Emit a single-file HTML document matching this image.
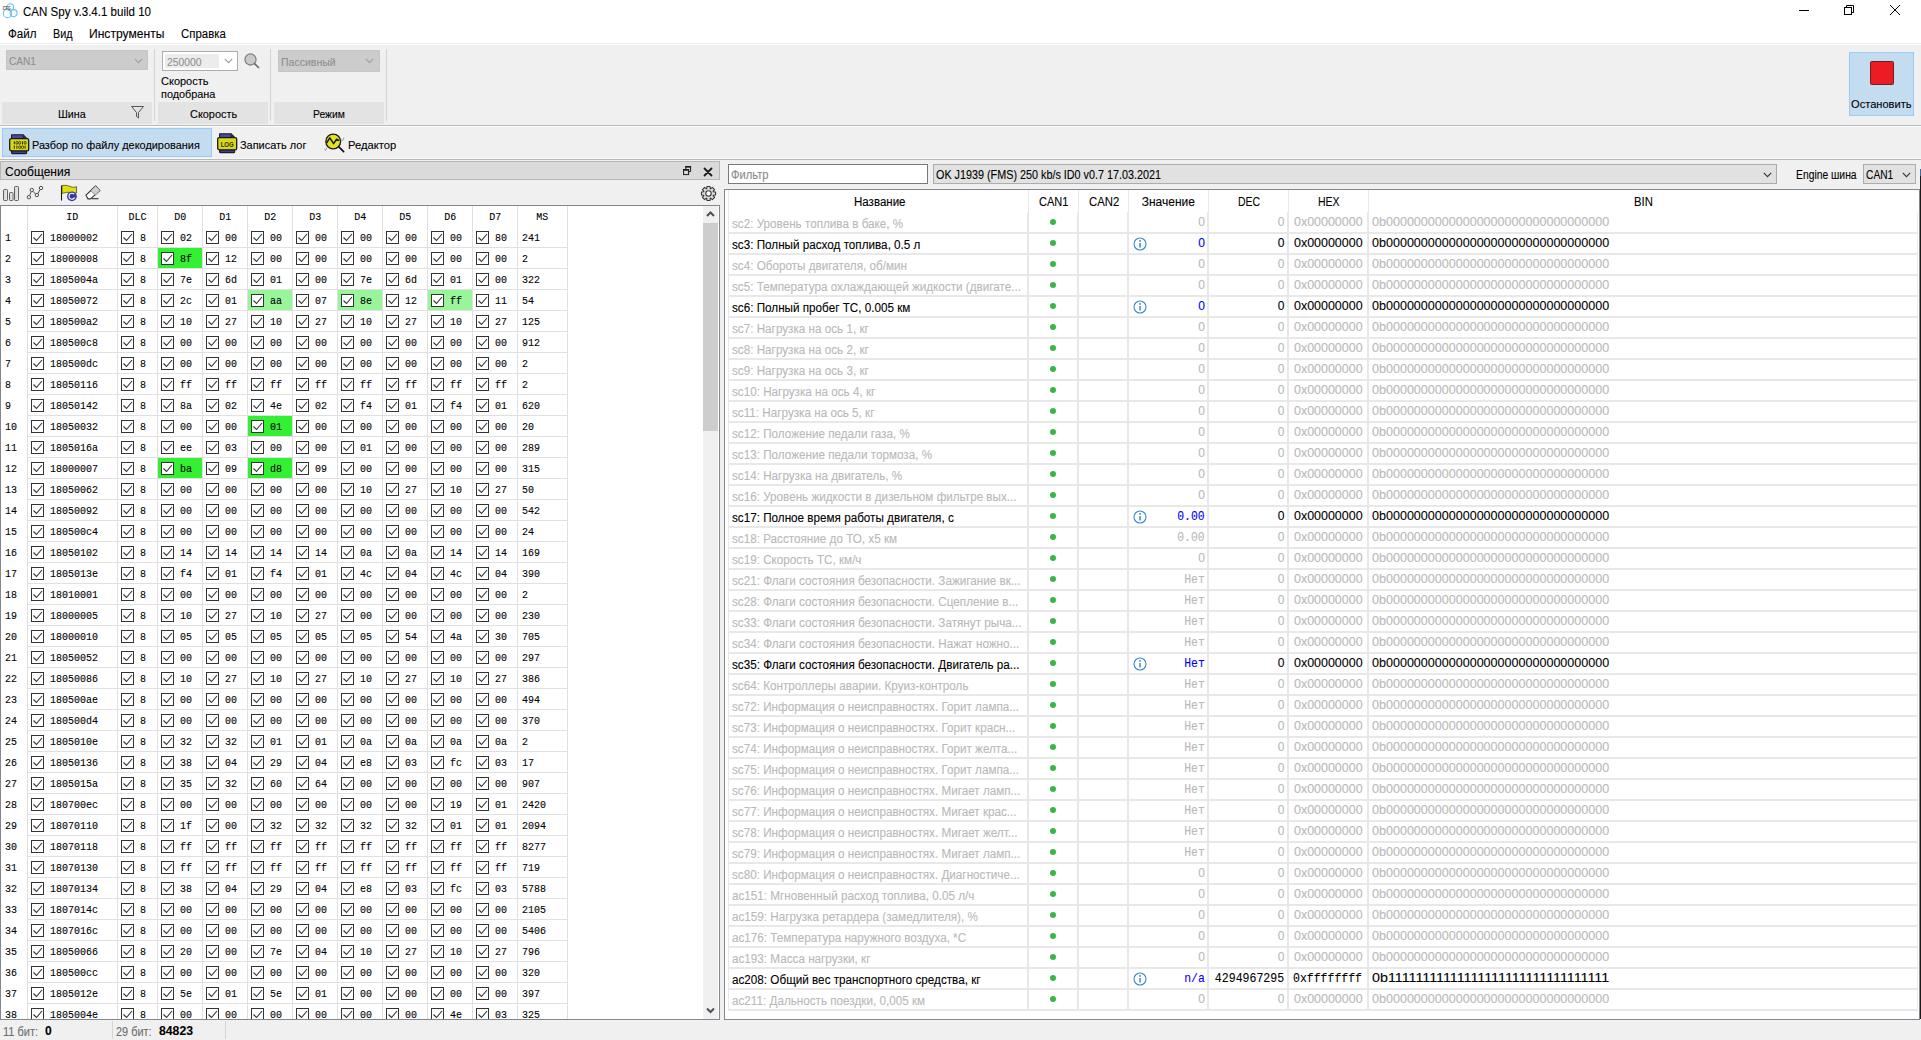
<!DOCTYPE html><html><head><meta charset="utf-8"><title>CAN Spy</title><style>
*{margin:0;padding:0;box-sizing:border-box}
html,body{width:1921px;height:1040px;overflow:hidden;background:#f0f0f0;position:relative;font-family:'Liberation Sans', sans-serif;font-size:12px;color:#000}
.t{position:absolute;white-space:nowrap;line-height:14px;-webkit-text-stroke:0.1px currentColor}
.cb{position:absolute;width:13px;height:13px;border:1px solid #333;background:#fff}
</style></head><body>
<div style="position:absolute;left:0px;top:0px;width:1921px;height:43px;background:#fff">
</div>
<svg style="position:absolute;left:0;top:0" width="20" height="20" viewBox="0 0 20 20"><circle cx="10.2" cy="7.2" r="3.4" fill="none" stroke="#70c0f0" stroke-width="1.1"/><circle cx="7.5" cy="13.4" r="4.2" fill="none" stroke="#70c0f0" stroke-width="1.1"/><circle cx="13.6" cy="13.1" r="3.5" fill="none" stroke="#70c0f0" stroke-width="1.1"/><text x="2.7" y="10" font-size="5" font-weight="bold" font-family="Liberation Sans" fill="#555" textLength="8.2" lengthAdjust="spacingAndGlyphs">CFG</text></svg>
<div class="t" style="left:23px;top:5px;font-family:'Liberation Sans', sans-serif;font-size:12px;transform:scaleX(0.9611);transform-origin:0 0;">CAN Spy v.3.4.1 build 10</div>
<svg style="position:absolute;left:1790px;top:0" width="131" height="22"><line x1="9" y1="10.5" x2="19" y2="10.5" stroke="#000" stroke-width="1"/><rect x="54.5" y="7.5" width="7" height="7" fill="none" stroke="#000"/><path d="M56.5 7.5 V5.5 H63.5 V12.5 H61.5" fill="none" stroke="#000"/><path d="M100 5 L110 15 M110 5 L100 15" stroke="#000" stroke-width="1"/></svg>
<div class="t" style="left:8px;top:27px;font-family:'Liberation Sans', sans-serif;font-size:12px;transform:scaleX(0.9656);transform-origin:0 0;">Файл</div>
<div class="t" style="left:53px;top:27px;font-family:'Liberation Sans', sans-serif;font-size:12px;transform:scaleX(0.8978);transform-origin:0 0;">Вид</div>
<div class="t" style="left:89px;top:27px;font-family:'Liberation Sans', sans-serif;font-size:12px;transform:scaleX(1.0076);transform-origin:0 0;">Инструменты</div>
<div class="t" style="left:181px;top:27px;font-family:'Liberation Sans', sans-serif;font-size:12px;transform:scaleX(0.9516);transform-origin:0 0;">Справка</div>
<div style="position:absolute;left:0px;top:43px;width:1921px;height:1px;background:#ececec">
</div>
<div style="position:absolute;left:0px;top:44px;width:1921px;height:1px;background:#ffffff">
</div>
<div style="position:absolute;left:0px;top:125px;width:1921px;height:1px;background:#bcbcbc">
</div>
<div style="position:absolute;left:0px;top:126px;width:1921px;height:1px;background:#ffffff">
</div>
<div style="position:absolute;left:6px;top:50px;width:142px;height:20px;background:#cccccc;border:1px solid #c6c6c6">
</div>
<div class="t" style="left:9px;top:54px;font-family:'Liberation Sans', sans-serif;font-size:11px;transform:scaleX(0.9201);transform-origin:0 0;color:#8f8f8f">CAN1</div>
<svg style="position:absolute;left:134px;top:58px" width="10" height="6"><path d="M0.8 0.8 L4.5 4.6 L8.2 0.8" fill="none" stroke="#a0a0a0" stroke-width="1.1"/></svg>
<div style="position:absolute;left:2px;top:102px;width:150px;height:22px;background:#e3e3e3">
</div>
<div class="t" style="left:58px;top:107px;font-family:'Liberation Sans', sans-serif;font-size:11px;transform:scaleX(0.9781);transform-origin:0 0;">Шина</div>
<svg style="position:absolute;left:131px;top:106px" width="13" height="13"><path d="M0.5 0.5 H12.5 L7.5 6.5 V12 L5.5 10.5 V6.5 Z" fill="none" stroke="#555"/></svg>
<div style="position:absolute;left:154px;top:49px;width:1px;height:72px;background:#d3d3d3">
</div>
<div style="position:absolute;left:162px;top:51px;width:76px;height:20px;background:#fff;border:1px solid #adadad">
</div>
<div style="position:absolute;left:165px;top:54px;width:54px;height:14px;background:#ececec">
</div>
<div class="t" style="left:167px;top:55px;font-family:'Liberation Sans', sans-serif;font-size:11px;transform:scaleX(0.9396);transform-origin:0 0;color:#8f8f8f">250000</div>
<svg style="position:absolute;left:224px;top:58px" width="10" height="6"><path d="M0.8 0.8 L4.5 4.6 L8.2 0.8" fill="none" stroke="#999" stroke-width="1.1"/></svg>
<svg style="position:absolute;left:244px;top:53px" width="16" height="16"><circle cx="6.5" cy="6.5" r="5.6" fill="#c9c9c9" stroke="#7a7a7a" stroke-width="1.1"/><path d="M10.3 10.3 L15 15" stroke="#6a6a6a" stroke-width="1.7"/></svg>
<div class="t" style="left:161px;top:74px;font-family:'Liberation Sans', sans-serif;font-size:11px;;">Скорость</div>
<div class="t" style="left:161px;top:87px;font-family:'Liberation Sans', sans-serif;font-size:11px;transform:scaleX(0.9871);transform-origin:0 0;">подобрана</div>
<div style="position:absolute;left:158px;top:102px;width:110px;height:22px;background:#e3e3e3">
</div>
<div class="t" style="left:190px;top:107px;font-family:'Liberation Sans', sans-serif;font-size:11px;transform:scaleX(0.9934);transform-origin:0 0;">Скорость</div>
<div style="position:absolute;left:270px;top:49px;width:1px;height:72px;background:#d3d3d3">
</div>
<div style="position:absolute;left:278px;top:50px;width:102px;height:22px;background:#cccccc;border:1px solid #c6c6c6">
</div>
<div class="t" style="left:281px;top:55px;font-family:'Liberation Sans', sans-serif;font-size:11px;transform:scaleX(0.9573);transform-origin:0 0;color:#8f8f8f">Пассивный</div>
<svg style="position:absolute;left:365px;top:58px" width="10" height="6"><path d="M0.8 0.8 L4.5 4.6 L8.2 0.8" fill="none" stroke="#a0a0a0" stroke-width="1.1"/></svg>
<div style="position:absolute;left:274px;top:102px;width:110px;height:22px;background:#e3e3e3">
</div>
<div class="t" style="left:313px;top:107px;font-family:'Liberation Sans', sans-serif;font-size:11px;transform:scaleX(0.9404);transform-origin:0 0;">Режим</div>
<div style="position:absolute;left:386px;top:49px;width:1px;height:72px;background:#d3d3d3">
</div>
<div style="position:absolute;left:1849px;top:52px;width:65px;height:64px;background:#c4dcf0;border:1px solid #99cbf3">
</div>
<div style="position:absolute;left:1870px;top:61px;width:24px;height:24px;background:#ec1c24;border:1px solid #6e2020;border-radius:1.5px">
</div>
<div class="t" style="left:1851px;top:97px;font-family:'Liberation Sans', sans-serif;font-size:11.5px;transform:scaleX(0.9653);transform-origin:0 0;">Остановить</div>
<div style="position:absolute;left:2px;top:128px;width:210px;height:29px;background:#c4dcf0;border:1px solid #99cbf3">
</div>
<svg style="position:absolute;left:8.5px;top:133.5px" width="22" height="22" viewBox="0 0 22 22"><path d="M2.6 9 V0.7 H14 L17.6 4.3 V9 Z" fill="#4848a4" stroke="#1a1a30" stroke-width="1.1" stroke-linejoin="round"/><path d="M14 0.7 V4.3 H17.6" fill="#2a2a60" stroke="#1a1a30" stroke-width="0.6"/><rect x="2.6" y="16" width="15" height="3.6" rx="0.6" fill="#3c3c90" stroke="#1a1a30" stroke-width="1.1"/><rect x="0.7" y="4.6" width="19" height="12.2" rx="1.6" fill="#d8d818" stroke="#1a1a1a" stroke-width="1.3"/><rect x="4.80" y="7.2" width="1" height="3.2" fill="#303010"/><ellipse cx="7.90" cy="8.8" rx="1.05" ry="1.45" fill="none" stroke="#303010" stroke-width="0.85"/><ellipse cx="10.70" cy="8.8" rx="1.05" ry="1.45" fill="none" stroke="#303010" stroke-width="0.85"/><rect x="13.00" y="7.2" width="1" height="3.2" fill="#303010"/><ellipse cx="16.10" cy="8.8" rx="1.05" ry="1.45" fill="none" stroke="#303010" stroke-width="0.85"/><rect x="4.80" y="11.6" width="1" height="3.2" fill="#303010"/><rect x="7.40" y="11.6" width="1" height="3.2" fill="#303010"/><ellipse cx="10.70" cy="13.2" rx="1.05" ry="1.45" fill="none" stroke="#303010" stroke-width="0.85"/><ellipse cx="13.50" cy="13.2" rx="1.05" ry="1.45" fill="none" stroke="#303010" stroke-width="0.85"/><rect x="15.60" y="11.6" width="1" height="3.2" fill="#303010"/></svg>
<div class="t" style="left:32px;top:138px;font-family:'Liberation Sans', sans-serif;font-size:11px;transform:scaleX(0.9925);transform-origin:0 0;">Разбор по файлу декодирования</div>
<svg style="position:absolute;left:216.5px;top:132.5px" width="22" height="22" viewBox="0 0 22 22"><path d="M2.6 9 V0.7 H14 L17.6 4.3 V9 Z" fill="#4848a4" stroke="#1a1a30" stroke-width="1.1" stroke-linejoin="round"/><path d="M14 0.7 V4.3 H17.6" fill="#2a2a60" stroke="#1a1a30" stroke-width="0.6"/><rect x="2.6" y="16" width="15" height="3.6" rx="0.6" fill="#3c3c90" stroke="#1a1a30" stroke-width="1.1"/><rect x="0.7" y="4.6" width="19" height="12.2" rx="1.6" fill="#d8d818" stroke="#1a1a1a" stroke-width="1.3"/><text x="10.2" y="14.2" text-anchor="middle" font-size="6.6" font-weight="bold" font-family="Liberation Sans" fill="#2a2a10" textLength="13" lengthAdjust="spacingAndGlyphs">LOG</text></svg>
<div class="t" style="left:240px;top:138px;font-family:'Liberation Sans', sans-serif;font-size:11px;transform:scaleX(0.9948);transform-origin:0 0;">Записать лог</div>
<svg style="position:absolute;left:322px;top:131px" width="24" height="24" viewBox="0 0 24 24"><circle cx="11.2" cy="10.5" r="7.4" fill="#e2e222" stroke="#1a1a1a" stroke-width="1.3"/><path d="M4.6 12 L7.8 6.8 L11.6 12.6 L14.6 8.2 L17.2 9.6" fill="none" stroke="#1a1a1a" stroke-width="1.5" stroke-linejoin="round"/><path d="M16.6 15.6 L21.6 20.6" stroke="#1a1a1a" stroke-width="1.8" stroke-linecap="round"/><path d="M2.6 17.5 L3.6 19.5 L5 16.5 M19.5 8.5 L20.5 10 L22 6.5" fill="none" stroke="#8a9a8a" stroke-width="0.8"/></svg>
<div class="t" style="left:348px;top:138px;font-family:'Liberation Sans', sans-serif;font-size:11px;transform:scaleX(1.0156);transform-origin:0 0;">Редактор</div>
<div style="position:absolute;left:0px;top:158px;width:1921px;height:1px;background:#f8f8f8">
</div>
<div style="position:absolute;left:0px;top:159px;width:1921px;height:1px;background:#b9b9b9">
</div>
<div style="position:absolute;left:0px;top:161px;width:720px;height:19px;background:#dadada;border:1px solid #b6b6b6">
</div>
<div class="t" style="left:5px;top:165px;font-family:'Liberation Sans', sans-serif;font-size:12px;;">Сообщения</div>
<svg style="position:absolute;left:682px;top:165px" width="12" height="12"><path d="M3.8 4 V1.6 H8.6 V6.6 H6.6" fill="none" stroke="#1a1a1a" stroke-width="1"/><rect x="3.3" y="1" width="5.8" height="1.6" fill="#1a1a1a"/><rect x="1.6" y="4.6" width="5" height="5" fill="none" stroke="#1a1a1a" stroke-width="1"/><rect x="1.1" y="4.1" width="6" height="1.6" fill="#1a1a1a"/></svg>
<svg style="position:absolute;left:703px;top:167px" width="10" height="10"><path d="M1.5 1.5 L8.5 8.5 M8.5 1.5 L1.5 8.5" stroke="#1a1a1a" stroke-width="1.8" stroke-linecap="round"/></svg>
<svg style="position:absolute;left:0;top:180px" width="110" height="26" viewBox="0 0 110 26"><defs><linearGradient id="bg1" x1="0" x2="1"><stop offset="0" stop-color="#d0d0d0"/><stop offset="1" stop-color="#f0f0f0"/></linearGradient></defs><rect x="3.5" y="9.5" width="4" height="11" rx="0.8" fill="url(#bg1)" stroke="#606060"/><rect x="9.5" y="12.5" width="3.5" height="8" rx="0.8" fill="url(#bg1)" stroke="#606060"/><rect x="14.5" y="6.5" width="4" height="14" rx="0.8" fill="url(#bg1)" stroke="#606060"/><path d="M29.6 15.6 L31.2 11.6 M33 11.4 L35.8 14.2 M37.8 13.6 L40.2 9.4" stroke="#505050" stroke-width="1"/><circle cx="28.9" cy="17.2" r="1.7" fill="#f0f0f0" stroke="#505050" stroke-width="1"/><circle cx="31.8" cy="10" r="1.7" fill="#f0f0f0" stroke="#505050" stroke-width="1"/><circle cx="36.9" cy="15" r="1.7" fill="#f0f0f0" stroke="#505050" stroke-width="1"/><circle cx="41" cy="8" r="1.7" fill="#f0f0f0" stroke="#505050" stroke-width="1"/><path d="M61.5 20.6 V5.5" stroke="#1a1a1a" stroke-width="1.1"/><path d="M62 5.6 C65 5 68 5.4 71 6.8 C73 7.6 75 7.4 76.5 6.6 V13 C74 13.6 72 13 69.5 12.4 C67 11.8 64.5 13 62 13.4 Z" fill="#e0e010" stroke="#3a3a10" stroke-width="0.7"/><circle cx="71.9" cy="16.3" r="4.9" fill="#3c3ca8"/><path d="M74.2 14.2 A3 3 0 1 0 74.6 17.6" fill="none" stroke="#ffffff" stroke-width="1.1"/><circle cx="71.9" cy="16.3" r="1.3" fill="#3030a0"/><path d="M86 15.2 L95.6 6 L99.9 10.6 L90.5 18.9 L88 18.9 Z" fill="#ffffff" stroke="#303030" stroke-width="1.1" stroke-linejoin="round"/><path d="M95.6 6 L99.9 10.6 L95.2 15 L91 10.7 Z" fill="#cfcfcf"/><path d="M91 10.7 L95.2 15" stroke="#505050" stroke-width="0.6"/><path d="M91.5 18.7 H98.5" stroke="#303030" stroke-width="1.1"/></svg>
<svg style="position:absolute;left:699.5px;top:184.5px" width="17" height="17" viewBox="0 0 17 17"><path d="M6.70 3.73 L6.93 1.47 L10.07 1.47 L10.30 3.73 L10.60 3.85 L12.36 2.42 L14.58 4.64 L13.15 6.40 L13.27 6.70 L15.53 6.93 L15.53 10.07 L13.27 10.30 L13.15 10.60 L14.58 12.36 L12.36 14.58 L10.60 13.15 L10.30 13.27 L10.07 15.53 L6.93 15.53 L6.70 13.27 L6.40 13.15 L4.64 14.58 L2.42 12.36 L3.85 10.60 L3.73 10.30 L1.47 10.07 L1.47 6.93 L3.73 6.70 L3.85 6.40 L2.42 4.64 L4.64 2.42 L6.40 3.85 Z" fill="#dadada" stroke="#383838" stroke-width="1.1" stroke-linejoin="round"/><circle cx="8.5" cy="8.5" r="2.7" fill="#fff" stroke="#383838" stroke-width="1.1"/></svg>
<div style="position:absolute;left:0px;top:205px;width:720px;height:815px;background:#fff;border:1px solid #828790">
</div>
<div style="position:absolute;left:27px;top:206px;width:1px;height:813px;background:#e0e0e0">
</div>
<div style="position:absolute;left:117px;top:206px;width:1px;height:813px;background:#e0e0e0">
</div>
<div style="position:absolute;left:157px;top:206px;width:1px;height:813px;background:#e0e0e0">
</div>
<div style="position:absolute;left:202px;top:206px;width:1px;height:813px;background:#e0e0e0">
</div>
<div style="position:absolute;left:247px;top:206px;width:1px;height:813px;background:#e0e0e0">
</div>
<div style="position:absolute;left:292px;top:206px;width:1px;height:813px;background:#e0e0e0">
</div>
<div style="position:absolute;left:337px;top:206px;width:1px;height:813px;background:#e0e0e0">
</div>
<div style="position:absolute;left:382px;top:206px;width:1px;height:813px;background:#e0e0e0">
</div>
<div style="position:absolute;left:427px;top:206px;width:1px;height:813px;background:#e0e0e0">
</div>
<div style="position:absolute;left:472px;top:206px;width:1px;height:813px;background:#e0e0e0">
</div>
<div style="position:absolute;left:517px;top:206px;width:1px;height:813px;background:#e0e0e0">
</div>
<div style="position:absolute;left:567px;top:206px;width:1px;height:813px;background:#e0e0e0">
</div>
<div class="t" style="left:66.14px;top:210px;font-family:'Liberation Mono', monospace;font-size:10.6px;transform:scaleX(0.9435);transform-origin:6.36px 0;">ID</div>
<div class="t" style="left:127.96px;top:210px;font-family:'Liberation Mono', monospace;font-size:10.6px;transform:scaleX(0.9435);transform-origin:9.54px 0;">DLC</div>
<div class="t" style="left:173.64px;top:210px;font-family:'Liberation Mono', monospace;font-size:10.6px;transform:scaleX(0.9435);transform-origin:6.36px 0;">D0</div>
<div class="t" style="left:218.64px;top:210px;font-family:'Liberation Mono', monospace;font-size:10.6px;transform:scaleX(0.9435);transform-origin:6.36px 0;">D1</div>
<div class="t" style="left:263.64px;top:210px;font-family:'Liberation Mono', monospace;font-size:10.6px;transform:scaleX(0.9435);transform-origin:6.36px 0;">D2</div>
<div class="t" style="left:308.64px;top:210px;font-family:'Liberation Mono', monospace;font-size:10.6px;transform:scaleX(0.9435);transform-origin:6.36px 0;">D3</div>
<div class="t" style="left:353.64px;top:210px;font-family:'Liberation Mono', monospace;font-size:10.6px;transform:scaleX(0.9435);transform-origin:6.36px 0;">D4</div>
<div class="t" style="left:398.64px;top:210px;font-family:'Liberation Mono', monospace;font-size:10.6px;transform:scaleX(0.9435);transform-origin:6.36px 0;">D5</div>
<div class="t" style="left:443.64px;top:210px;font-family:'Liberation Mono', monospace;font-size:10.6px;transform:scaleX(0.9435);transform-origin:6.36px 0;">D6</div>
<div class="t" style="left:488.64px;top:210px;font-family:'Liberation Mono', monospace;font-size:10.6px;transform:scaleX(0.9435);transform-origin:6.36px 0;">D7</div>
<div class="t" style="left:536.14px;top:210px;font-family:'Liberation Mono', monospace;font-size:10.6px;transform:scaleX(0.9435);transform-origin:6.36px 0;">MS</div>
<div style="position:absolute;left:27px;top:247px;width:540px;height:1px;background:#e0e0e0">
</div>
<div class="t" style="left:5px;top:231px;font-family:'Liberation Mono', monospace;font-size:10.6px;transform:scaleX(0.9435);transform-origin:0 0;">1</div>
<div class="cb" style="left:31px;top:231px"><svg width="11" height="11" style="position:absolute;left:0;top:0"><path d="M1.5 5.5 L4.5 8.5 L10 2" fill="none" stroke="#333" stroke-width="1.1"/></svg></div>
<div class="t" style="left:50px;top:231px;font-family:'Liberation Mono', monospace;font-size:10.6px;transform:scaleX(0.9438);transform-origin:0 0;">18000002</div>
<div class="cb" style="left:121px;top:231px"><svg width="11" height="11" style="position:absolute;left:0;top:0"><path d="M1.5 5.5 L4.5 8.5 L10 2" fill="none" stroke="#333" stroke-width="1.1"/></svg></div>
<div class="t" style="left:140px;top:231px;font-family:'Liberation Mono', monospace;font-size:10.6px;transform:scaleX(0.9435);transform-origin:0 0;">8</div>
<div class="cb" style="left:161px;top:231px"><svg width="11" height="11" style="position:absolute;left:0;top:0"><path d="M1.5 5.5 L4.5 8.5 L10 2" fill="none" stroke="#333" stroke-width="1.1"/></svg></div>
<div class="t" style="left:180px;top:231px;font-family:'Liberation Mono', monospace;font-size:10.6px;transform:scaleX(0.9435);transform-origin:0 0;">02</div>
<div class="cb" style="left:206px;top:231px"><svg width="11" height="11" style="position:absolute;left:0;top:0"><path d="M1.5 5.5 L4.5 8.5 L10 2" fill="none" stroke="#333" stroke-width="1.1"/></svg></div>
<div class="t" style="left:225px;top:231px;font-family:'Liberation Mono', monospace;font-size:10.6px;transform:scaleX(0.9435);transform-origin:0 0;">00</div>
<div class="cb" style="left:251px;top:231px"><svg width="11" height="11" style="position:absolute;left:0;top:0"><path d="M1.5 5.5 L4.5 8.5 L10 2" fill="none" stroke="#333" stroke-width="1.1"/></svg></div>
<div class="t" style="left:270px;top:231px;font-family:'Liberation Mono', monospace;font-size:10.6px;transform:scaleX(0.9435);transform-origin:0 0;">00</div>
<div class="cb" style="left:296px;top:231px"><svg width="11" height="11" style="position:absolute;left:0;top:0"><path d="M1.5 5.5 L4.5 8.5 L10 2" fill="none" stroke="#333" stroke-width="1.1"/></svg></div>
<div class="t" style="left:315px;top:231px;font-family:'Liberation Mono', monospace;font-size:10.6px;transform:scaleX(0.9435);transform-origin:0 0;">00</div>
<div class="cb" style="left:341px;top:231px"><svg width="11" height="11" style="position:absolute;left:0;top:0"><path d="M1.5 5.5 L4.5 8.5 L10 2" fill="none" stroke="#333" stroke-width="1.1"/></svg></div>
<div class="t" style="left:360px;top:231px;font-family:'Liberation Mono', monospace;font-size:10.6px;transform:scaleX(0.9435);transform-origin:0 0;">00</div>
<div class="cb" style="left:386px;top:231px"><svg width="11" height="11" style="position:absolute;left:0;top:0"><path d="M1.5 5.5 L4.5 8.5 L10 2" fill="none" stroke="#333" stroke-width="1.1"/></svg></div>
<div class="t" style="left:405px;top:231px;font-family:'Liberation Mono', monospace;font-size:10.6px;transform:scaleX(0.9435);transform-origin:0 0;">00</div>
<div class="cb" style="left:431px;top:231px"><svg width="11" height="11" style="position:absolute;left:0;top:0"><path d="M1.5 5.5 L4.5 8.5 L10 2" fill="none" stroke="#333" stroke-width="1.1"/></svg></div>
<div class="t" style="left:450px;top:231px;font-family:'Liberation Mono', monospace;font-size:10.6px;transform:scaleX(0.9435);transform-origin:0 0;">00</div>
<div class="cb" style="left:476px;top:231px"><svg width="11" height="11" style="position:absolute;left:0;top:0"><path d="M1.5 5.5 L4.5 8.5 L10 2" fill="none" stroke="#333" stroke-width="1.1"/></svg></div>
<div class="t" style="left:495px;top:231px;font-family:'Liberation Mono', monospace;font-size:10.6px;transform:scaleX(0.9435);transform-origin:0 0;">80</div>
<div class="t" style="left:522px;top:231px;font-family:'Liberation Mono', monospace;font-size:10.6px;transform:scaleX(0.9435);transform-origin:0 0;">241</div>
<div style="position:absolute;left:27px;top:268px;width:540px;height:1px;background:#e0e0e0">
</div>
<div class="t" style="left:5px;top:252px;font-family:'Liberation Mono', monospace;font-size:10.6px;transform:scaleX(0.9435);transform-origin:0 0;">2</div>
<div style="position:absolute;left:158px;top:248px;width:44px;height:20px;background:#33f033">
</div>
<div class="cb" style="left:31px;top:252px"><svg width="11" height="11" style="position:absolute;left:0;top:0"><path d="M1.5 5.5 L4.5 8.5 L10 2" fill="none" stroke="#333" stroke-width="1.1"/></svg></div>
<div class="t" style="left:50px;top:252px;font-family:'Liberation Mono', monospace;font-size:10.6px;transform:scaleX(0.9438);transform-origin:0 0;">18000008</div>
<div class="cb" style="left:121px;top:252px"><svg width="11" height="11" style="position:absolute;left:0;top:0"><path d="M1.5 5.5 L4.5 8.5 L10 2" fill="none" stroke="#333" stroke-width="1.1"/></svg></div>
<div class="t" style="left:140px;top:252px;font-family:'Liberation Mono', monospace;font-size:10.6px;transform:scaleX(0.9435);transform-origin:0 0;">8</div>
<div class="cb" style="left:161px;top:252px"><svg width="11" height="11" style="position:absolute;left:0;top:0"><path d="M1.5 5.5 L4.5 8.5 L10 2" fill="none" stroke="#333" stroke-width="1.1"/></svg></div>
<div class="t" style="left:180px;top:252px;font-family:'Liberation Mono', monospace;font-size:10.6px;transform:scaleX(0.9435);transform-origin:0 0;">8f</div>
<div class="cb" style="left:206px;top:252px"><svg width="11" height="11" style="position:absolute;left:0;top:0"><path d="M1.5 5.5 L4.5 8.5 L10 2" fill="none" stroke="#333" stroke-width="1.1"/></svg></div>
<div class="t" style="left:225px;top:252px;font-family:'Liberation Mono', monospace;font-size:10.6px;transform:scaleX(0.9435);transform-origin:0 0;">12</div>
<div class="cb" style="left:251px;top:252px"><svg width="11" height="11" style="position:absolute;left:0;top:0"><path d="M1.5 5.5 L4.5 8.5 L10 2" fill="none" stroke="#333" stroke-width="1.1"/></svg></div>
<div class="t" style="left:270px;top:252px;font-family:'Liberation Mono', monospace;font-size:10.6px;transform:scaleX(0.9435);transform-origin:0 0;">00</div>
<div class="cb" style="left:296px;top:252px"><svg width="11" height="11" style="position:absolute;left:0;top:0"><path d="M1.5 5.5 L4.5 8.5 L10 2" fill="none" stroke="#333" stroke-width="1.1"/></svg></div>
<div class="t" style="left:315px;top:252px;font-family:'Liberation Mono', monospace;font-size:10.6px;transform:scaleX(0.9435);transform-origin:0 0;">00</div>
<div class="cb" style="left:341px;top:252px"><svg width="11" height="11" style="position:absolute;left:0;top:0"><path d="M1.5 5.5 L4.5 8.5 L10 2" fill="none" stroke="#333" stroke-width="1.1"/></svg></div>
<div class="t" style="left:360px;top:252px;font-family:'Liberation Mono', monospace;font-size:10.6px;transform:scaleX(0.9435);transform-origin:0 0;">00</div>
<div class="cb" style="left:386px;top:252px"><svg width="11" height="11" style="position:absolute;left:0;top:0"><path d="M1.5 5.5 L4.5 8.5 L10 2" fill="none" stroke="#333" stroke-width="1.1"/></svg></div>
<div class="t" style="left:405px;top:252px;font-family:'Liberation Mono', monospace;font-size:10.6px;transform:scaleX(0.9435);transform-origin:0 0;">00</div>
<div class="cb" style="left:431px;top:252px"><svg width="11" height="11" style="position:absolute;left:0;top:0"><path d="M1.5 5.5 L4.5 8.5 L10 2" fill="none" stroke="#333" stroke-width="1.1"/></svg></div>
<div class="t" style="left:450px;top:252px;font-family:'Liberation Mono', monospace;font-size:10.6px;transform:scaleX(0.9435);transform-origin:0 0;">00</div>
<div class="cb" style="left:476px;top:252px"><svg width="11" height="11" style="position:absolute;left:0;top:0"><path d="M1.5 5.5 L4.5 8.5 L10 2" fill="none" stroke="#333" stroke-width="1.1"/></svg></div>
<div class="t" style="left:495px;top:252px;font-family:'Liberation Mono', monospace;font-size:10.6px;transform:scaleX(0.9435);transform-origin:0 0;">00</div>
<div class="t" style="left:522px;top:252px;font-family:'Liberation Mono', monospace;font-size:10.6px;transform:scaleX(0.9435);transform-origin:0 0;">2</div>
<div style="position:absolute;left:27px;top:289px;width:540px;height:1px;background:#e0e0e0">
</div>
<div class="t" style="left:5px;top:273px;font-family:'Liberation Mono', monospace;font-size:10.6px;transform:scaleX(0.9435);transform-origin:0 0;">3</div>
<div class="cb" style="left:31px;top:273px"><svg width="11" height="11" style="position:absolute;left:0;top:0"><path d="M1.5 5.5 L4.5 8.5 L10 2" fill="none" stroke="#333" stroke-width="1.1"/></svg></div>
<div class="t" style="left:50px;top:273px;font-family:'Liberation Mono', monospace;font-size:10.6px;transform:scaleX(0.9438);transform-origin:0 0;">1805004a</div>
<div class="cb" style="left:121px;top:273px"><svg width="11" height="11" style="position:absolute;left:0;top:0"><path d="M1.5 5.5 L4.5 8.5 L10 2" fill="none" stroke="#333" stroke-width="1.1"/></svg></div>
<div class="t" style="left:140px;top:273px;font-family:'Liberation Mono', monospace;font-size:10.6px;transform:scaleX(0.9435);transform-origin:0 0;">8</div>
<div class="cb" style="left:161px;top:273px"><svg width="11" height="11" style="position:absolute;left:0;top:0"><path d="M1.5 5.5 L4.5 8.5 L10 2" fill="none" stroke="#333" stroke-width="1.1"/></svg></div>
<div class="t" style="left:180px;top:273px;font-family:'Liberation Mono', monospace;font-size:10.6px;transform:scaleX(0.9435);transform-origin:0 0;">7e</div>
<div class="cb" style="left:206px;top:273px"><svg width="11" height="11" style="position:absolute;left:0;top:0"><path d="M1.5 5.5 L4.5 8.5 L10 2" fill="none" stroke="#333" stroke-width="1.1"/></svg></div>
<div class="t" style="left:225px;top:273px;font-family:'Liberation Mono', monospace;font-size:10.6px;transform:scaleX(0.9435);transform-origin:0 0;">6d</div>
<div class="cb" style="left:251px;top:273px"><svg width="11" height="11" style="position:absolute;left:0;top:0"><path d="M1.5 5.5 L4.5 8.5 L10 2" fill="none" stroke="#333" stroke-width="1.1"/></svg></div>
<div class="t" style="left:270px;top:273px;font-family:'Liberation Mono', monospace;font-size:10.6px;transform:scaleX(0.9435);transform-origin:0 0;">01</div>
<div class="cb" style="left:296px;top:273px"><svg width="11" height="11" style="position:absolute;left:0;top:0"><path d="M1.5 5.5 L4.5 8.5 L10 2" fill="none" stroke="#333" stroke-width="1.1"/></svg></div>
<div class="t" style="left:315px;top:273px;font-family:'Liberation Mono', monospace;font-size:10.6px;transform:scaleX(0.9435);transform-origin:0 0;">00</div>
<div class="cb" style="left:341px;top:273px"><svg width="11" height="11" style="position:absolute;left:0;top:0"><path d="M1.5 5.5 L4.5 8.5 L10 2" fill="none" stroke="#333" stroke-width="1.1"/></svg></div>
<div class="t" style="left:360px;top:273px;font-family:'Liberation Mono', monospace;font-size:10.6px;transform:scaleX(0.9435);transform-origin:0 0;">7e</div>
<div class="cb" style="left:386px;top:273px"><svg width="11" height="11" style="position:absolute;left:0;top:0"><path d="M1.5 5.5 L4.5 8.5 L10 2" fill="none" stroke="#333" stroke-width="1.1"/></svg></div>
<div class="t" style="left:405px;top:273px;font-family:'Liberation Mono', monospace;font-size:10.6px;transform:scaleX(0.9435);transform-origin:0 0;">6d</div>
<div class="cb" style="left:431px;top:273px"><svg width="11" height="11" style="position:absolute;left:0;top:0"><path d="M1.5 5.5 L4.5 8.5 L10 2" fill="none" stroke="#333" stroke-width="1.1"/></svg></div>
<div class="t" style="left:450px;top:273px;font-family:'Liberation Mono', monospace;font-size:10.6px;transform:scaleX(0.9435);transform-origin:0 0;">01</div>
<div class="cb" style="left:476px;top:273px"><svg width="11" height="11" style="position:absolute;left:0;top:0"><path d="M1.5 5.5 L4.5 8.5 L10 2" fill="none" stroke="#333" stroke-width="1.1"/></svg></div>
<div class="t" style="left:495px;top:273px;font-family:'Liberation Mono', monospace;font-size:10.6px;transform:scaleX(0.9435);transform-origin:0 0;">00</div>
<div class="t" style="left:522px;top:273px;font-family:'Liberation Mono', monospace;font-size:10.6px;transform:scaleX(0.9435);transform-origin:0 0;">322</div>
<div style="position:absolute;left:27px;top:310px;width:540px;height:1px;background:#e0e0e0">
</div>
<div class="t" style="left:5px;top:294px;font-family:'Liberation Mono', monospace;font-size:10.6px;transform:scaleX(0.9435);transform-origin:0 0;">4</div>
<div style="position:absolute;left:248px;top:290px;width:44px;height:20px;background:#99f599">
</div>
<div style="position:absolute;left:338px;top:290px;width:44px;height:20px;background:#99f599">
</div>
<div style="position:absolute;left:428px;top:290px;width:44px;height:20px;background:#99f599">
</div>
<div class="cb" style="left:31px;top:294px"><svg width="11" height="11" style="position:absolute;left:0;top:0"><path d="M1.5 5.5 L4.5 8.5 L10 2" fill="none" stroke="#333" stroke-width="1.1"/></svg></div>
<div class="t" style="left:50px;top:294px;font-family:'Liberation Mono', monospace;font-size:10.6px;transform:scaleX(0.9438);transform-origin:0 0;">18050072</div>
<div class="cb" style="left:121px;top:294px"><svg width="11" height="11" style="position:absolute;left:0;top:0"><path d="M1.5 5.5 L4.5 8.5 L10 2" fill="none" stroke="#333" stroke-width="1.1"/></svg></div>
<div class="t" style="left:140px;top:294px;font-family:'Liberation Mono', monospace;font-size:10.6px;transform:scaleX(0.9435);transform-origin:0 0;">8</div>
<div class="cb" style="left:161px;top:294px"><svg width="11" height="11" style="position:absolute;left:0;top:0"><path d="M1.5 5.5 L4.5 8.5 L10 2" fill="none" stroke="#333" stroke-width="1.1"/></svg></div>
<div class="t" style="left:180px;top:294px;font-family:'Liberation Mono', monospace;font-size:10.6px;transform:scaleX(0.9435);transform-origin:0 0;">2c</div>
<div class="cb" style="left:206px;top:294px"><svg width="11" height="11" style="position:absolute;left:0;top:0"><path d="M1.5 5.5 L4.5 8.5 L10 2" fill="none" stroke="#333" stroke-width="1.1"/></svg></div>
<div class="t" style="left:225px;top:294px;font-family:'Liberation Mono', monospace;font-size:10.6px;transform:scaleX(0.9435);transform-origin:0 0;">01</div>
<div class="cb" style="left:251px;top:294px"><svg width="11" height="11" style="position:absolute;left:0;top:0"><path d="M1.5 5.5 L4.5 8.5 L10 2" fill="none" stroke="#333" stroke-width="1.1"/></svg></div>
<div class="t" style="left:270px;top:294px;font-family:'Liberation Mono', monospace;font-size:10.6px;transform:scaleX(0.9435);transform-origin:0 0;">aa</div>
<div class="cb" style="left:296px;top:294px"><svg width="11" height="11" style="position:absolute;left:0;top:0"><path d="M1.5 5.5 L4.5 8.5 L10 2" fill="none" stroke="#333" stroke-width="1.1"/></svg></div>
<div class="t" style="left:315px;top:294px;font-family:'Liberation Mono', monospace;font-size:10.6px;transform:scaleX(0.9435);transform-origin:0 0;">07</div>
<div class="cb" style="left:341px;top:294px"><svg width="11" height="11" style="position:absolute;left:0;top:0"><path d="M1.5 5.5 L4.5 8.5 L10 2" fill="none" stroke="#333" stroke-width="1.1"/></svg></div>
<div class="t" style="left:360px;top:294px;font-family:'Liberation Mono', monospace;font-size:10.6px;transform:scaleX(0.9435);transform-origin:0 0;">8e</div>
<div class="cb" style="left:386px;top:294px"><svg width="11" height="11" style="position:absolute;left:0;top:0"><path d="M1.5 5.5 L4.5 8.5 L10 2" fill="none" stroke="#333" stroke-width="1.1"/></svg></div>
<div class="t" style="left:405px;top:294px;font-family:'Liberation Mono', monospace;font-size:10.6px;transform:scaleX(0.9435);transform-origin:0 0;">12</div>
<div class="cb" style="left:431px;top:294px"><svg width="11" height="11" style="position:absolute;left:0;top:0"><path d="M1.5 5.5 L4.5 8.5 L10 2" fill="none" stroke="#333" stroke-width="1.1"/></svg></div>
<div class="t" style="left:450px;top:294px;font-family:'Liberation Mono', monospace;font-size:10.6px;transform:scaleX(0.9435);transform-origin:0 0;">ff</div>
<div class="cb" style="left:476px;top:294px"><svg width="11" height="11" style="position:absolute;left:0;top:0"><path d="M1.5 5.5 L4.5 8.5 L10 2" fill="none" stroke="#333" stroke-width="1.1"/></svg></div>
<div class="t" style="left:495px;top:294px;font-family:'Liberation Mono', monospace;font-size:10.6px;transform:scaleX(0.9435);transform-origin:0 0;">11</div>
<div class="t" style="left:522px;top:294px;font-family:'Liberation Mono', monospace;font-size:10.6px;transform:scaleX(0.9435);transform-origin:0 0;">54</div>
<div style="position:absolute;left:27px;top:331px;width:540px;height:1px;background:#e0e0e0">
</div>
<div class="t" style="left:5px;top:315px;font-family:'Liberation Mono', monospace;font-size:10.6px;transform:scaleX(0.9435);transform-origin:0 0;">5</div>
<div class="cb" style="left:31px;top:315px"><svg width="11" height="11" style="position:absolute;left:0;top:0"><path d="M1.5 5.5 L4.5 8.5 L10 2" fill="none" stroke="#333" stroke-width="1.1"/></svg></div>
<div class="t" style="left:50px;top:315px;font-family:'Liberation Mono', monospace;font-size:10.6px;transform:scaleX(0.9438);transform-origin:0 0;">180500a2</div>
<div class="cb" style="left:121px;top:315px"><svg width="11" height="11" style="position:absolute;left:0;top:0"><path d="M1.5 5.5 L4.5 8.5 L10 2" fill="none" stroke="#333" stroke-width="1.1"/></svg></div>
<div class="t" style="left:140px;top:315px;font-family:'Liberation Mono', monospace;font-size:10.6px;transform:scaleX(0.9435);transform-origin:0 0;">8</div>
<div class="cb" style="left:161px;top:315px"><svg width="11" height="11" style="position:absolute;left:0;top:0"><path d="M1.5 5.5 L4.5 8.5 L10 2" fill="none" stroke="#333" stroke-width="1.1"/></svg></div>
<div class="t" style="left:180px;top:315px;font-family:'Liberation Mono', monospace;font-size:10.6px;transform:scaleX(0.9435);transform-origin:0 0;">10</div>
<div class="cb" style="left:206px;top:315px"><svg width="11" height="11" style="position:absolute;left:0;top:0"><path d="M1.5 5.5 L4.5 8.5 L10 2" fill="none" stroke="#333" stroke-width="1.1"/></svg></div>
<div class="t" style="left:225px;top:315px;font-family:'Liberation Mono', monospace;font-size:10.6px;transform:scaleX(0.9435);transform-origin:0 0;">27</div>
<div class="cb" style="left:251px;top:315px"><svg width="11" height="11" style="position:absolute;left:0;top:0"><path d="M1.5 5.5 L4.5 8.5 L10 2" fill="none" stroke="#333" stroke-width="1.1"/></svg></div>
<div class="t" style="left:270px;top:315px;font-family:'Liberation Mono', monospace;font-size:10.6px;transform:scaleX(0.9435);transform-origin:0 0;">10</div>
<div class="cb" style="left:296px;top:315px"><svg width="11" height="11" style="position:absolute;left:0;top:0"><path d="M1.5 5.5 L4.5 8.5 L10 2" fill="none" stroke="#333" stroke-width="1.1"/></svg></div>
<div class="t" style="left:315px;top:315px;font-family:'Liberation Mono', monospace;font-size:10.6px;transform:scaleX(0.9435);transform-origin:0 0;">27</div>
<div class="cb" style="left:341px;top:315px"><svg width="11" height="11" style="position:absolute;left:0;top:0"><path d="M1.5 5.5 L4.5 8.5 L10 2" fill="none" stroke="#333" stroke-width="1.1"/></svg></div>
<div class="t" style="left:360px;top:315px;font-family:'Liberation Mono', monospace;font-size:10.6px;transform:scaleX(0.9435);transform-origin:0 0;">10</div>
<div class="cb" style="left:386px;top:315px"><svg width="11" height="11" style="position:absolute;left:0;top:0"><path d="M1.5 5.5 L4.5 8.5 L10 2" fill="none" stroke="#333" stroke-width="1.1"/></svg></div>
<div class="t" style="left:405px;top:315px;font-family:'Liberation Mono', monospace;font-size:10.6px;transform:scaleX(0.9435);transform-origin:0 0;">27</div>
<div class="cb" style="left:431px;top:315px"><svg width="11" height="11" style="position:absolute;left:0;top:0"><path d="M1.5 5.5 L4.5 8.5 L10 2" fill="none" stroke="#333" stroke-width="1.1"/></svg></div>
<div class="t" style="left:450px;top:315px;font-family:'Liberation Mono', monospace;font-size:10.6px;transform:scaleX(0.9435);transform-origin:0 0;">10</div>
<div class="cb" style="left:476px;top:315px"><svg width="11" height="11" style="position:absolute;left:0;top:0"><path d="M1.5 5.5 L4.5 8.5 L10 2" fill="none" stroke="#333" stroke-width="1.1"/></svg></div>
<div class="t" style="left:495px;top:315px;font-family:'Liberation Mono', monospace;font-size:10.6px;transform:scaleX(0.9435);transform-origin:0 0;">27</div>
<div class="t" style="left:522px;top:315px;font-family:'Liberation Mono', monospace;font-size:10.6px;transform:scaleX(0.9435);transform-origin:0 0;">125</div>
<div style="position:absolute;left:27px;top:352px;width:540px;height:1px;background:#e0e0e0">
</div>
<div class="t" style="left:5px;top:336px;font-family:'Liberation Mono', monospace;font-size:10.6px;transform:scaleX(0.9435);transform-origin:0 0;">6</div>
<div class="cb" style="left:31px;top:336px"><svg width="11" height="11" style="position:absolute;left:0;top:0"><path d="M1.5 5.5 L4.5 8.5 L10 2" fill="none" stroke="#333" stroke-width="1.1"/></svg></div>
<div class="t" style="left:50px;top:336px;font-family:'Liberation Mono', monospace;font-size:10.6px;transform:scaleX(0.9438);transform-origin:0 0;">180500c8</div>
<div class="cb" style="left:121px;top:336px"><svg width="11" height="11" style="position:absolute;left:0;top:0"><path d="M1.5 5.5 L4.5 8.5 L10 2" fill="none" stroke="#333" stroke-width="1.1"/></svg></div>
<div class="t" style="left:140px;top:336px;font-family:'Liberation Mono', monospace;font-size:10.6px;transform:scaleX(0.9435);transform-origin:0 0;">8</div>
<div class="cb" style="left:161px;top:336px"><svg width="11" height="11" style="position:absolute;left:0;top:0"><path d="M1.5 5.5 L4.5 8.5 L10 2" fill="none" stroke="#333" stroke-width="1.1"/></svg></div>
<div class="t" style="left:180px;top:336px;font-family:'Liberation Mono', monospace;font-size:10.6px;transform:scaleX(0.9435);transform-origin:0 0;">00</div>
<div class="cb" style="left:206px;top:336px"><svg width="11" height="11" style="position:absolute;left:0;top:0"><path d="M1.5 5.5 L4.5 8.5 L10 2" fill="none" stroke="#333" stroke-width="1.1"/></svg></div>
<div class="t" style="left:225px;top:336px;font-family:'Liberation Mono', monospace;font-size:10.6px;transform:scaleX(0.9435);transform-origin:0 0;">00</div>
<div class="cb" style="left:251px;top:336px"><svg width="11" height="11" style="position:absolute;left:0;top:0"><path d="M1.5 5.5 L4.5 8.5 L10 2" fill="none" stroke="#333" stroke-width="1.1"/></svg></div>
<div class="t" style="left:270px;top:336px;font-family:'Liberation Mono', monospace;font-size:10.6px;transform:scaleX(0.9435);transform-origin:0 0;">00</div>
<div class="cb" style="left:296px;top:336px"><svg width="11" height="11" style="position:absolute;left:0;top:0"><path d="M1.5 5.5 L4.5 8.5 L10 2" fill="none" stroke="#333" stroke-width="1.1"/></svg></div>
<div class="t" style="left:315px;top:336px;font-family:'Liberation Mono', monospace;font-size:10.6px;transform:scaleX(0.9435);transform-origin:0 0;">00</div>
<div class="cb" style="left:341px;top:336px"><svg width="11" height="11" style="position:absolute;left:0;top:0"><path d="M1.5 5.5 L4.5 8.5 L10 2" fill="none" stroke="#333" stroke-width="1.1"/></svg></div>
<div class="t" style="left:360px;top:336px;font-family:'Liberation Mono', monospace;font-size:10.6px;transform:scaleX(0.9435);transform-origin:0 0;">00</div>
<div class="cb" style="left:386px;top:336px"><svg width="11" height="11" style="position:absolute;left:0;top:0"><path d="M1.5 5.5 L4.5 8.5 L10 2" fill="none" stroke="#333" stroke-width="1.1"/></svg></div>
<div class="t" style="left:405px;top:336px;font-family:'Liberation Mono', monospace;font-size:10.6px;transform:scaleX(0.9435);transform-origin:0 0;">00</div>
<div class="cb" style="left:431px;top:336px"><svg width="11" height="11" style="position:absolute;left:0;top:0"><path d="M1.5 5.5 L4.5 8.5 L10 2" fill="none" stroke="#333" stroke-width="1.1"/></svg></div>
<div class="t" style="left:450px;top:336px;font-family:'Liberation Mono', monospace;font-size:10.6px;transform:scaleX(0.9435);transform-origin:0 0;">00</div>
<div class="cb" style="left:476px;top:336px"><svg width="11" height="11" style="position:absolute;left:0;top:0"><path d="M1.5 5.5 L4.5 8.5 L10 2" fill="none" stroke="#333" stroke-width="1.1"/></svg></div>
<div class="t" style="left:495px;top:336px;font-family:'Liberation Mono', monospace;font-size:10.6px;transform:scaleX(0.9435);transform-origin:0 0;">00</div>
<div class="t" style="left:522px;top:336px;font-family:'Liberation Mono', monospace;font-size:10.6px;transform:scaleX(0.9435);transform-origin:0 0;">912</div>
<div style="position:absolute;left:27px;top:373px;width:540px;height:1px;background:#e0e0e0">
</div>
<div class="t" style="left:5px;top:357px;font-family:'Liberation Mono', monospace;font-size:10.6px;transform:scaleX(0.9435);transform-origin:0 0;">7</div>
<div class="cb" style="left:31px;top:357px"><svg width="11" height="11" style="position:absolute;left:0;top:0"><path d="M1.5 5.5 L4.5 8.5 L10 2" fill="none" stroke="#333" stroke-width="1.1"/></svg></div>
<div class="t" style="left:50px;top:357px;font-family:'Liberation Mono', monospace;font-size:10.6px;transform:scaleX(0.9438);transform-origin:0 0;">180500dc</div>
<div class="cb" style="left:121px;top:357px"><svg width="11" height="11" style="position:absolute;left:0;top:0"><path d="M1.5 5.5 L4.5 8.5 L10 2" fill="none" stroke="#333" stroke-width="1.1"/></svg></div>
<div class="t" style="left:140px;top:357px;font-family:'Liberation Mono', monospace;font-size:10.6px;transform:scaleX(0.9435);transform-origin:0 0;">8</div>
<div class="cb" style="left:161px;top:357px"><svg width="11" height="11" style="position:absolute;left:0;top:0"><path d="M1.5 5.5 L4.5 8.5 L10 2" fill="none" stroke="#333" stroke-width="1.1"/></svg></div>
<div class="t" style="left:180px;top:357px;font-family:'Liberation Mono', monospace;font-size:10.6px;transform:scaleX(0.9435);transform-origin:0 0;">00</div>
<div class="cb" style="left:206px;top:357px"><svg width="11" height="11" style="position:absolute;left:0;top:0"><path d="M1.5 5.5 L4.5 8.5 L10 2" fill="none" stroke="#333" stroke-width="1.1"/></svg></div>
<div class="t" style="left:225px;top:357px;font-family:'Liberation Mono', monospace;font-size:10.6px;transform:scaleX(0.9435);transform-origin:0 0;">00</div>
<div class="cb" style="left:251px;top:357px"><svg width="11" height="11" style="position:absolute;left:0;top:0"><path d="M1.5 5.5 L4.5 8.5 L10 2" fill="none" stroke="#333" stroke-width="1.1"/></svg></div>
<div class="t" style="left:270px;top:357px;font-family:'Liberation Mono', monospace;font-size:10.6px;transform:scaleX(0.9435);transform-origin:0 0;">00</div>
<div class="cb" style="left:296px;top:357px"><svg width="11" height="11" style="position:absolute;left:0;top:0"><path d="M1.5 5.5 L4.5 8.5 L10 2" fill="none" stroke="#333" stroke-width="1.1"/></svg></div>
<div class="t" style="left:315px;top:357px;font-family:'Liberation Mono', monospace;font-size:10.6px;transform:scaleX(0.9435);transform-origin:0 0;">00</div>
<div class="cb" style="left:341px;top:357px"><svg width="11" height="11" style="position:absolute;left:0;top:0"><path d="M1.5 5.5 L4.5 8.5 L10 2" fill="none" stroke="#333" stroke-width="1.1"/></svg></div>
<div class="t" style="left:360px;top:357px;font-family:'Liberation Mono', monospace;font-size:10.6px;transform:scaleX(0.9435);transform-origin:0 0;">00</div>
<div class="cb" style="left:386px;top:357px"><svg width="11" height="11" style="position:absolute;left:0;top:0"><path d="M1.5 5.5 L4.5 8.5 L10 2" fill="none" stroke="#333" stroke-width="1.1"/></svg></div>
<div class="t" style="left:405px;top:357px;font-family:'Liberation Mono', monospace;font-size:10.6px;transform:scaleX(0.9435);transform-origin:0 0;">00</div>
<div class="cb" style="left:431px;top:357px"><svg width="11" height="11" style="position:absolute;left:0;top:0"><path d="M1.5 5.5 L4.5 8.5 L10 2" fill="none" stroke="#333" stroke-width="1.1"/></svg></div>
<div class="t" style="left:450px;top:357px;font-family:'Liberation Mono', monospace;font-size:10.6px;transform:scaleX(0.9435);transform-origin:0 0;">00</div>
<div class="cb" style="left:476px;top:357px"><svg width="11" height="11" style="position:absolute;left:0;top:0"><path d="M1.5 5.5 L4.5 8.5 L10 2" fill="none" stroke="#333" stroke-width="1.1"/></svg></div>
<div class="t" style="left:495px;top:357px;font-family:'Liberation Mono', monospace;font-size:10.6px;transform:scaleX(0.9435);transform-origin:0 0;">00</div>
<div class="t" style="left:522px;top:357px;font-family:'Liberation Mono', monospace;font-size:10.6px;transform:scaleX(0.9435);transform-origin:0 0;">2</div>
<div style="position:absolute;left:27px;top:394px;width:540px;height:1px;background:#e0e0e0">
</div>
<div class="t" style="left:5px;top:378px;font-family:'Liberation Mono', monospace;font-size:10.6px;transform:scaleX(0.9435);transform-origin:0 0;">8</div>
<div class="cb" style="left:31px;top:378px"><svg width="11" height="11" style="position:absolute;left:0;top:0"><path d="M1.5 5.5 L4.5 8.5 L10 2" fill="none" stroke="#333" stroke-width="1.1"/></svg></div>
<div class="t" style="left:50px;top:378px;font-family:'Liberation Mono', monospace;font-size:10.6px;transform:scaleX(0.9438);transform-origin:0 0;">18050116</div>
<div class="cb" style="left:121px;top:378px"><svg width="11" height="11" style="position:absolute;left:0;top:0"><path d="M1.5 5.5 L4.5 8.5 L10 2" fill="none" stroke="#333" stroke-width="1.1"/></svg></div>
<div class="t" style="left:140px;top:378px;font-family:'Liberation Mono', monospace;font-size:10.6px;transform:scaleX(0.9435);transform-origin:0 0;">8</div>
<div class="cb" style="left:161px;top:378px"><svg width="11" height="11" style="position:absolute;left:0;top:0"><path d="M1.5 5.5 L4.5 8.5 L10 2" fill="none" stroke="#333" stroke-width="1.1"/></svg></div>
<div class="t" style="left:180px;top:378px;font-family:'Liberation Mono', monospace;font-size:10.6px;transform:scaleX(0.9435);transform-origin:0 0;">ff</div>
<div class="cb" style="left:206px;top:378px"><svg width="11" height="11" style="position:absolute;left:0;top:0"><path d="M1.5 5.5 L4.5 8.5 L10 2" fill="none" stroke="#333" stroke-width="1.1"/></svg></div>
<div class="t" style="left:225px;top:378px;font-family:'Liberation Mono', monospace;font-size:10.6px;transform:scaleX(0.9435);transform-origin:0 0;">ff</div>
<div class="cb" style="left:251px;top:378px"><svg width="11" height="11" style="position:absolute;left:0;top:0"><path d="M1.5 5.5 L4.5 8.5 L10 2" fill="none" stroke="#333" stroke-width="1.1"/></svg></div>
<div class="t" style="left:270px;top:378px;font-family:'Liberation Mono', monospace;font-size:10.6px;transform:scaleX(0.9435);transform-origin:0 0;">ff</div>
<div class="cb" style="left:296px;top:378px"><svg width="11" height="11" style="position:absolute;left:0;top:0"><path d="M1.5 5.5 L4.5 8.5 L10 2" fill="none" stroke="#333" stroke-width="1.1"/></svg></div>
<div class="t" style="left:315px;top:378px;font-family:'Liberation Mono', monospace;font-size:10.6px;transform:scaleX(0.9435);transform-origin:0 0;">ff</div>
<div class="cb" style="left:341px;top:378px"><svg width="11" height="11" style="position:absolute;left:0;top:0"><path d="M1.5 5.5 L4.5 8.5 L10 2" fill="none" stroke="#333" stroke-width="1.1"/></svg></div>
<div class="t" style="left:360px;top:378px;font-family:'Liberation Mono', monospace;font-size:10.6px;transform:scaleX(0.9435);transform-origin:0 0;">ff</div>
<div class="cb" style="left:386px;top:378px"><svg width="11" height="11" style="position:absolute;left:0;top:0"><path d="M1.5 5.5 L4.5 8.5 L10 2" fill="none" stroke="#333" stroke-width="1.1"/></svg></div>
<div class="t" style="left:405px;top:378px;font-family:'Liberation Mono', monospace;font-size:10.6px;transform:scaleX(0.9435);transform-origin:0 0;">ff</div>
<div class="cb" style="left:431px;top:378px"><svg width="11" height="11" style="position:absolute;left:0;top:0"><path d="M1.5 5.5 L4.5 8.5 L10 2" fill="none" stroke="#333" stroke-width="1.1"/></svg></div>
<div class="t" style="left:450px;top:378px;font-family:'Liberation Mono', monospace;font-size:10.6px;transform:scaleX(0.9435);transform-origin:0 0;">ff</div>
<div class="cb" style="left:476px;top:378px"><svg width="11" height="11" style="position:absolute;left:0;top:0"><path d="M1.5 5.5 L4.5 8.5 L10 2" fill="none" stroke="#333" stroke-width="1.1"/></svg></div>
<div class="t" style="left:495px;top:378px;font-family:'Liberation Mono', monospace;font-size:10.6px;transform:scaleX(0.9435);transform-origin:0 0;">ff</div>
<div class="t" style="left:522px;top:378px;font-family:'Liberation Mono', monospace;font-size:10.6px;transform:scaleX(0.9435);transform-origin:0 0;">2</div>
<div style="position:absolute;left:27px;top:415px;width:540px;height:1px;background:#e0e0e0">
</div>
<div class="t" style="left:5px;top:399px;font-family:'Liberation Mono', monospace;font-size:10.6px;transform:scaleX(0.9435);transform-origin:0 0;">9</div>
<div class="cb" style="left:31px;top:399px"><svg width="11" height="11" style="position:absolute;left:0;top:0"><path d="M1.5 5.5 L4.5 8.5 L10 2" fill="none" stroke="#333" stroke-width="1.1"/></svg></div>
<div class="t" style="left:50px;top:399px;font-family:'Liberation Mono', monospace;font-size:10.6px;transform:scaleX(0.9438);transform-origin:0 0;">18050142</div>
<div class="cb" style="left:121px;top:399px"><svg width="11" height="11" style="position:absolute;left:0;top:0"><path d="M1.5 5.5 L4.5 8.5 L10 2" fill="none" stroke="#333" stroke-width="1.1"/></svg></div>
<div class="t" style="left:140px;top:399px;font-family:'Liberation Mono', monospace;font-size:10.6px;transform:scaleX(0.9435);transform-origin:0 0;">8</div>
<div class="cb" style="left:161px;top:399px"><svg width="11" height="11" style="position:absolute;left:0;top:0"><path d="M1.5 5.5 L4.5 8.5 L10 2" fill="none" stroke="#333" stroke-width="1.1"/></svg></div>
<div class="t" style="left:180px;top:399px;font-family:'Liberation Mono', monospace;font-size:10.6px;transform:scaleX(0.9435);transform-origin:0 0;">8a</div>
<div class="cb" style="left:206px;top:399px"><svg width="11" height="11" style="position:absolute;left:0;top:0"><path d="M1.5 5.5 L4.5 8.5 L10 2" fill="none" stroke="#333" stroke-width="1.1"/></svg></div>
<div class="t" style="left:225px;top:399px;font-family:'Liberation Mono', monospace;font-size:10.6px;transform:scaleX(0.9435);transform-origin:0 0;">02</div>
<div class="cb" style="left:251px;top:399px"><svg width="11" height="11" style="position:absolute;left:0;top:0"><path d="M1.5 5.5 L4.5 8.5 L10 2" fill="none" stroke="#333" stroke-width="1.1"/></svg></div>
<div class="t" style="left:270px;top:399px;font-family:'Liberation Mono', monospace;font-size:10.6px;transform:scaleX(0.9435);transform-origin:0 0;">4e</div>
<div class="cb" style="left:296px;top:399px"><svg width="11" height="11" style="position:absolute;left:0;top:0"><path d="M1.5 5.5 L4.5 8.5 L10 2" fill="none" stroke="#333" stroke-width="1.1"/></svg></div>
<div class="t" style="left:315px;top:399px;font-family:'Liberation Mono', monospace;font-size:10.6px;transform:scaleX(0.9435);transform-origin:0 0;">02</div>
<div class="cb" style="left:341px;top:399px"><svg width="11" height="11" style="position:absolute;left:0;top:0"><path d="M1.5 5.5 L4.5 8.5 L10 2" fill="none" stroke="#333" stroke-width="1.1"/></svg></div>
<div class="t" style="left:360px;top:399px;font-family:'Liberation Mono', monospace;font-size:10.6px;transform:scaleX(0.9435);transform-origin:0 0;">f4</div>
<div class="cb" style="left:386px;top:399px"><svg width="11" height="11" style="position:absolute;left:0;top:0"><path d="M1.5 5.5 L4.5 8.5 L10 2" fill="none" stroke="#333" stroke-width="1.1"/></svg></div>
<div class="t" style="left:405px;top:399px;font-family:'Liberation Mono', monospace;font-size:10.6px;transform:scaleX(0.9435);transform-origin:0 0;">01</div>
<div class="cb" style="left:431px;top:399px"><svg width="11" height="11" style="position:absolute;left:0;top:0"><path d="M1.5 5.5 L4.5 8.5 L10 2" fill="none" stroke="#333" stroke-width="1.1"/></svg></div>
<div class="t" style="left:450px;top:399px;font-family:'Liberation Mono', monospace;font-size:10.6px;transform:scaleX(0.9435);transform-origin:0 0;">f4</div>
<div class="cb" style="left:476px;top:399px"><svg width="11" height="11" style="position:absolute;left:0;top:0"><path d="M1.5 5.5 L4.5 8.5 L10 2" fill="none" stroke="#333" stroke-width="1.1"/></svg></div>
<div class="t" style="left:495px;top:399px;font-family:'Liberation Mono', monospace;font-size:10.6px;transform:scaleX(0.9435);transform-origin:0 0;">01</div>
<div class="t" style="left:522px;top:399px;font-family:'Liberation Mono', monospace;font-size:10.6px;transform:scaleX(0.9435);transform-origin:0 0;">620</div>
<div style="position:absolute;left:27px;top:436px;width:540px;height:1px;background:#e0e0e0">
</div>
<div class="t" style="left:5px;top:420px;font-family:'Liberation Mono', monospace;font-size:10.6px;transform:scaleX(0.9435);transform-origin:0 0;">10</div>
<div style="position:absolute;left:248px;top:416px;width:44px;height:20px;background:#33f033">
</div>
<div class="cb" style="left:31px;top:420px"><svg width="11" height="11" style="position:absolute;left:0;top:0"><path d="M1.5 5.5 L4.5 8.5 L10 2" fill="none" stroke="#333" stroke-width="1.1"/></svg></div>
<div class="t" style="left:50px;top:420px;font-family:'Liberation Mono', monospace;font-size:10.6px;transform:scaleX(0.9438);transform-origin:0 0;">18050032</div>
<div class="cb" style="left:121px;top:420px"><svg width="11" height="11" style="position:absolute;left:0;top:0"><path d="M1.5 5.5 L4.5 8.5 L10 2" fill="none" stroke="#333" stroke-width="1.1"/></svg></div>
<div class="t" style="left:140px;top:420px;font-family:'Liberation Mono', monospace;font-size:10.6px;transform:scaleX(0.9435);transform-origin:0 0;">8</div>
<div class="cb" style="left:161px;top:420px"><svg width="11" height="11" style="position:absolute;left:0;top:0"><path d="M1.5 5.5 L4.5 8.5 L10 2" fill="none" stroke="#333" stroke-width="1.1"/></svg></div>
<div class="t" style="left:180px;top:420px;font-family:'Liberation Mono', monospace;font-size:10.6px;transform:scaleX(0.9435);transform-origin:0 0;">00</div>
<div class="cb" style="left:206px;top:420px"><svg width="11" height="11" style="position:absolute;left:0;top:0"><path d="M1.5 5.5 L4.5 8.5 L10 2" fill="none" stroke="#333" stroke-width="1.1"/></svg></div>
<div class="t" style="left:225px;top:420px;font-family:'Liberation Mono', monospace;font-size:10.6px;transform:scaleX(0.9435);transform-origin:0 0;">00</div>
<div class="cb" style="left:251px;top:420px"><svg width="11" height="11" style="position:absolute;left:0;top:0"><path d="M1.5 5.5 L4.5 8.5 L10 2" fill="none" stroke="#333" stroke-width="1.1"/></svg></div>
<div class="t" style="left:270px;top:420px;font-family:'Liberation Mono', monospace;font-size:10.6px;transform:scaleX(0.9435);transform-origin:0 0;">01</div>
<div class="cb" style="left:296px;top:420px"><svg width="11" height="11" style="position:absolute;left:0;top:0"><path d="M1.5 5.5 L4.5 8.5 L10 2" fill="none" stroke="#333" stroke-width="1.1"/></svg></div>
<div class="t" style="left:315px;top:420px;font-family:'Liberation Mono', monospace;font-size:10.6px;transform:scaleX(0.9435);transform-origin:0 0;">00</div>
<div class="cb" style="left:341px;top:420px"><svg width="11" height="11" style="position:absolute;left:0;top:0"><path d="M1.5 5.5 L4.5 8.5 L10 2" fill="none" stroke="#333" stroke-width="1.1"/></svg></div>
<div class="t" style="left:360px;top:420px;font-family:'Liberation Mono', monospace;font-size:10.6px;transform:scaleX(0.9435);transform-origin:0 0;">00</div>
<div class="cb" style="left:386px;top:420px"><svg width="11" height="11" style="position:absolute;left:0;top:0"><path d="M1.5 5.5 L4.5 8.5 L10 2" fill="none" stroke="#333" stroke-width="1.1"/></svg></div>
<div class="t" style="left:405px;top:420px;font-family:'Liberation Mono', monospace;font-size:10.6px;transform:scaleX(0.9435);transform-origin:0 0;">00</div>
<div class="cb" style="left:431px;top:420px"><svg width="11" height="11" style="position:absolute;left:0;top:0"><path d="M1.5 5.5 L4.5 8.5 L10 2" fill="none" stroke="#333" stroke-width="1.1"/></svg></div>
<div class="t" style="left:450px;top:420px;font-family:'Liberation Mono', monospace;font-size:10.6px;transform:scaleX(0.9435);transform-origin:0 0;">00</div>
<div class="cb" style="left:476px;top:420px"><svg width="11" height="11" style="position:absolute;left:0;top:0"><path d="M1.5 5.5 L4.5 8.5 L10 2" fill="none" stroke="#333" stroke-width="1.1"/></svg></div>
<div class="t" style="left:495px;top:420px;font-family:'Liberation Mono', monospace;font-size:10.6px;transform:scaleX(0.9435);transform-origin:0 0;">00</div>
<div class="t" style="left:522px;top:420px;font-family:'Liberation Mono', monospace;font-size:10.6px;transform:scaleX(0.9435);transform-origin:0 0;">20</div>
<div style="position:absolute;left:27px;top:457px;width:540px;height:1px;background:#e0e0e0">
</div>
<div class="t" style="left:5px;top:441px;font-family:'Liberation Mono', monospace;font-size:10.6px;transform:scaleX(0.9435);transform-origin:0 0;">11</div>
<div class="cb" style="left:31px;top:441px"><svg width="11" height="11" style="position:absolute;left:0;top:0"><path d="M1.5 5.5 L4.5 8.5 L10 2" fill="none" stroke="#333" stroke-width="1.1"/></svg></div>
<div class="t" style="left:50px;top:441px;font-family:'Liberation Mono', monospace;font-size:10.6px;transform:scaleX(0.9438);transform-origin:0 0;">1805016a</div>
<div class="cb" style="left:121px;top:441px"><svg width="11" height="11" style="position:absolute;left:0;top:0"><path d="M1.5 5.5 L4.5 8.5 L10 2" fill="none" stroke="#333" stroke-width="1.1"/></svg></div>
<div class="t" style="left:140px;top:441px;font-family:'Liberation Mono', monospace;font-size:10.6px;transform:scaleX(0.9435);transform-origin:0 0;">8</div>
<div class="cb" style="left:161px;top:441px"><svg width="11" height="11" style="position:absolute;left:0;top:0"><path d="M1.5 5.5 L4.5 8.5 L10 2" fill="none" stroke="#333" stroke-width="1.1"/></svg></div>
<div class="t" style="left:180px;top:441px;font-family:'Liberation Mono', monospace;font-size:10.6px;transform:scaleX(0.9435);transform-origin:0 0;">ee</div>
<div class="cb" style="left:206px;top:441px"><svg width="11" height="11" style="position:absolute;left:0;top:0"><path d="M1.5 5.5 L4.5 8.5 L10 2" fill="none" stroke="#333" stroke-width="1.1"/></svg></div>
<div class="t" style="left:225px;top:441px;font-family:'Liberation Mono', monospace;font-size:10.6px;transform:scaleX(0.9435);transform-origin:0 0;">03</div>
<div class="cb" style="left:251px;top:441px"><svg width="11" height="11" style="position:absolute;left:0;top:0"><path d="M1.5 5.5 L4.5 8.5 L10 2" fill="none" stroke="#333" stroke-width="1.1"/></svg></div>
<div class="t" style="left:270px;top:441px;font-family:'Liberation Mono', monospace;font-size:10.6px;transform:scaleX(0.9435);transform-origin:0 0;">00</div>
<div class="cb" style="left:296px;top:441px"><svg width="11" height="11" style="position:absolute;left:0;top:0"><path d="M1.5 5.5 L4.5 8.5 L10 2" fill="none" stroke="#333" stroke-width="1.1"/></svg></div>
<div class="t" style="left:315px;top:441px;font-family:'Liberation Mono', monospace;font-size:10.6px;transform:scaleX(0.9435);transform-origin:0 0;">00</div>
<div class="cb" style="left:341px;top:441px"><svg width="11" height="11" style="position:absolute;left:0;top:0"><path d="M1.5 5.5 L4.5 8.5 L10 2" fill="none" stroke="#333" stroke-width="1.1"/></svg></div>
<div class="t" style="left:360px;top:441px;font-family:'Liberation Mono', monospace;font-size:10.6px;transform:scaleX(0.9435);transform-origin:0 0;">01</div>
<div class="cb" style="left:386px;top:441px"><svg width="11" height="11" style="position:absolute;left:0;top:0"><path d="M1.5 5.5 L4.5 8.5 L10 2" fill="none" stroke="#333" stroke-width="1.1"/></svg></div>
<div class="t" style="left:405px;top:441px;font-family:'Liberation Mono', monospace;font-size:10.6px;transform:scaleX(0.9435);transform-origin:0 0;">00</div>
<div class="cb" style="left:431px;top:441px"><svg width="11" height="11" style="position:absolute;left:0;top:0"><path d="M1.5 5.5 L4.5 8.5 L10 2" fill="none" stroke="#333" stroke-width="1.1"/></svg></div>
<div class="t" style="left:450px;top:441px;font-family:'Liberation Mono', monospace;font-size:10.6px;transform:scaleX(0.9435);transform-origin:0 0;">00</div>
<div class="cb" style="left:476px;top:441px"><svg width="11" height="11" style="position:absolute;left:0;top:0"><path d="M1.5 5.5 L4.5 8.5 L10 2" fill="none" stroke="#333" stroke-width="1.1"/></svg></div>
<div class="t" style="left:495px;top:441px;font-family:'Liberation Mono', monospace;font-size:10.6px;transform:scaleX(0.9435);transform-origin:0 0;">00</div>
<div class="t" style="left:522px;top:441px;font-family:'Liberation Mono', monospace;font-size:10.6px;transform:scaleX(0.9435);transform-origin:0 0;">289</div>
<div style="position:absolute;left:27px;top:478px;width:540px;height:1px;background:#e0e0e0">
</div>
<div class="t" style="left:5px;top:462px;font-family:'Liberation Mono', monospace;font-size:10.6px;transform:scaleX(0.9435);transform-origin:0 0;">12</div>
<div style="position:absolute;left:158px;top:458px;width:44px;height:20px;background:#33f033">
</div>
<div style="position:absolute;left:248px;top:458px;width:44px;height:20px;background:#33f033">
</div>
<div class="cb" style="left:31px;top:462px"><svg width="11" height="11" style="position:absolute;left:0;top:0"><path d="M1.5 5.5 L4.5 8.5 L10 2" fill="none" stroke="#333" stroke-width="1.1"/></svg></div>
<div class="t" style="left:50px;top:462px;font-family:'Liberation Mono', monospace;font-size:10.6px;transform:scaleX(0.9438);transform-origin:0 0;">18000007</div>
<div class="cb" style="left:121px;top:462px"><svg width="11" height="11" style="position:absolute;left:0;top:0"><path d="M1.5 5.5 L4.5 8.5 L10 2" fill="none" stroke="#333" stroke-width="1.1"/></svg></div>
<div class="t" style="left:140px;top:462px;font-family:'Liberation Mono', monospace;font-size:10.6px;transform:scaleX(0.9435);transform-origin:0 0;">8</div>
<div class="cb" style="left:161px;top:462px"><svg width="11" height="11" style="position:absolute;left:0;top:0"><path d="M1.5 5.5 L4.5 8.5 L10 2" fill="none" stroke="#333" stroke-width="1.1"/></svg></div>
<div class="t" style="left:180px;top:462px;font-family:'Liberation Mono', monospace;font-size:10.6px;transform:scaleX(0.9435);transform-origin:0 0;">ba</div>
<div class="cb" style="left:206px;top:462px"><svg width="11" height="11" style="position:absolute;left:0;top:0"><path d="M1.5 5.5 L4.5 8.5 L10 2" fill="none" stroke="#333" stroke-width="1.1"/></svg></div>
<div class="t" style="left:225px;top:462px;font-family:'Liberation Mono', monospace;font-size:10.6px;transform:scaleX(0.9435);transform-origin:0 0;">09</div>
<div class="cb" style="left:251px;top:462px"><svg width="11" height="11" style="position:absolute;left:0;top:0"><path d="M1.5 5.5 L4.5 8.5 L10 2" fill="none" stroke="#333" stroke-width="1.1"/></svg></div>
<div class="t" style="left:270px;top:462px;font-family:'Liberation Mono', monospace;font-size:10.6px;transform:scaleX(0.9435);transform-origin:0 0;">d8</div>
<div class="cb" style="left:296px;top:462px"><svg width="11" height="11" style="position:absolute;left:0;top:0"><path d="M1.5 5.5 L4.5 8.5 L10 2" fill="none" stroke="#333" stroke-width="1.1"/></svg></div>
<div class="t" style="left:315px;top:462px;font-family:'Liberation Mono', monospace;font-size:10.6px;transform:scaleX(0.9435);transform-origin:0 0;">09</div>
<div class="cb" style="left:341px;top:462px"><svg width="11" height="11" style="position:absolute;left:0;top:0"><path d="M1.5 5.5 L4.5 8.5 L10 2" fill="none" stroke="#333" stroke-width="1.1"/></svg></div>
<div class="t" style="left:360px;top:462px;font-family:'Liberation Mono', monospace;font-size:10.6px;transform:scaleX(0.9435);transform-origin:0 0;">00</div>
<div class="cb" style="left:386px;top:462px"><svg width="11" height="11" style="position:absolute;left:0;top:0"><path d="M1.5 5.5 L4.5 8.5 L10 2" fill="none" stroke="#333" stroke-width="1.1"/></svg></div>
<div class="t" style="left:405px;top:462px;font-family:'Liberation Mono', monospace;font-size:10.6px;transform:scaleX(0.9435);transform-origin:0 0;">00</div>
<div class="cb" style="left:431px;top:462px"><svg width="11" height="11" style="position:absolute;left:0;top:0"><path d="M1.5 5.5 L4.5 8.5 L10 2" fill="none" stroke="#333" stroke-width="1.1"/></svg></div>
<div class="t" style="left:450px;top:462px;font-family:'Liberation Mono', monospace;font-size:10.6px;transform:scaleX(0.9435);transform-origin:0 0;">00</div>
<div class="cb" style="left:476px;top:462px"><svg width="11" height="11" style="position:absolute;left:0;top:0"><path d="M1.5 5.5 L4.5 8.5 L10 2" fill="none" stroke="#333" stroke-width="1.1"/></svg></div>
<div class="t" style="left:495px;top:462px;font-family:'Liberation Mono', monospace;font-size:10.6px;transform:scaleX(0.9435);transform-origin:0 0;">00</div>
<div class="t" style="left:522px;top:462px;font-family:'Liberation Mono', monospace;font-size:10.6px;transform:scaleX(0.9435);transform-origin:0 0;">315</div>
<div style="position:absolute;left:27px;top:499px;width:540px;height:1px;background:#e0e0e0">
</div>
<div class="t" style="left:5px;top:483px;font-family:'Liberation Mono', monospace;font-size:10.6px;transform:scaleX(0.9435);transform-origin:0 0;">13</div>
<div class="cb" style="left:31px;top:483px"><svg width="11" height="11" style="position:absolute;left:0;top:0"><path d="M1.5 5.5 L4.5 8.5 L10 2" fill="none" stroke="#333" stroke-width="1.1"/></svg></div>
<div class="t" style="left:50px;top:483px;font-family:'Liberation Mono', monospace;font-size:10.6px;transform:scaleX(0.9438);transform-origin:0 0;">18050062</div>
<div class="cb" style="left:121px;top:483px"><svg width="11" height="11" style="position:absolute;left:0;top:0"><path d="M1.5 5.5 L4.5 8.5 L10 2" fill="none" stroke="#333" stroke-width="1.1"/></svg></div>
<div class="t" style="left:140px;top:483px;font-family:'Liberation Mono', monospace;font-size:10.6px;transform:scaleX(0.9435);transform-origin:0 0;">8</div>
<div class="cb" style="left:161px;top:483px"><svg width="11" height="11" style="position:absolute;left:0;top:0"><path d="M1.5 5.5 L4.5 8.5 L10 2" fill="none" stroke="#333" stroke-width="1.1"/></svg></div>
<div class="t" style="left:180px;top:483px;font-family:'Liberation Mono', monospace;font-size:10.6px;transform:scaleX(0.9435);transform-origin:0 0;">00</div>
<div class="cb" style="left:206px;top:483px"><svg width="11" height="11" style="position:absolute;left:0;top:0"><path d="M1.5 5.5 L4.5 8.5 L10 2" fill="none" stroke="#333" stroke-width="1.1"/></svg></div>
<div class="t" style="left:225px;top:483px;font-family:'Liberation Mono', monospace;font-size:10.6px;transform:scaleX(0.9435);transform-origin:0 0;">00</div>
<div class="cb" style="left:251px;top:483px"><svg width="11" height="11" style="position:absolute;left:0;top:0"><path d="M1.5 5.5 L4.5 8.5 L10 2" fill="none" stroke="#333" stroke-width="1.1"/></svg></div>
<div class="t" style="left:270px;top:483px;font-family:'Liberation Mono', monospace;font-size:10.6px;transform:scaleX(0.9435);transform-origin:0 0;">00</div>
<div class="cb" style="left:296px;top:483px"><svg width="11" height="11" style="position:absolute;left:0;top:0"><path d="M1.5 5.5 L4.5 8.5 L10 2" fill="none" stroke="#333" stroke-width="1.1"/></svg></div>
<div class="t" style="left:315px;top:483px;font-family:'Liberation Mono', monospace;font-size:10.6px;transform:scaleX(0.9435);transform-origin:0 0;">00</div>
<div class="cb" style="left:341px;top:483px"><svg width="11" height="11" style="position:absolute;left:0;top:0"><path d="M1.5 5.5 L4.5 8.5 L10 2" fill="none" stroke="#333" stroke-width="1.1"/></svg></div>
<div class="t" style="left:360px;top:483px;font-family:'Liberation Mono', monospace;font-size:10.6px;transform:scaleX(0.9435);transform-origin:0 0;">10</div>
<div class="cb" style="left:386px;top:483px"><svg width="11" height="11" style="position:absolute;left:0;top:0"><path d="M1.5 5.5 L4.5 8.5 L10 2" fill="none" stroke="#333" stroke-width="1.1"/></svg></div>
<div class="t" style="left:405px;top:483px;font-family:'Liberation Mono', monospace;font-size:10.6px;transform:scaleX(0.9435);transform-origin:0 0;">27</div>
<div class="cb" style="left:431px;top:483px"><svg width="11" height="11" style="position:absolute;left:0;top:0"><path d="M1.5 5.5 L4.5 8.5 L10 2" fill="none" stroke="#333" stroke-width="1.1"/></svg></div>
<div class="t" style="left:450px;top:483px;font-family:'Liberation Mono', monospace;font-size:10.6px;transform:scaleX(0.9435);transform-origin:0 0;">10</div>
<div class="cb" style="left:476px;top:483px"><svg width="11" height="11" style="position:absolute;left:0;top:0"><path d="M1.5 5.5 L4.5 8.5 L10 2" fill="none" stroke="#333" stroke-width="1.1"/></svg></div>
<div class="t" style="left:495px;top:483px;font-family:'Liberation Mono', monospace;font-size:10.6px;transform:scaleX(0.9435);transform-origin:0 0;">27</div>
<div class="t" style="left:522px;top:483px;font-family:'Liberation Mono', monospace;font-size:10.6px;transform:scaleX(0.9435);transform-origin:0 0;">50</div>
<div style="position:absolute;left:27px;top:520px;width:540px;height:1px;background:#e0e0e0">
</div>
<div class="t" style="left:5px;top:504px;font-family:'Liberation Mono', monospace;font-size:10.6px;transform:scaleX(0.9435);transform-origin:0 0;">14</div>
<div class="cb" style="left:31px;top:504px"><svg width="11" height="11" style="position:absolute;left:0;top:0"><path d="M1.5 5.5 L4.5 8.5 L10 2" fill="none" stroke="#333" stroke-width="1.1"/></svg></div>
<div class="t" style="left:50px;top:504px;font-family:'Liberation Mono', monospace;font-size:10.6px;transform:scaleX(0.9438);transform-origin:0 0;">18050092</div>
<div class="cb" style="left:121px;top:504px"><svg width="11" height="11" style="position:absolute;left:0;top:0"><path d="M1.5 5.5 L4.5 8.5 L10 2" fill="none" stroke="#333" stroke-width="1.1"/></svg></div>
<div class="t" style="left:140px;top:504px;font-family:'Liberation Mono', monospace;font-size:10.6px;transform:scaleX(0.9435);transform-origin:0 0;">8</div>
<div class="cb" style="left:161px;top:504px"><svg width="11" height="11" style="position:absolute;left:0;top:0"><path d="M1.5 5.5 L4.5 8.5 L10 2" fill="none" stroke="#333" stroke-width="1.1"/></svg></div>
<div class="t" style="left:180px;top:504px;font-family:'Liberation Mono', monospace;font-size:10.6px;transform:scaleX(0.9435);transform-origin:0 0;">00</div>
<div class="cb" style="left:206px;top:504px"><svg width="11" height="11" style="position:absolute;left:0;top:0"><path d="M1.5 5.5 L4.5 8.5 L10 2" fill="none" stroke="#333" stroke-width="1.1"/></svg></div>
<div class="t" style="left:225px;top:504px;font-family:'Liberation Mono', monospace;font-size:10.6px;transform:scaleX(0.9435);transform-origin:0 0;">00</div>
<div class="cb" style="left:251px;top:504px"><svg width="11" height="11" style="position:absolute;left:0;top:0"><path d="M1.5 5.5 L4.5 8.5 L10 2" fill="none" stroke="#333" stroke-width="1.1"/></svg></div>
<div class="t" style="left:270px;top:504px;font-family:'Liberation Mono', monospace;font-size:10.6px;transform:scaleX(0.9435);transform-origin:0 0;">00</div>
<div class="cb" style="left:296px;top:504px"><svg width="11" height="11" style="position:absolute;left:0;top:0"><path d="M1.5 5.5 L4.5 8.5 L10 2" fill="none" stroke="#333" stroke-width="1.1"/></svg></div>
<div class="t" style="left:315px;top:504px;font-family:'Liberation Mono', monospace;font-size:10.6px;transform:scaleX(0.9435);transform-origin:0 0;">00</div>
<div class="cb" style="left:341px;top:504px"><svg width="11" height="11" style="position:absolute;left:0;top:0"><path d="M1.5 5.5 L4.5 8.5 L10 2" fill="none" stroke="#333" stroke-width="1.1"/></svg></div>
<div class="t" style="left:360px;top:504px;font-family:'Liberation Mono', monospace;font-size:10.6px;transform:scaleX(0.9435);transform-origin:0 0;">00</div>
<div class="cb" style="left:386px;top:504px"><svg width="11" height="11" style="position:absolute;left:0;top:0"><path d="M1.5 5.5 L4.5 8.5 L10 2" fill="none" stroke="#333" stroke-width="1.1"/></svg></div>
<div class="t" style="left:405px;top:504px;font-family:'Liberation Mono', monospace;font-size:10.6px;transform:scaleX(0.9435);transform-origin:0 0;">00</div>
<div class="cb" style="left:431px;top:504px"><svg width="11" height="11" style="position:absolute;left:0;top:0"><path d="M1.5 5.5 L4.5 8.5 L10 2" fill="none" stroke="#333" stroke-width="1.1"/></svg></div>
<div class="t" style="left:450px;top:504px;font-family:'Liberation Mono', monospace;font-size:10.6px;transform:scaleX(0.9435);transform-origin:0 0;">00</div>
<div class="cb" style="left:476px;top:504px"><svg width="11" height="11" style="position:absolute;left:0;top:0"><path d="M1.5 5.5 L4.5 8.5 L10 2" fill="none" stroke="#333" stroke-width="1.1"/></svg></div>
<div class="t" style="left:495px;top:504px;font-family:'Liberation Mono', monospace;font-size:10.6px;transform:scaleX(0.9435);transform-origin:0 0;">00</div>
<div class="t" style="left:522px;top:504px;font-family:'Liberation Mono', monospace;font-size:10.6px;transform:scaleX(0.9435);transform-origin:0 0;">542</div>
<div style="position:absolute;left:27px;top:541px;width:540px;height:1px;background:#e0e0e0">
</div>
<div class="t" style="left:5px;top:525px;font-family:'Liberation Mono', monospace;font-size:10.6px;transform:scaleX(0.9435);transform-origin:0 0;">15</div>
<div class="cb" style="left:31px;top:525px"><svg width="11" height="11" style="position:absolute;left:0;top:0"><path d="M1.5 5.5 L4.5 8.5 L10 2" fill="none" stroke="#333" stroke-width="1.1"/></svg></div>
<div class="t" style="left:50px;top:525px;font-family:'Liberation Mono', monospace;font-size:10.6px;transform:scaleX(0.9438);transform-origin:0 0;">180500c4</div>
<div class="cb" style="left:121px;top:525px"><svg width="11" height="11" style="position:absolute;left:0;top:0"><path d="M1.5 5.5 L4.5 8.5 L10 2" fill="none" stroke="#333" stroke-width="1.1"/></svg></div>
<div class="t" style="left:140px;top:525px;font-family:'Liberation Mono', monospace;font-size:10.6px;transform:scaleX(0.9435);transform-origin:0 0;">8</div>
<div class="cb" style="left:161px;top:525px"><svg width="11" height="11" style="position:absolute;left:0;top:0"><path d="M1.5 5.5 L4.5 8.5 L10 2" fill="none" stroke="#333" stroke-width="1.1"/></svg></div>
<div class="t" style="left:180px;top:525px;font-family:'Liberation Mono', monospace;font-size:10.6px;transform:scaleX(0.9435);transform-origin:0 0;">00</div>
<div class="cb" style="left:206px;top:525px"><svg width="11" height="11" style="position:absolute;left:0;top:0"><path d="M1.5 5.5 L4.5 8.5 L10 2" fill="none" stroke="#333" stroke-width="1.1"/></svg></div>
<div class="t" style="left:225px;top:525px;font-family:'Liberation Mono', monospace;font-size:10.6px;transform:scaleX(0.9435);transform-origin:0 0;">00</div>
<div class="cb" style="left:251px;top:525px"><svg width="11" height="11" style="position:absolute;left:0;top:0"><path d="M1.5 5.5 L4.5 8.5 L10 2" fill="none" stroke="#333" stroke-width="1.1"/></svg></div>
<div class="t" style="left:270px;top:525px;font-family:'Liberation Mono', monospace;font-size:10.6px;transform:scaleX(0.9435);transform-origin:0 0;">00</div>
<div class="cb" style="left:296px;top:525px"><svg width="11" height="11" style="position:absolute;left:0;top:0"><path d="M1.5 5.5 L4.5 8.5 L10 2" fill="none" stroke="#333" stroke-width="1.1"/></svg></div>
<div class="t" style="left:315px;top:525px;font-family:'Liberation Mono', monospace;font-size:10.6px;transform:scaleX(0.9435);transform-origin:0 0;">00</div>
<div class="cb" style="left:341px;top:525px"><svg width="11" height="11" style="position:absolute;left:0;top:0"><path d="M1.5 5.5 L4.5 8.5 L10 2" fill="none" stroke="#333" stroke-width="1.1"/></svg></div>
<div class="t" style="left:360px;top:525px;font-family:'Liberation Mono', monospace;font-size:10.6px;transform:scaleX(0.9435);transform-origin:0 0;">00</div>
<div class="cb" style="left:386px;top:525px"><svg width="11" height="11" style="position:absolute;left:0;top:0"><path d="M1.5 5.5 L4.5 8.5 L10 2" fill="none" stroke="#333" stroke-width="1.1"/></svg></div>
<div class="t" style="left:405px;top:525px;font-family:'Liberation Mono', monospace;font-size:10.6px;transform:scaleX(0.9435);transform-origin:0 0;">00</div>
<div class="cb" style="left:431px;top:525px"><svg width="11" height="11" style="position:absolute;left:0;top:0"><path d="M1.5 5.5 L4.5 8.5 L10 2" fill="none" stroke="#333" stroke-width="1.1"/></svg></div>
<div class="t" style="left:450px;top:525px;font-family:'Liberation Mono', monospace;font-size:10.6px;transform:scaleX(0.9435);transform-origin:0 0;">00</div>
<div class="cb" style="left:476px;top:525px"><svg width="11" height="11" style="position:absolute;left:0;top:0"><path d="M1.5 5.5 L4.5 8.5 L10 2" fill="none" stroke="#333" stroke-width="1.1"/></svg></div>
<div class="t" style="left:495px;top:525px;font-family:'Liberation Mono', monospace;font-size:10.6px;transform:scaleX(0.9435);transform-origin:0 0;">00</div>
<div class="t" style="left:522px;top:525px;font-family:'Liberation Mono', monospace;font-size:10.6px;transform:scaleX(0.9435);transform-origin:0 0;">24</div>
<div style="position:absolute;left:27px;top:562px;width:540px;height:1px;background:#e0e0e0">
</div>
<div class="t" style="left:5px;top:546px;font-family:'Liberation Mono', monospace;font-size:10.6px;transform:scaleX(0.9435);transform-origin:0 0;">16</div>
<div class="cb" style="left:31px;top:546px"><svg width="11" height="11" style="position:absolute;left:0;top:0"><path d="M1.5 5.5 L4.5 8.5 L10 2" fill="none" stroke="#333" stroke-width="1.1"/></svg></div>
<div class="t" style="left:50px;top:546px;font-family:'Liberation Mono', monospace;font-size:10.6px;transform:scaleX(0.9438);transform-origin:0 0;">18050102</div>
<div class="cb" style="left:121px;top:546px"><svg width="11" height="11" style="position:absolute;left:0;top:0"><path d="M1.5 5.5 L4.5 8.5 L10 2" fill="none" stroke="#333" stroke-width="1.1"/></svg></div>
<div class="t" style="left:140px;top:546px;font-family:'Liberation Mono', monospace;font-size:10.6px;transform:scaleX(0.9435);transform-origin:0 0;">8</div>
<div class="cb" style="left:161px;top:546px"><svg width="11" height="11" style="position:absolute;left:0;top:0"><path d="M1.5 5.5 L4.5 8.5 L10 2" fill="none" stroke="#333" stroke-width="1.1"/></svg></div>
<div class="t" style="left:180px;top:546px;font-family:'Liberation Mono', monospace;font-size:10.6px;transform:scaleX(0.9435);transform-origin:0 0;">14</div>
<div class="cb" style="left:206px;top:546px"><svg width="11" height="11" style="position:absolute;left:0;top:0"><path d="M1.5 5.5 L4.5 8.5 L10 2" fill="none" stroke="#333" stroke-width="1.1"/></svg></div>
<div class="t" style="left:225px;top:546px;font-family:'Liberation Mono', monospace;font-size:10.6px;transform:scaleX(0.9435);transform-origin:0 0;">14</div>
<div class="cb" style="left:251px;top:546px"><svg width="11" height="11" style="position:absolute;left:0;top:0"><path d="M1.5 5.5 L4.5 8.5 L10 2" fill="none" stroke="#333" stroke-width="1.1"/></svg></div>
<div class="t" style="left:270px;top:546px;font-family:'Liberation Mono', monospace;font-size:10.6px;transform:scaleX(0.9435);transform-origin:0 0;">14</div>
<div class="cb" style="left:296px;top:546px"><svg width="11" height="11" style="position:absolute;left:0;top:0"><path d="M1.5 5.5 L4.5 8.5 L10 2" fill="none" stroke="#333" stroke-width="1.1"/></svg></div>
<div class="t" style="left:315px;top:546px;font-family:'Liberation Mono', monospace;font-size:10.6px;transform:scaleX(0.9435);transform-origin:0 0;">14</div>
<div class="cb" style="left:341px;top:546px"><svg width="11" height="11" style="position:absolute;left:0;top:0"><path d="M1.5 5.5 L4.5 8.5 L10 2" fill="none" stroke="#333" stroke-width="1.1"/></svg></div>
<div class="t" style="left:360px;top:546px;font-family:'Liberation Mono', monospace;font-size:10.6px;transform:scaleX(0.9435);transform-origin:0 0;">0a</div>
<div class="cb" style="left:386px;top:546px"><svg width="11" height="11" style="position:absolute;left:0;top:0"><path d="M1.5 5.5 L4.5 8.5 L10 2" fill="none" stroke="#333" stroke-width="1.1"/></svg></div>
<div class="t" style="left:405px;top:546px;font-family:'Liberation Mono', monospace;font-size:10.6px;transform:scaleX(0.9435);transform-origin:0 0;">0a</div>
<div class="cb" style="left:431px;top:546px"><svg width="11" height="11" style="position:absolute;left:0;top:0"><path d="M1.5 5.5 L4.5 8.5 L10 2" fill="none" stroke="#333" stroke-width="1.1"/></svg></div>
<div class="t" style="left:450px;top:546px;font-family:'Liberation Mono', monospace;font-size:10.6px;transform:scaleX(0.9435);transform-origin:0 0;">14</div>
<div class="cb" style="left:476px;top:546px"><svg width="11" height="11" style="position:absolute;left:0;top:0"><path d="M1.5 5.5 L4.5 8.5 L10 2" fill="none" stroke="#333" stroke-width="1.1"/></svg></div>
<div class="t" style="left:495px;top:546px;font-family:'Liberation Mono', monospace;font-size:10.6px;transform:scaleX(0.9435);transform-origin:0 0;">14</div>
<div class="t" style="left:522px;top:546px;font-family:'Liberation Mono', monospace;font-size:10.6px;transform:scaleX(0.9435);transform-origin:0 0;">169</div>
<div style="position:absolute;left:27px;top:583px;width:540px;height:1px;background:#e0e0e0">
</div>
<div class="t" style="left:5px;top:567px;font-family:'Liberation Mono', monospace;font-size:10.6px;transform:scaleX(0.9435);transform-origin:0 0;">17</div>
<div class="cb" style="left:31px;top:567px"><svg width="11" height="11" style="position:absolute;left:0;top:0"><path d="M1.5 5.5 L4.5 8.5 L10 2" fill="none" stroke="#333" stroke-width="1.1"/></svg></div>
<div class="t" style="left:50px;top:567px;font-family:'Liberation Mono', monospace;font-size:10.6px;transform:scaleX(0.9438);transform-origin:0 0;">1805013e</div>
<div class="cb" style="left:121px;top:567px"><svg width="11" height="11" style="position:absolute;left:0;top:0"><path d="M1.5 5.5 L4.5 8.5 L10 2" fill="none" stroke="#333" stroke-width="1.1"/></svg></div>
<div class="t" style="left:140px;top:567px;font-family:'Liberation Mono', monospace;font-size:10.6px;transform:scaleX(0.9435);transform-origin:0 0;">8</div>
<div class="cb" style="left:161px;top:567px"><svg width="11" height="11" style="position:absolute;left:0;top:0"><path d="M1.5 5.5 L4.5 8.5 L10 2" fill="none" stroke="#333" stroke-width="1.1"/></svg></div>
<div class="t" style="left:180px;top:567px;font-family:'Liberation Mono', monospace;font-size:10.6px;transform:scaleX(0.9435);transform-origin:0 0;">f4</div>
<div class="cb" style="left:206px;top:567px"><svg width="11" height="11" style="position:absolute;left:0;top:0"><path d="M1.5 5.5 L4.5 8.5 L10 2" fill="none" stroke="#333" stroke-width="1.1"/></svg></div>
<div class="t" style="left:225px;top:567px;font-family:'Liberation Mono', monospace;font-size:10.6px;transform:scaleX(0.9435);transform-origin:0 0;">01</div>
<div class="cb" style="left:251px;top:567px"><svg width="11" height="11" style="position:absolute;left:0;top:0"><path d="M1.5 5.5 L4.5 8.5 L10 2" fill="none" stroke="#333" stroke-width="1.1"/></svg></div>
<div class="t" style="left:270px;top:567px;font-family:'Liberation Mono', monospace;font-size:10.6px;transform:scaleX(0.9435);transform-origin:0 0;">f4</div>
<div class="cb" style="left:296px;top:567px"><svg width="11" height="11" style="position:absolute;left:0;top:0"><path d="M1.5 5.5 L4.5 8.5 L10 2" fill="none" stroke="#333" stroke-width="1.1"/></svg></div>
<div class="t" style="left:315px;top:567px;font-family:'Liberation Mono', monospace;font-size:10.6px;transform:scaleX(0.9435);transform-origin:0 0;">01</div>
<div class="cb" style="left:341px;top:567px"><svg width="11" height="11" style="position:absolute;left:0;top:0"><path d="M1.5 5.5 L4.5 8.5 L10 2" fill="none" stroke="#333" stroke-width="1.1"/></svg></div>
<div class="t" style="left:360px;top:567px;font-family:'Liberation Mono', monospace;font-size:10.6px;transform:scaleX(0.9435);transform-origin:0 0;">4c</div>
<div class="cb" style="left:386px;top:567px"><svg width="11" height="11" style="position:absolute;left:0;top:0"><path d="M1.5 5.5 L4.5 8.5 L10 2" fill="none" stroke="#333" stroke-width="1.1"/></svg></div>
<div class="t" style="left:405px;top:567px;font-family:'Liberation Mono', monospace;font-size:10.6px;transform:scaleX(0.9435);transform-origin:0 0;">04</div>
<div class="cb" style="left:431px;top:567px"><svg width="11" height="11" style="position:absolute;left:0;top:0"><path d="M1.5 5.5 L4.5 8.5 L10 2" fill="none" stroke="#333" stroke-width="1.1"/></svg></div>
<div class="t" style="left:450px;top:567px;font-family:'Liberation Mono', monospace;font-size:10.6px;transform:scaleX(0.9435);transform-origin:0 0;">4c</div>
<div class="cb" style="left:476px;top:567px"><svg width="11" height="11" style="position:absolute;left:0;top:0"><path d="M1.5 5.5 L4.5 8.5 L10 2" fill="none" stroke="#333" stroke-width="1.1"/></svg></div>
<div class="t" style="left:495px;top:567px;font-family:'Liberation Mono', monospace;font-size:10.6px;transform:scaleX(0.9435);transform-origin:0 0;">04</div>
<div class="t" style="left:522px;top:567px;font-family:'Liberation Mono', monospace;font-size:10.6px;transform:scaleX(0.9435);transform-origin:0 0;">390</div>
<div style="position:absolute;left:27px;top:604px;width:540px;height:1px;background:#e0e0e0">
</div>
<div class="t" style="left:5px;top:588px;font-family:'Liberation Mono', monospace;font-size:10.6px;transform:scaleX(0.9435);transform-origin:0 0;">18</div>
<div class="cb" style="left:31px;top:588px"><svg width="11" height="11" style="position:absolute;left:0;top:0"><path d="M1.5 5.5 L4.5 8.5 L10 2" fill="none" stroke="#333" stroke-width="1.1"/></svg></div>
<div class="t" style="left:50px;top:588px;font-family:'Liberation Mono', monospace;font-size:10.6px;transform:scaleX(0.9438);transform-origin:0 0;">18010001</div>
<div class="cb" style="left:121px;top:588px"><svg width="11" height="11" style="position:absolute;left:0;top:0"><path d="M1.5 5.5 L4.5 8.5 L10 2" fill="none" stroke="#333" stroke-width="1.1"/></svg></div>
<div class="t" style="left:140px;top:588px;font-family:'Liberation Mono', monospace;font-size:10.6px;transform:scaleX(0.9435);transform-origin:0 0;">8</div>
<div class="cb" style="left:161px;top:588px"><svg width="11" height="11" style="position:absolute;left:0;top:0"><path d="M1.5 5.5 L4.5 8.5 L10 2" fill="none" stroke="#333" stroke-width="1.1"/></svg></div>
<div class="t" style="left:180px;top:588px;font-family:'Liberation Mono', monospace;font-size:10.6px;transform:scaleX(0.9435);transform-origin:0 0;">00</div>
<div class="cb" style="left:206px;top:588px"><svg width="11" height="11" style="position:absolute;left:0;top:0"><path d="M1.5 5.5 L4.5 8.5 L10 2" fill="none" stroke="#333" stroke-width="1.1"/></svg></div>
<div class="t" style="left:225px;top:588px;font-family:'Liberation Mono', monospace;font-size:10.6px;transform:scaleX(0.9435);transform-origin:0 0;">00</div>
<div class="cb" style="left:251px;top:588px"><svg width="11" height="11" style="position:absolute;left:0;top:0"><path d="M1.5 5.5 L4.5 8.5 L10 2" fill="none" stroke="#333" stroke-width="1.1"/></svg></div>
<div class="t" style="left:270px;top:588px;font-family:'Liberation Mono', monospace;font-size:10.6px;transform:scaleX(0.9435);transform-origin:0 0;">00</div>
<div class="cb" style="left:296px;top:588px"><svg width="11" height="11" style="position:absolute;left:0;top:0"><path d="M1.5 5.5 L4.5 8.5 L10 2" fill="none" stroke="#333" stroke-width="1.1"/></svg></div>
<div class="t" style="left:315px;top:588px;font-family:'Liberation Mono', monospace;font-size:10.6px;transform:scaleX(0.9435);transform-origin:0 0;">00</div>
<div class="cb" style="left:341px;top:588px"><svg width="11" height="11" style="position:absolute;left:0;top:0"><path d="M1.5 5.5 L4.5 8.5 L10 2" fill="none" stroke="#333" stroke-width="1.1"/></svg></div>
<div class="t" style="left:360px;top:588px;font-family:'Liberation Mono', monospace;font-size:10.6px;transform:scaleX(0.9435);transform-origin:0 0;">00</div>
<div class="cb" style="left:386px;top:588px"><svg width="11" height="11" style="position:absolute;left:0;top:0"><path d="M1.5 5.5 L4.5 8.5 L10 2" fill="none" stroke="#333" stroke-width="1.1"/></svg></div>
<div class="t" style="left:405px;top:588px;font-family:'Liberation Mono', monospace;font-size:10.6px;transform:scaleX(0.9435);transform-origin:0 0;">00</div>
<div class="cb" style="left:431px;top:588px"><svg width="11" height="11" style="position:absolute;left:0;top:0"><path d="M1.5 5.5 L4.5 8.5 L10 2" fill="none" stroke="#333" stroke-width="1.1"/></svg></div>
<div class="t" style="left:450px;top:588px;font-family:'Liberation Mono', monospace;font-size:10.6px;transform:scaleX(0.9435);transform-origin:0 0;">00</div>
<div class="cb" style="left:476px;top:588px"><svg width="11" height="11" style="position:absolute;left:0;top:0"><path d="M1.5 5.5 L4.5 8.5 L10 2" fill="none" stroke="#333" stroke-width="1.1"/></svg></div>
<div class="t" style="left:495px;top:588px;font-family:'Liberation Mono', monospace;font-size:10.6px;transform:scaleX(0.9435);transform-origin:0 0;">00</div>
<div class="t" style="left:522px;top:588px;font-family:'Liberation Mono', monospace;font-size:10.6px;transform:scaleX(0.9435);transform-origin:0 0;">2</div>
<div style="position:absolute;left:27px;top:625px;width:540px;height:1px;background:#e0e0e0">
</div>
<div class="t" style="left:5px;top:609px;font-family:'Liberation Mono', monospace;font-size:10.6px;transform:scaleX(0.9435);transform-origin:0 0;">19</div>
<div class="cb" style="left:31px;top:609px"><svg width="11" height="11" style="position:absolute;left:0;top:0"><path d="M1.5 5.5 L4.5 8.5 L10 2" fill="none" stroke="#333" stroke-width="1.1"/></svg></div>
<div class="t" style="left:50px;top:609px;font-family:'Liberation Mono', monospace;font-size:10.6px;transform:scaleX(0.9438);transform-origin:0 0;">18000005</div>
<div class="cb" style="left:121px;top:609px"><svg width="11" height="11" style="position:absolute;left:0;top:0"><path d="M1.5 5.5 L4.5 8.5 L10 2" fill="none" stroke="#333" stroke-width="1.1"/></svg></div>
<div class="t" style="left:140px;top:609px;font-family:'Liberation Mono', monospace;font-size:10.6px;transform:scaleX(0.9435);transform-origin:0 0;">8</div>
<div class="cb" style="left:161px;top:609px"><svg width="11" height="11" style="position:absolute;left:0;top:0"><path d="M1.5 5.5 L4.5 8.5 L10 2" fill="none" stroke="#333" stroke-width="1.1"/></svg></div>
<div class="t" style="left:180px;top:609px;font-family:'Liberation Mono', monospace;font-size:10.6px;transform:scaleX(0.9435);transform-origin:0 0;">10</div>
<div class="cb" style="left:206px;top:609px"><svg width="11" height="11" style="position:absolute;left:0;top:0"><path d="M1.5 5.5 L4.5 8.5 L10 2" fill="none" stroke="#333" stroke-width="1.1"/></svg></div>
<div class="t" style="left:225px;top:609px;font-family:'Liberation Mono', monospace;font-size:10.6px;transform:scaleX(0.9435);transform-origin:0 0;">27</div>
<div class="cb" style="left:251px;top:609px"><svg width="11" height="11" style="position:absolute;left:0;top:0"><path d="M1.5 5.5 L4.5 8.5 L10 2" fill="none" stroke="#333" stroke-width="1.1"/></svg></div>
<div class="t" style="left:270px;top:609px;font-family:'Liberation Mono', monospace;font-size:10.6px;transform:scaleX(0.9435);transform-origin:0 0;">10</div>
<div class="cb" style="left:296px;top:609px"><svg width="11" height="11" style="position:absolute;left:0;top:0"><path d="M1.5 5.5 L4.5 8.5 L10 2" fill="none" stroke="#333" stroke-width="1.1"/></svg></div>
<div class="t" style="left:315px;top:609px;font-family:'Liberation Mono', monospace;font-size:10.6px;transform:scaleX(0.9435);transform-origin:0 0;">27</div>
<div class="cb" style="left:341px;top:609px"><svg width="11" height="11" style="position:absolute;left:0;top:0"><path d="M1.5 5.5 L4.5 8.5 L10 2" fill="none" stroke="#333" stroke-width="1.1"/></svg></div>
<div class="t" style="left:360px;top:609px;font-family:'Liberation Mono', monospace;font-size:10.6px;transform:scaleX(0.9435);transform-origin:0 0;">00</div>
<div class="cb" style="left:386px;top:609px"><svg width="11" height="11" style="position:absolute;left:0;top:0"><path d="M1.5 5.5 L4.5 8.5 L10 2" fill="none" stroke="#333" stroke-width="1.1"/></svg></div>
<div class="t" style="left:405px;top:609px;font-family:'Liberation Mono', monospace;font-size:10.6px;transform:scaleX(0.9435);transform-origin:0 0;">00</div>
<div class="cb" style="left:431px;top:609px"><svg width="11" height="11" style="position:absolute;left:0;top:0"><path d="M1.5 5.5 L4.5 8.5 L10 2" fill="none" stroke="#333" stroke-width="1.1"/></svg></div>
<div class="t" style="left:450px;top:609px;font-family:'Liberation Mono', monospace;font-size:10.6px;transform:scaleX(0.9435);transform-origin:0 0;">00</div>
<div class="cb" style="left:476px;top:609px"><svg width="11" height="11" style="position:absolute;left:0;top:0"><path d="M1.5 5.5 L4.5 8.5 L10 2" fill="none" stroke="#333" stroke-width="1.1"/></svg></div>
<div class="t" style="left:495px;top:609px;font-family:'Liberation Mono', monospace;font-size:10.6px;transform:scaleX(0.9435);transform-origin:0 0;">00</div>
<div class="t" style="left:522px;top:609px;font-family:'Liberation Mono', monospace;font-size:10.6px;transform:scaleX(0.9435);transform-origin:0 0;">230</div>
<div style="position:absolute;left:27px;top:646px;width:540px;height:1px;background:#e0e0e0">
</div>
<div class="t" style="left:5px;top:630px;font-family:'Liberation Mono', monospace;font-size:10.6px;transform:scaleX(0.9435);transform-origin:0 0;">20</div>
<div class="cb" style="left:31px;top:630px"><svg width="11" height="11" style="position:absolute;left:0;top:0"><path d="M1.5 5.5 L4.5 8.5 L10 2" fill="none" stroke="#333" stroke-width="1.1"/></svg></div>
<div class="t" style="left:50px;top:630px;font-family:'Liberation Mono', monospace;font-size:10.6px;transform:scaleX(0.9438);transform-origin:0 0;">18000010</div>
<div class="cb" style="left:121px;top:630px"><svg width="11" height="11" style="position:absolute;left:0;top:0"><path d="M1.5 5.5 L4.5 8.5 L10 2" fill="none" stroke="#333" stroke-width="1.1"/></svg></div>
<div class="t" style="left:140px;top:630px;font-family:'Liberation Mono', monospace;font-size:10.6px;transform:scaleX(0.9435);transform-origin:0 0;">8</div>
<div class="cb" style="left:161px;top:630px"><svg width="11" height="11" style="position:absolute;left:0;top:0"><path d="M1.5 5.5 L4.5 8.5 L10 2" fill="none" stroke="#333" stroke-width="1.1"/></svg></div>
<div class="t" style="left:180px;top:630px;font-family:'Liberation Mono', monospace;font-size:10.6px;transform:scaleX(0.9435);transform-origin:0 0;">05</div>
<div class="cb" style="left:206px;top:630px"><svg width="11" height="11" style="position:absolute;left:0;top:0"><path d="M1.5 5.5 L4.5 8.5 L10 2" fill="none" stroke="#333" stroke-width="1.1"/></svg></div>
<div class="t" style="left:225px;top:630px;font-family:'Liberation Mono', monospace;font-size:10.6px;transform:scaleX(0.9435);transform-origin:0 0;">05</div>
<div class="cb" style="left:251px;top:630px"><svg width="11" height="11" style="position:absolute;left:0;top:0"><path d="M1.5 5.5 L4.5 8.5 L10 2" fill="none" stroke="#333" stroke-width="1.1"/></svg></div>
<div class="t" style="left:270px;top:630px;font-family:'Liberation Mono', monospace;font-size:10.6px;transform:scaleX(0.9435);transform-origin:0 0;">05</div>
<div class="cb" style="left:296px;top:630px"><svg width="11" height="11" style="position:absolute;left:0;top:0"><path d="M1.5 5.5 L4.5 8.5 L10 2" fill="none" stroke="#333" stroke-width="1.1"/></svg></div>
<div class="t" style="left:315px;top:630px;font-family:'Liberation Mono', monospace;font-size:10.6px;transform:scaleX(0.9435);transform-origin:0 0;">05</div>
<div class="cb" style="left:341px;top:630px"><svg width="11" height="11" style="position:absolute;left:0;top:0"><path d="M1.5 5.5 L4.5 8.5 L10 2" fill="none" stroke="#333" stroke-width="1.1"/></svg></div>
<div class="t" style="left:360px;top:630px;font-family:'Liberation Mono', monospace;font-size:10.6px;transform:scaleX(0.9435);transform-origin:0 0;">05</div>
<div class="cb" style="left:386px;top:630px"><svg width="11" height="11" style="position:absolute;left:0;top:0"><path d="M1.5 5.5 L4.5 8.5 L10 2" fill="none" stroke="#333" stroke-width="1.1"/></svg></div>
<div class="t" style="left:405px;top:630px;font-family:'Liberation Mono', monospace;font-size:10.6px;transform:scaleX(0.9435);transform-origin:0 0;">54</div>
<div class="cb" style="left:431px;top:630px"><svg width="11" height="11" style="position:absolute;left:0;top:0"><path d="M1.5 5.5 L4.5 8.5 L10 2" fill="none" stroke="#333" stroke-width="1.1"/></svg></div>
<div class="t" style="left:450px;top:630px;font-family:'Liberation Mono', monospace;font-size:10.6px;transform:scaleX(0.9435);transform-origin:0 0;">4a</div>
<div class="cb" style="left:476px;top:630px"><svg width="11" height="11" style="position:absolute;left:0;top:0"><path d="M1.5 5.5 L4.5 8.5 L10 2" fill="none" stroke="#333" stroke-width="1.1"/></svg></div>
<div class="t" style="left:495px;top:630px;font-family:'Liberation Mono', monospace;font-size:10.6px;transform:scaleX(0.9435);transform-origin:0 0;">30</div>
<div class="t" style="left:522px;top:630px;font-family:'Liberation Mono', monospace;font-size:10.6px;transform:scaleX(0.9435);transform-origin:0 0;">705</div>
<div style="position:absolute;left:27px;top:667px;width:540px;height:1px;background:#e0e0e0">
</div>
<div class="t" style="left:5px;top:651px;font-family:'Liberation Mono', monospace;font-size:10.6px;transform:scaleX(0.9435);transform-origin:0 0;">21</div>
<div class="cb" style="left:31px;top:651px"><svg width="11" height="11" style="position:absolute;left:0;top:0"><path d="M1.5 5.5 L4.5 8.5 L10 2" fill="none" stroke="#333" stroke-width="1.1"/></svg></div>
<div class="t" style="left:50px;top:651px;font-family:'Liberation Mono', monospace;font-size:10.6px;transform:scaleX(0.9438);transform-origin:0 0;">18050052</div>
<div class="cb" style="left:121px;top:651px"><svg width="11" height="11" style="position:absolute;left:0;top:0"><path d="M1.5 5.5 L4.5 8.5 L10 2" fill="none" stroke="#333" stroke-width="1.1"/></svg></div>
<div class="t" style="left:140px;top:651px;font-family:'Liberation Mono', monospace;font-size:10.6px;transform:scaleX(0.9435);transform-origin:0 0;">8</div>
<div class="cb" style="left:161px;top:651px"><svg width="11" height="11" style="position:absolute;left:0;top:0"><path d="M1.5 5.5 L4.5 8.5 L10 2" fill="none" stroke="#333" stroke-width="1.1"/></svg></div>
<div class="t" style="left:180px;top:651px;font-family:'Liberation Mono', monospace;font-size:10.6px;transform:scaleX(0.9435);transform-origin:0 0;">00</div>
<div class="cb" style="left:206px;top:651px"><svg width="11" height="11" style="position:absolute;left:0;top:0"><path d="M1.5 5.5 L4.5 8.5 L10 2" fill="none" stroke="#333" stroke-width="1.1"/></svg></div>
<div class="t" style="left:225px;top:651px;font-family:'Liberation Mono', monospace;font-size:10.6px;transform:scaleX(0.9435);transform-origin:0 0;">00</div>
<div class="cb" style="left:251px;top:651px"><svg width="11" height="11" style="position:absolute;left:0;top:0"><path d="M1.5 5.5 L4.5 8.5 L10 2" fill="none" stroke="#333" stroke-width="1.1"/></svg></div>
<div class="t" style="left:270px;top:651px;font-family:'Liberation Mono', monospace;font-size:10.6px;transform:scaleX(0.9435);transform-origin:0 0;">00</div>
<div class="cb" style="left:296px;top:651px"><svg width="11" height="11" style="position:absolute;left:0;top:0"><path d="M1.5 5.5 L4.5 8.5 L10 2" fill="none" stroke="#333" stroke-width="1.1"/></svg></div>
<div class="t" style="left:315px;top:651px;font-family:'Liberation Mono', monospace;font-size:10.6px;transform:scaleX(0.9435);transform-origin:0 0;">00</div>
<div class="cb" style="left:341px;top:651px"><svg width="11" height="11" style="position:absolute;left:0;top:0"><path d="M1.5 5.5 L4.5 8.5 L10 2" fill="none" stroke="#333" stroke-width="1.1"/></svg></div>
<div class="t" style="left:360px;top:651px;font-family:'Liberation Mono', monospace;font-size:10.6px;transform:scaleX(0.9435);transform-origin:0 0;">00</div>
<div class="cb" style="left:386px;top:651px"><svg width="11" height="11" style="position:absolute;left:0;top:0"><path d="M1.5 5.5 L4.5 8.5 L10 2" fill="none" stroke="#333" stroke-width="1.1"/></svg></div>
<div class="t" style="left:405px;top:651px;font-family:'Liberation Mono', monospace;font-size:10.6px;transform:scaleX(0.9435);transform-origin:0 0;">00</div>
<div class="cb" style="left:431px;top:651px"><svg width="11" height="11" style="position:absolute;left:0;top:0"><path d="M1.5 5.5 L4.5 8.5 L10 2" fill="none" stroke="#333" stroke-width="1.1"/></svg></div>
<div class="t" style="left:450px;top:651px;font-family:'Liberation Mono', monospace;font-size:10.6px;transform:scaleX(0.9435);transform-origin:0 0;">00</div>
<div class="cb" style="left:476px;top:651px"><svg width="11" height="11" style="position:absolute;left:0;top:0"><path d="M1.5 5.5 L4.5 8.5 L10 2" fill="none" stroke="#333" stroke-width="1.1"/></svg></div>
<div class="t" style="left:495px;top:651px;font-family:'Liberation Mono', monospace;font-size:10.6px;transform:scaleX(0.9435);transform-origin:0 0;">00</div>
<div class="t" style="left:522px;top:651px;font-family:'Liberation Mono', monospace;font-size:10.6px;transform:scaleX(0.9435);transform-origin:0 0;">297</div>
<div style="position:absolute;left:27px;top:688px;width:540px;height:1px;background:#e0e0e0">
</div>
<div class="t" style="left:5px;top:672px;font-family:'Liberation Mono', monospace;font-size:10.6px;transform:scaleX(0.9435);transform-origin:0 0;">22</div>
<div class="cb" style="left:31px;top:672px"><svg width="11" height="11" style="position:absolute;left:0;top:0"><path d="M1.5 5.5 L4.5 8.5 L10 2" fill="none" stroke="#333" stroke-width="1.1"/></svg></div>
<div class="t" style="left:50px;top:672px;font-family:'Liberation Mono', monospace;font-size:10.6px;transform:scaleX(0.9438);transform-origin:0 0;">18050086</div>
<div class="cb" style="left:121px;top:672px"><svg width="11" height="11" style="position:absolute;left:0;top:0"><path d="M1.5 5.5 L4.5 8.5 L10 2" fill="none" stroke="#333" stroke-width="1.1"/></svg></div>
<div class="t" style="left:140px;top:672px;font-family:'Liberation Mono', monospace;font-size:10.6px;transform:scaleX(0.9435);transform-origin:0 0;">8</div>
<div class="cb" style="left:161px;top:672px"><svg width="11" height="11" style="position:absolute;left:0;top:0"><path d="M1.5 5.5 L4.5 8.5 L10 2" fill="none" stroke="#333" stroke-width="1.1"/></svg></div>
<div class="t" style="left:180px;top:672px;font-family:'Liberation Mono', monospace;font-size:10.6px;transform:scaleX(0.9435);transform-origin:0 0;">10</div>
<div class="cb" style="left:206px;top:672px"><svg width="11" height="11" style="position:absolute;left:0;top:0"><path d="M1.5 5.5 L4.5 8.5 L10 2" fill="none" stroke="#333" stroke-width="1.1"/></svg></div>
<div class="t" style="left:225px;top:672px;font-family:'Liberation Mono', monospace;font-size:10.6px;transform:scaleX(0.9435);transform-origin:0 0;">27</div>
<div class="cb" style="left:251px;top:672px"><svg width="11" height="11" style="position:absolute;left:0;top:0"><path d="M1.5 5.5 L4.5 8.5 L10 2" fill="none" stroke="#333" stroke-width="1.1"/></svg></div>
<div class="t" style="left:270px;top:672px;font-family:'Liberation Mono', monospace;font-size:10.6px;transform:scaleX(0.9435);transform-origin:0 0;">10</div>
<div class="cb" style="left:296px;top:672px"><svg width="11" height="11" style="position:absolute;left:0;top:0"><path d="M1.5 5.5 L4.5 8.5 L10 2" fill="none" stroke="#333" stroke-width="1.1"/></svg></div>
<div class="t" style="left:315px;top:672px;font-family:'Liberation Mono', monospace;font-size:10.6px;transform:scaleX(0.9435);transform-origin:0 0;">27</div>
<div class="cb" style="left:341px;top:672px"><svg width="11" height="11" style="position:absolute;left:0;top:0"><path d="M1.5 5.5 L4.5 8.5 L10 2" fill="none" stroke="#333" stroke-width="1.1"/></svg></div>
<div class="t" style="left:360px;top:672px;font-family:'Liberation Mono', monospace;font-size:10.6px;transform:scaleX(0.9435);transform-origin:0 0;">10</div>
<div class="cb" style="left:386px;top:672px"><svg width="11" height="11" style="position:absolute;left:0;top:0"><path d="M1.5 5.5 L4.5 8.5 L10 2" fill="none" stroke="#333" stroke-width="1.1"/></svg></div>
<div class="t" style="left:405px;top:672px;font-family:'Liberation Mono', monospace;font-size:10.6px;transform:scaleX(0.9435);transform-origin:0 0;">27</div>
<div class="cb" style="left:431px;top:672px"><svg width="11" height="11" style="position:absolute;left:0;top:0"><path d="M1.5 5.5 L4.5 8.5 L10 2" fill="none" stroke="#333" stroke-width="1.1"/></svg></div>
<div class="t" style="left:450px;top:672px;font-family:'Liberation Mono', monospace;font-size:10.6px;transform:scaleX(0.9435);transform-origin:0 0;">10</div>
<div class="cb" style="left:476px;top:672px"><svg width="11" height="11" style="position:absolute;left:0;top:0"><path d="M1.5 5.5 L4.5 8.5 L10 2" fill="none" stroke="#333" stroke-width="1.1"/></svg></div>
<div class="t" style="left:495px;top:672px;font-family:'Liberation Mono', monospace;font-size:10.6px;transform:scaleX(0.9435);transform-origin:0 0;">27</div>
<div class="t" style="left:522px;top:672px;font-family:'Liberation Mono', monospace;font-size:10.6px;transform:scaleX(0.9435);transform-origin:0 0;">386</div>
<div style="position:absolute;left:27px;top:709px;width:540px;height:1px;background:#e0e0e0">
</div>
<div class="t" style="left:5px;top:693px;font-family:'Liberation Mono', monospace;font-size:10.6px;transform:scaleX(0.9435);transform-origin:0 0;">23</div>
<div class="cb" style="left:31px;top:693px"><svg width="11" height="11" style="position:absolute;left:0;top:0"><path d="M1.5 5.5 L4.5 8.5 L10 2" fill="none" stroke="#333" stroke-width="1.1"/></svg></div>
<div class="t" style="left:50px;top:693px;font-family:'Liberation Mono', monospace;font-size:10.6px;transform:scaleX(0.9438);transform-origin:0 0;">180500ae</div>
<div class="cb" style="left:121px;top:693px"><svg width="11" height="11" style="position:absolute;left:0;top:0"><path d="M1.5 5.5 L4.5 8.5 L10 2" fill="none" stroke="#333" stroke-width="1.1"/></svg></div>
<div class="t" style="left:140px;top:693px;font-family:'Liberation Mono', monospace;font-size:10.6px;transform:scaleX(0.9435);transform-origin:0 0;">8</div>
<div class="cb" style="left:161px;top:693px"><svg width="11" height="11" style="position:absolute;left:0;top:0"><path d="M1.5 5.5 L4.5 8.5 L10 2" fill="none" stroke="#333" stroke-width="1.1"/></svg></div>
<div class="t" style="left:180px;top:693px;font-family:'Liberation Mono', monospace;font-size:10.6px;transform:scaleX(0.9435);transform-origin:0 0;">00</div>
<div class="cb" style="left:206px;top:693px"><svg width="11" height="11" style="position:absolute;left:0;top:0"><path d="M1.5 5.5 L4.5 8.5 L10 2" fill="none" stroke="#333" stroke-width="1.1"/></svg></div>
<div class="t" style="left:225px;top:693px;font-family:'Liberation Mono', monospace;font-size:10.6px;transform:scaleX(0.9435);transform-origin:0 0;">00</div>
<div class="cb" style="left:251px;top:693px"><svg width="11" height="11" style="position:absolute;left:0;top:0"><path d="M1.5 5.5 L4.5 8.5 L10 2" fill="none" stroke="#333" stroke-width="1.1"/></svg></div>
<div class="t" style="left:270px;top:693px;font-family:'Liberation Mono', monospace;font-size:10.6px;transform:scaleX(0.9435);transform-origin:0 0;">00</div>
<div class="cb" style="left:296px;top:693px"><svg width="11" height="11" style="position:absolute;left:0;top:0"><path d="M1.5 5.5 L4.5 8.5 L10 2" fill="none" stroke="#333" stroke-width="1.1"/></svg></div>
<div class="t" style="left:315px;top:693px;font-family:'Liberation Mono', monospace;font-size:10.6px;transform:scaleX(0.9435);transform-origin:0 0;">00</div>
<div class="cb" style="left:341px;top:693px"><svg width="11" height="11" style="position:absolute;left:0;top:0"><path d="M1.5 5.5 L4.5 8.5 L10 2" fill="none" stroke="#333" stroke-width="1.1"/></svg></div>
<div class="t" style="left:360px;top:693px;font-family:'Liberation Mono', monospace;font-size:10.6px;transform:scaleX(0.9435);transform-origin:0 0;">00</div>
<div class="cb" style="left:386px;top:693px"><svg width="11" height="11" style="position:absolute;left:0;top:0"><path d="M1.5 5.5 L4.5 8.5 L10 2" fill="none" stroke="#333" stroke-width="1.1"/></svg></div>
<div class="t" style="left:405px;top:693px;font-family:'Liberation Mono', monospace;font-size:10.6px;transform:scaleX(0.9435);transform-origin:0 0;">00</div>
<div class="cb" style="left:431px;top:693px"><svg width="11" height="11" style="position:absolute;left:0;top:0"><path d="M1.5 5.5 L4.5 8.5 L10 2" fill="none" stroke="#333" stroke-width="1.1"/></svg></div>
<div class="t" style="left:450px;top:693px;font-family:'Liberation Mono', monospace;font-size:10.6px;transform:scaleX(0.9435);transform-origin:0 0;">00</div>
<div class="cb" style="left:476px;top:693px"><svg width="11" height="11" style="position:absolute;left:0;top:0"><path d="M1.5 5.5 L4.5 8.5 L10 2" fill="none" stroke="#333" stroke-width="1.1"/></svg></div>
<div class="t" style="left:495px;top:693px;font-family:'Liberation Mono', monospace;font-size:10.6px;transform:scaleX(0.9435);transform-origin:0 0;">00</div>
<div class="t" style="left:522px;top:693px;font-family:'Liberation Mono', monospace;font-size:10.6px;transform:scaleX(0.9435);transform-origin:0 0;">494</div>
<div style="position:absolute;left:27px;top:730px;width:540px;height:1px;background:#e0e0e0">
</div>
<div class="t" style="left:5px;top:714px;font-family:'Liberation Mono', monospace;font-size:10.6px;transform:scaleX(0.9435);transform-origin:0 0;">24</div>
<div class="cb" style="left:31px;top:714px"><svg width="11" height="11" style="position:absolute;left:0;top:0"><path d="M1.5 5.5 L4.5 8.5 L10 2" fill="none" stroke="#333" stroke-width="1.1"/></svg></div>
<div class="t" style="left:50px;top:714px;font-family:'Liberation Mono', monospace;font-size:10.6px;transform:scaleX(0.9438);transform-origin:0 0;">180500d4</div>
<div class="cb" style="left:121px;top:714px"><svg width="11" height="11" style="position:absolute;left:0;top:0"><path d="M1.5 5.5 L4.5 8.5 L10 2" fill="none" stroke="#333" stroke-width="1.1"/></svg></div>
<div class="t" style="left:140px;top:714px;font-family:'Liberation Mono', monospace;font-size:10.6px;transform:scaleX(0.9435);transform-origin:0 0;">8</div>
<div class="cb" style="left:161px;top:714px"><svg width="11" height="11" style="position:absolute;left:0;top:0"><path d="M1.5 5.5 L4.5 8.5 L10 2" fill="none" stroke="#333" stroke-width="1.1"/></svg></div>
<div class="t" style="left:180px;top:714px;font-family:'Liberation Mono', monospace;font-size:10.6px;transform:scaleX(0.9435);transform-origin:0 0;">00</div>
<div class="cb" style="left:206px;top:714px"><svg width="11" height="11" style="position:absolute;left:0;top:0"><path d="M1.5 5.5 L4.5 8.5 L10 2" fill="none" stroke="#333" stroke-width="1.1"/></svg></div>
<div class="t" style="left:225px;top:714px;font-family:'Liberation Mono', monospace;font-size:10.6px;transform:scaleX(0.9435);transform-origin:0 0;">00</div>
<div class="cb" style="left:251px;top:714px"><svg width="11" height="11" style="position:absolute;left:0;top:0"><path d="M1.5 5.5 L4.5 8.5 L10 2" fill="none" stroke="#333" stroke-width="1.1"/></svg></div>
<div class="t" style="left:270px;top:714px;font-family:'Liberation Mono', monospace;font-size:10.6px;transform:scaleX(0.9435);transform-origin:0 0;">00</div>
<div class="cb" style="left:296px;top:714px"><svg width="11" height="11" style="position:absolute;left:0;top:0"><path d="M1.5 5.5 L4.5 8.5 L10 2" fill="none" stroke="#333" stroke-width="1.1"/></svg></div>
<div class="t" style="left:315px;top:714px;font-family:'Liberation Mono', monospace;font-size:10.6px;transform:scaleX(0.9435);transform-origin:0 0;">00</div>
<div class="cb" style="left:341px;top:714px"><svg width="11" height="11" style="position:absolute;left:0;top:0"><path d="M1.5 5.5 L4.5 8.5 L10 2" fill="none" stroke="#333" stroke-width="1.1"/></svg></div>
<div class="t" style="left:360px;top:714px;font-family:'Liberation Mono', monospace;font-size:10.6px;transform:scaleX(0.9435);transform-origin:0 0;">00</div>
<div class="cb" style="left:386px;top:714px"><svg width="11" height="11" style="position:absolute;left:0;top:0"><path d="M1.5 5.5 L4.5 8.5 L10 2" fill="none" stroke="#333" stroke-width="1.1"/></svg></div>
<div class="t" style="left:405px;top:714px;font-family:'Liberation Mono', monospace;font-size:10.6px;transform:scaleX(0.9435);transform-origin:0 0;">00</div>
<div class="cb" style="left:431px;top:714px"><svg width="11" height="11" style="position:absolute;left:0;top:0"><path d="M1.5 5.5 L4.5 8.5 L10 2" fill="none" stroke="#333" stroke-width="1.1"/></svg></div>
<div class="t" style="left:450px;top:714px;font-family:'Liberation Mono', monospace;font-size:10.6px;transform:scaleX(0.9435);transform-origin:0 0;">00</div>
<div class="cb" style="left:476px;top:714px"><svg width="11" height="11" style="position:absolute;left:0;top:0"><path d="M1.5 5.5 L4.5 8.5 L10 2" fill="none" stroke="#333" stroke-width="1.1"/></svg></div>
<div class="t" style="left:495px;top:714px;font-family:'Liberation Mono', monospace;font-size:10.6px;transform:scaleX(0.9435);transform-origin:0 0;">00</div>
<div class="t" style="left:522px;top:714px;font-family:'Liberation Mono', monospace;font-size:10.6px;transform:scaleX(0.9435);transform-origin:0 0;">370</div>
<div style="position:absolute;left:27px;top:751px;width:540px;height:1px;background:#e0e0e0">
</div>
<div class="t" style="left:5px;top:735px;font-family:'Liberation Mono', monospace;font-size:10.6px;transform:scaleX(0.9435);transform-origin:0 0;">25</div>
<div class="cb" style="left:31px;top:735px"><svg width="11" height="11" style="position:absolute;left:0;top:0"><path d="M1.5 5.5 L4.5 8.5 L10 2" fill="none" stroke="#333" stroke-width="1.1"/></svg></div>
<div class="t" style="left:50px;top:735px;font-family:'Liberation Mono', monospace;font-size:10.6px;transform:scaleX(0.9438);transform-origin:0 0;">1805010e</div>
<div class="cb" style="left:121px;top:735px"><svg width="11" height="11" style="position:absolute;left:0;top:0"><path d="M1.5 5.5 L4.5 8.5 L10 2" fill="none" stroke="#333" stroke-width="1.1"/></svg></div>
<div class="t" style="left:140px;top:735px;font-family:'Liberation Mono', monospace;font-size:10.6px;transform:scaleX(0.9435);transform-origin:0 0;">8</div>
<div class="cb" style="left:161px;top:735px"><svg width="11" height="11" style="position:absolute;left:0;top:0"><path d="M1.5 5.5 L4.5 8.5 L10 2" fill="none" stroke="#333" stroke-width="1.1"/></svg></div>
<div class="t" style="left:180px;top:735px;font-family:'Liberation Mono', monospace;font-size:10.6px;transform:scaleX(0.9435);transform-origin:0 0;">32</div>
<div class="cb" style="left:206px;top:735px"><svg width="11" height="11" style="position:absolute;left:0;top:0"><path d="M1.5 5.5 L4.5 8.5 L10 2" fill="none" stroke="#333" stroke-width="1.1"/></svg></div>
<div class="t" style="left:225px;top:735px;font-family:'Liberation Mono', monospace;font-size:10.6px;transform:scaleX(0.9435);transform-origin:0 0;">32</div>
<div class="cb" style="left:251px;top:735px"><svg width="11" height="11" style="position:absolute;left:0;top:0"><path d="M1.5 5.5 L4.5 8.5 L10 2" fill="none" stroke="#333" stroke-width="1.1"/></svg></div>
<div class="t" style="left:270px;top:735px;font-family:'Liberation Mono', monospace;font-size:10.6px;transform:scaleX(0.9435);transform-origin:0 0;">01</div>
<div class="cb" style="left:296px;top:735px"><svg width="11" height="11" style="position:absolute;left:0;top:0"><path d="M1.5 5.5 L4.5 8.5 L10 2" fill="none" stroke="#333" stroke-width="1.1"/></svg></div>
<div class="t" style="left:315px;top:735px;font-family:'Liberation Mono', monospace;font-size:10.6px;transform:scaleX(0.9435);transform-origin:0 0;">01</div>
<div class="cb" style="left:341px;top:735px"><svg width="11" height="11" style="position:absolute;left:0;top:0"><path d="M1.5 5.5 L4.5 8.5 L10 2" fill="none" stroke="#333" stroke-width="1.1"/></svg></div>
<div class="t" style="left:360px;top:735px;font-family:'Liberation Mono', monospace;font-size:10.6px;transform:scaleX(0.9435);transform-origin:0 0;">0a</div>
<div class="cb" style="left:386px;top:735px"><svg width="11" height="11" style="position:absolute;left:0;top:0"><path d="M1.5 5.5 L4.5 8.5 L10 2" fill="none" stroke="#333" stroke-width="1.1"/></svg></div>
<div class="t" style="left:405px;top:735px;font-family:'Liberation Mono', monospace;font-size:10.6px;transform:scaleX(0.9435);transform-origin:0 0;">0a</div>
<div class="cb" style="left:431px;top:735px"><svg width="11" height="11" style="position:absolute;left:0;top:0"><path d="M1.5 5.5 L4.5 8.5 L10 2" fill="none" stroke="#333" stroke-width="1.1"/></svg></div>
<div class="t" style="left:450px;top:735px;font-family:'Liberation Mono', monospace;font-size:10.6px;transform:scaleX(0.9435);transform-origin:0 0;">0a</div>
<div class="cb" style="left:476px;top:735px"><svg width="11" height="11" style="position:absolute;left:0;top:0"><path d="M1.5 5.5 L4.5 8.5 L10 2" fill="none" stroke="#333" stroke-width="1.1"/></svg></div>
<div class="t" style="left:495px;top:735px;font-family:'Liberation Mono', monospace;font-size:10.6px;transform:scaleX(0.9435);transform-origin:0 0;">0a</div>
<div class="t" style="left:522px;top:735px;font-family:'Liberation Mono', monospace;font-size:10.6px;transform:scaleX(0.9435);transform-origin:0 0;">2</div>
<div style="position:absolute;left:27px;top:772px;width:540px;height:1px;background:#e0e0e0">
</div>
<div class="t" style="left:5px;top:756px;font-family:'Liberation Mono', monospace;font-size:10.6px;transform:scaleX(0.9435);transform-origin:0 0;">26</div>
<div class="cb" style="left:31px;top:756px"><svg width="11" height="11" style="position:absolute;left:0;top:0"><path d="M1.5 5.5 L4.5 8.5 L10 2" fill="none" stroke="#333" stroke-width="1.1"/></svg></div>
<div class="t" style="left:50px;top:756px;font-family:'Liberation Mono', monospace;font-size:10.6px;transform:scaleX(0.9438);transform-origin:0 0;">18050136</div>
<div class="cb" style="left:121px;top:756px"><svg width="11" height="11" style="position:absolute;left:0;top:0"><path d="M1.5 5.5 L4.5 8.5 L10 2" fill="none" stroke="#333" stroke-width="1.1"/></svg></div>
<div class="t" style="left:140px;top:756px;font-family:'Liberation Mono', monospace;font-size:10.6px;transform:scaleX(0.9435);transform-origin:0 0;">8</div>
<div class="cb" style="left:161px;top:756px"><svg width="11" height="11" style="position:absolute;left:0;top:0"><path d="M1.5 5.5 L4.5 8.5 L10 2" fill="none" stroke="#333" stroke-width="1.1"/></svg></div>
<div class="t" style="left:180px;top:756px;font-family:'Liberation Mono', monospace;font-size:10.6px;transform:scaleX(0.9435);transform-origin:0 0;">38</div>
<div class="cb" style="left:206px;top:756px"><svg width="11" height="11" style="position:absolute;left:0;top:0"><path d="M1.5 5.5 L4.5 8.5 L10 2" fill="none" stroke="#333" stroke-width="1.1"/></svg></div>
<div class="t" style="left:225px;top:756px;font-family:'Liberation Mono', monospace;font-size:10.6px;transform:scaleX(0.9435);transform-origin:0 0;">04</div>
<div class="cb" style="left:251px;top:756px"><svg width="11" height="11" style="position:absolute;left:0;top:0"><path d="M1.5 5.5 L4.5 8.5 L10 2" fill="none" stroke="#333" stroke-width="1.1"/></svg></div>
<div class="t" style="left:270px;top:756px;font-family:'Liberation Mono', monospace;font-size:10.6px;transform:scaleX(0.9435);transform-origin:0 0;">29</div>
<div class="cb" style="left:296px;top:756px"><svg width="11" height="11" style="position:absolute;left:0;top:0"><path d="M1.5 5.5 L4.5 8.5 L10 2" fill="none" stroke="#333" stroke-width="1.1"/></svg></div>
<div class="t" style="left:315px;top:756px;font-family:'Liberation Mono', monospace;font-size:10.6px;transform:scaleX(0.9435);transform-origin:0 0;">04</div>
<div class="cb" style="left:341px;top:756px"><svg width="11" height="11" style="position:absolute;left:0;top:0"><path d="M1.5 5.5 L4.5 8.5 L10 2" fill="none" stroke="#333" stroke-width="1.1"/></svg></div>
<div class="t" style="left:360px;top:756px;font-family:'Liberation Mono', monospace;font-size:10.6px;transform:scaleX(0.9435);transform-origin:0 0;">e8</div>
<div class="cb" style="left:386px;top:756px"><svg width="11" height="11" style="position:absolute;left:0;top:0"><path d="M1.5 5.5 L4.5 8.5 L10 2" fill="none" stroke="#333" stroke-width="1.1"/></svg></div>
<div class="t" style="left:405px;top:756px;font-family:'Liberation Mono', monospace;font-size:10.6px;transform:scaleX(0.9435);transform-origin:0 0;">03</div>
<div class="cb" style="left:431px;top:756px"><svg width="11" height="11" style="position:absolute;left:0;top:0"><path d="M1.5 5.5 L4.5 8.5 L10 2" fill="none" stroke="#333" stroke-width="1.1"/></svg></div>
<div class="t" style="left:450px;top:756px;font-family:'Liberation Mono', monospace;font-size:10.6px;transform:scaleX(0.9435);transform-origin:0 0;">fc</div>
<div class="cb" style="left:476px;top:756px"><svg width="11" height="11" style="position:absolute;left:0;top:0"><path d="M1.5 5.5 L4.5 8.5 L10 2" fill="none" stroke="#333" stroke-width="1.1"/></svg></div>
<div class="t" style="left:495px;top:756px;font-family:'Liberation Mono', monospace;font-size:10.6px;transform:scaleX(0.9435);transform-origin:0 0;">03</div>
<div class="t" style="left:522px;top:756px;font-family:'Liberation Mono', monospace;font-size:10.6px;transform:scaleX(0.9435);transform-origin:0 0;">17</div>
<div style="position:absolute;left:27px;top:793px;width:540px;height:1px;background:#e0e0e0">
</div>
<div class="t" style="left:5px;top:777px;font-family:'Liberation Mono', monospace;font-size:10.6px;transform:scaleX(0.9435);transform-origin:0 0;">27</div>
<div class="cb" style="left:31px;top:777px"><svg width="11" height="11" style="position:absolute;left:0;top:0"><path d="M1.5 5.5 L4.5 8.5 L10 2" fill="none" stroke="#333" stroke-width="1.1"/></svg></div>
<div class="t" style="left:50px;top:777px;font-family:'Liberation Mono', monospace;font-size:10.6px;transform:scaleX(0.9438);transform-origin:0 0;">1805015a</div>
<div class="cb" style="left:121px;top:777px"><svg width="11" height="11" style="position:absolute;left:0;top:0"><path d="M1.5 5.5 L4.5 8.5 L10 2" fill="none" stroke="#333" stroke-width="1.1"/></svg></div>
<div class="t" style="left:140px;top:777px;font-family:'Liberation Mono', monospace;font-size:10.6px;transform:scaleX(0.9435);transform-origin:0 0;">8</div>
<div class="cb" style="left:161px;top:777px"><svg width="11" height="11" style="position:absolute;left:0;top:0"><path d="M1.5 5.5 L4.5 8.5 L10 2" fill="none" stroke="#333" stroke-width="1.1"/></svg></div>
<div class="t" style="left:180px;top:777px;font-family:'Liberation Mono', monospace;font-size:10.6px;transform:scaleX(0.9435);transform-origin:0 0;">35</div>
<div class="cb" style="left:206px;top:777px"><svg width="11" height="11" style="position:absolute;left:0;top:0"><path d="M1.5 5.5 L4.5 8.5 L10 2" fill="none" stroke="#333" stroke-width="1.1"/></svg></div>
<div class="t" style="left:225px;top:777px;font-family:'Liberation Mono', monospace;font-size:10.6px;transform:scaleX(0.9435);transform-origin:0 0;">32</div>
<div class="cb" style="left:251px;top:777px"><svg width="11" height="11" style="position:absolute;left:0;top:0"><path d="M1.5 5.5 L4.5 8.5 L10 2" fill="none" stroke="#333" stroke-width="1.1"/></svg></div>
<div class="t" style="left:270px;top:777px;font-family:'Liberation Mono', monospace;font-size:10.6px;transform:scaleX(0.9435);transform-origin:0 0;">60</div>
<div class="cb" style="left:296px;top:777px"><svg width="11" height="11" style="position:absolute;left:0;top:0"><path d="M1.5 5.5 L4.5 8.5 L10 2" fill="none" stroke="#333" stroke-width="1.1"/></svg></div>
<div class="t" style="left:315px;top:777px;font-family:'Liberation Mono', monospace;font-size:10.6px;transform:scaleX(0.9435);transform-origin:0 0;">64</div>
<div class="cb" style="left:341px;top:777px"><svg width="11" height="11" style="position:absolute;left:0;top:0"><path d="M1.5 5.5 L4.5 8.5 L10 2" fill="none" stroke="#333" stroke-width="1.1"/></svg></div>
<div class="t" style="left:360px;top:777px;font-family:'Liberation Mono', monospace;font-size:10.6px;transform:scaleX(0.9435);transform-origin:0 0;">00</div>
<div class="cb" style="left:386px;top:777px"><svg width="11" height="11" style="position:absolute;left:0;top:0"><path d="M1.5 5.5 L4.5 8.5 L10 2" fill="none" stroke="#333" stroke-width="1.1"/></svg></div>
<div class="t" style="left:405px;top:777px;font-family:'Liberation Mono', monospace;font-size:10.6px;transform:scaleX(0.9435);transform-origin:0 0;">00</div>
<div class="cb" style="left:431px;top:777px"><svg width="11" height="11" style="position:absolute;left:0;top:0"><path d="M1.5 5.5 L4.5 8.5 L10 2" fill="none" stroke="#333" stroke-width="1.1"/></svg></div>
<div class="t" style="left:450px;top:777px;font-family:'Liberation Mono', monospace;font-size:10.6px;transform:scaleX(0.9435);transform-origin:0 0;">00</div>
<div class="cb" style="left:476px;top:777px"><svg width="11" height="11" style="position:absolute;left:0;top:0"><path d="M1.5 5.5 L4.5 8.5 L10 2" fill="none" stroke="#333" stroke-width="1.1"/></svg></div>
<div class="t" style="left:495px;top:777px;font-family:'Liberation Mono', monospace;font-size:10.6px;transform:scaleX(0.9435);transform-origin:0 0;">00</div>
<div class="t" style="left:522px;top:777px;font-family:'Liberation Mono', monospace;font-size:10.6px;transform:scaleX(0.9435);transform-origin:0 0;">907</div>
<div style="position:absolute;left:27px;top:814px;width:540px;height:1px;background:#e0e0e0">
</div>
<div class="t" style="left:5px;top:798px;font-family:'Liberation Mono', monospace;font-size:10.6px;transform:scaleX(0.9435);transform-origin:0 0;">28</div>
<div class="cb" style="left:31px;top:798px"><svg width="11" height="11" style="position:absolute;left:0;top:0"><path d="M1.5 5.5 L4.5 8.5 L10 2" fill="none" stroke="#333" stroke-width="1.1"/></svg></div>
<div class="t" style="left:50px;top:798px;font-family:'Liberation Mono', monospace;font-size:10.6px;transform:scaleX(0.9438);transform-origin:0 0;">180700ec</div>
<div class="cb" style="left:121px;top:798px"><svg width="11" height="11" style="position:absolute;left:0;top:0"><path d="M1.5 5.5 L4.5 8.5 L10 2" fill="none" stroke="#333" stroke-width="1.1"/></svg></div>
<div class="t" style="left:140px;top:798px;font-family:'Liberation Mono', monospace;font-size:10.6px;transform:scaleX(0.9435);transform-origin:0 0;">8</div>
<div class="cb" style="left:161px;top:798px"><svg width="11" height="11" style="position:absolute;left:0;top:0"><path d="M1.5 5.5 L4.5 8.5 L10 2" fill="none" stroke="#333" stroke-width="1.1"/></svg></div>
<div class="t" style="left:180px;top:798px;font-family:'Liberation Mono', monospace;font-size:10.6px;transform:scaleX(0.9435);transform-origin:0 0;">00</div>
<div class="cb" style="left:206px;top:798px"><svg width="11" height="11" style="position:absolute;left:0;top:0"><path d="M1.5 5.5 L4.5 8.5 L10 2" fill="none" stroke="#333" stroke-width="1.1"/></svg></div>
<div class="t" style="left:225px;top:798px;font-family:'Liberation Mono', monospace;font-size:10.6px;transform:scaleX(0.9435);transform-origin:0 0;">00</div>
<div class="cb" style="left:251px;top:798px"><svg width="11" height="11" style="position:absolute;left:0;top:0"><path d="M1.5 5.5 L4.5 8.5 L10 2" fill="none" stroke="#333" stroke-width="1.1"/></svg></div>
<div class="t" style="left:270px;top:798px;font-family:'Liberation Mono', monospace;font-size:10.6px;transform:scaleX(0.9435);transform-origin:0 0;">00</div>
<div class="cb" style="left:296px;top:798px"><svg width="11" height="11" style="position:absolute;left:0;top:0"><path d="M1.5 5.5 L4.5 8.5 L10 2" fill="none" stroke="#333" stroke-width="1.1"/></svg></div>
<div class="t" style="left:315px;top:798px;font-family:'Liberation Mono', monospace;font-size:10.6px;transform:scaleX(0.9435);transform-origin:0 0;">00</div>
<div class="cb" style="left:341px;top:798px"><svg width="11" height="11" style="position:absolute;left:0;top:0"><path d="M1.5 5.5 L4.5 8.5 L10 2" fill="none" stroke="#333" stroke-width="1.1"/></svg></div>
<div class="t" style="left:360px;top:798px;font-family:'Liberation Mono', monospace;font-size:10.6px;transform:scaleX(0.9435);transform-origin:0 0;">00</div>
<div class="cb" style="left:386px;top:798px"><svg width="11" height="11" style="position:absolute;left:0;top:0"><path d="M1.5 5.5 L4.5 8.5 L10 2" fill="none" stroke="#333" stroke-width="1.1"/></svg></div>
<div class="t" style="left:405px;top:798px;font-family:'Liberation Mono', monospace;font-size:10.6px;transform:scaleX(0.9435);transform-origin:0 0;">00</div>
<div class="cb" style="left:431px;top:798px"><svg width="11" height="11" style="position:absolute;left:0;top:0"><path d="M1.5 5.5 L4.5 8.5 L10 2" fill="none" stroke="#333" stroke-width="1.1"/></svg></div>
<div class="t" style="left:450px;top:798px;font-family:'Liberation Mono', monospace;font-size:10.6px;transform:scaleX(0.9435);transform-origin:0 0;">19</div>
<div class="cb" style="left:476px;top:798px"><svg width="11" height="11" style="position:absolute;left:0;top:0"><path d="M1.5 5.5 L4.5 8.5 L10 2" fill="none" stroke="#333" stroke-width="1.1"/></svg></div>
<div class="t" style="left:495px;top:798px;font-family:'Liberation Mono', monospace;font-size:10.6px;transform:scaleX(0.9435);transform-origin:0 0;">01</div>
<div class="t" style="left:522px;top:798px;font-family:'Liberation Mono', monospace;font-size:10.6px;transform:scaleX(0.9435);transform-origin:0 0;">2420</div>
<div style="position:absolute;left:27px;top:835px;width:540px;height:1px;background:#e0e0e0">
</div>
<div class="t" style="left:5px;top:819px;font-family:'Liberation Mono', monospace;font-size:10.6px;transform:scaleX(0.9435);transform-origin:0 0;">29</div>
<div class="cb" style="left:31px;top:819px"><svg width="11" height="11" style="position:absolute;left:0;top:0"><path d="M1.5 5.5 L4.5 8.5 L10 2" fill="none" stroke="#333" stroke-width="1.1"/></svg></div>
<div class="t" style="left:50px;top:819px;font-family:'Liberation Mono', monospace;font-size:10.6px;transform:scaleX(0.9438);transform-origin:0 0;">18070110</div>
<div class="cb" style="left:121px;top:819px"><svg width="11" height="11" style="position:absolute;left:0;top:0"><path d="M1.5 5.5 L4.5 8.5 L10 2" fill="none" stroke="#333" stroke-width="1.1"/></svg></div>
<div class="t" style="left:140px;top:819px;font-family:'Liberation Mono', monospace;font-size:10.6px;transform:scaleX(0.9435);transform-origin:0 0;">8</div>
<div class="cb" style="left:161px;top:819px"><svg width="11" height="11" style="position:absolute;left:0;top:0"><path d="M1.5 5.5 L4.5 8.5 L10 2" fill="none" stroke="#333" stroke-width="1.1"/></svg></div>
<div class="t" style="left:180px;top:819px;font-family:'Liberation Mono', monospace;font-size:10.6px;transform:scaleX(0.9435);transform-origin:0 0;">1f</div>
<div class="cb" style="left:206px;top:819px"><svg width="11" height="11" style="position:absolute;left:0;top:0"><path d="M1.5 5.5 L4.5 8.5 L10 2" fill="none" stroke="#333" stroke-width="1.1"/></svg></div>
<div class="t" style="left:225px;top:819px;font-family:'Liberation Mono', monospace;font-size:10.6px;transform:scaleX(0.9435);transform-origin:0 0;">00</div>
<div class="cb" style="left:251px;top:819px"><svg width="11" height="11" style="position:absolute;left:0;top:0"><path d="M1.5 5.5 L4.5 8.5 L10 2" fill="none" stroke="#333" stroke-width="1.1"/></svg></div>
<div class="t" style="left:270px;top:819px;font-family:'Liberation Mono', monospace;font-size:10.6px;transform:scaleX(0.9435);transform-origin:0 0;">32</div>
<div class="cb" style="left:296px;top:819px"><svg width="11" height="11" style="position:absolute;left:0;top:0"><path d="M1.5 5.5 L4.5 8.5 L10 2" fill="none" stroke="#333" stroke-width="1.1"/></svg></div>
<div class="t" style="left:315px;top:819px;font-family:'Liberation Mono', monospace;font-size:10.6px;transform:scaleX(0.9435);transform-origin:0 0;">32</div>
<div class="cb" style="left:341px;top:819px"><svg width="11" height="11" style="position:absolute;left:0;top:0"><path d="M1.5 5.5 L4.5 8.5 L10 2" fill="none" stroke="#333" stroke-width="1.1"/></svg></div>
<div class="t" style="left:360px;top:819px;font-family:'Liberation Mono', monospace;font-size:10.6px;transform:scaleX(0.9435);transform-origin:0 0;">32</div>
<div class="cb" style="left:386px;top:819px"><svg width="11" height="11" style="position:absolute;left:0;top:0"><path d="M1.5 5.5 L4.5 8.5 L10 2" fill="none" stroke="#333" stroke-width="1.1"/></svg></div>
<div class="t" style="left:405px;top:819px;font-family:'Liberation Mono', monospace;font-size:10.6px;transform:scaleX(0.9435);transform-origin:0 0;">32</div>
<div class="cb" style="left:431px;top:819px"><svg width="11" height="11" style="position:absolute;left:0;top:0"><path d="M1.5 5.5 L4.5 8.5 L10 2" fill="none" stroke="#333" stroke-width="1.1"/></svg></div>
<div class="t" style="left:450px;top:819px;font-family:'Liberation Mono', monospace;font-size:10.6px;transform:scaleX(0.9435);transform-origin:0 0;">01</div>
<div class="cb" style="left:476px;top:819px"><svg width="11" height="11" style="position:absolute;left:0;top:0"><path d="M1.5 5.5 L4.5 8.5 L10 2" fill="none" stroke="#333" stroke-width="1.1"/></svg></div>
<div class="t" style="left:495px;top:819px;font-family:'Liberation Mono', monospace;font-size:10.6px;transform:scaleX(0.9435);transform-origin:0 0;">01</div>
<div class="t" style="left:522px;top:819px;font-family:'Liberation Mono', monospace;font-size:10.6px;transform:scaleX(0.9435);transform-origin:0 0;">2094</div>
<div style="position:absolute;left:27px;top:856px;width:540px;height:1px;background:#e0e0e0">
</div>
<div class="t" style="left:5px;top:840px;font-family:'Liberation Mono', monospace;font-size:10.6px;transform:scaleX(0.9435);transform-origin:0 0;">30</div>
<div class="cb" style="left:31px;top:840px"><svg width="11" height="11" style="position:absolute;left:0;top:0"><path d="M1.5 5.5 L4.5 8.5 L10 2" fill="none" stroke="#333" stroke-width="1.1"/></svg></div>
<div class="t" style="left:50px;top:840px;font-family:'Liberation Mono', monospace;font-size:10.6px;transform:scaleX(0.9438);transform-origin:0 0;">18070118</div>
<div class="cb" style="left:121px;top:840px"><svg width="11" height="11" style="position:absolute;left:0;top:0"><path d="M1.5 5.5 L4.5 8.5 L10 2" fill="none" stroke="#333" stroke-width="1.1"/></svg></div>
<div class="t" style="left:140px;top:840px;font-family:'Liberation Mono', monospace;font-size:10.6px;transform:scaleX(0.9435);transform-origin:0 0;">8</div>
<div class="cb" style="left:161px;top:840px"><svg width="11" height="11" style="position:absolute;left:0;top:0"><path d="M1.5 5.5 L4.5 8.5 L10 2" fill="none" stroke="#333" stroke-width="1.1"/></svg></div>
<div class="t" style="left:180px;top:840px;font-family:'Liberation Mono', monospace;font-size:10.6px;transform:scaleX(0.9435);transform-origin:0 0;">ff</div>
<div class="cb" style="left:206px;top:840px"><svg width="11" height="11" style="position:absolute;left:0;top:0"><path d="M1.5 5.5 L4.5 8.5 L10 2" fill="none" stroke="#333" stroke-width="1.1"/></svg></div>
<div class="t" style="left:225px;top:840px;font-family:'Liberation Mono', monospace;font-size:10.6px;transform:scaleX(0.9435);transform-origin:0 0;">ff</div>
<div class="cb" style="left:251px;top:840px"><svg width="11" height="11" style="position:absolute;left:0;top:0"><path d="M1.5 5.5 L4.5 8.5 L10 2" fill="none" stroke="#333" stroke-width="1.1"/></svg></div>
<div class="t" style="left:270px;top:840px;font-family:'Liberation Mono', monospace;font-size:10.6px;transform:scaleX(0.9435);transform-origin:0 0;">ff</div>
<div class="cb" style="left:296px;top:840px"><svg width="11" height="11" style="position:absolute;left:0;top:0"><path d="M1.5 5.5 L4.5 8.5 L10 2" fill="none" stroke="#333" stroke-width="1.1"/></svg></div>
<div class="t" style="left:315px;top:840px;font-family:'Liberation Mono', monospace;font-size:10.6px;transform:scaleX(0.9435);transform-origin:0 0;">ff</div>
<div class="cb" style="left:341px;top:840px"><svg width="11" height="11" style="position:absolute;left:0;top:0"><path d="M1.5 5.5 L4.5 8.5 L10 2" fill="none" stroke="#333" stroke-width="1.1"/></svg></div>
<div class="t" style="left:360px;top:840px;font-family:'Liberation Mono', monospace;font-size:10.6px;transform:scaleX(0.9435);transform-origin:0 0;">ff</div>
<div class="cb" style="left:386px;top:840px"><svg width="11" height="11" style="position:absolute;left:0;top:0"><path d="M1.5 5.5 L4.5 8.5 L10 2" fill="none" stroke="#333" stroke-width="1.1"/></svg></div>
<div class="t" style="left:405px;top:840px;font-family:'Liberation Mono', monospace;font-size:10.6px;transform:scaleX(0.9435);transform-origin:0 0;">ff</div>
<div class="cb" style="left:431px;top:840px"><svg width="11" height="11" style="position:absolute;left:0;top:0"><path d="M1.5 5.5 L4.5 8.5 L10 2" fill="none" stroke="#333" stroke-width="1.1"/></svg></div>
<div class="t" style="left:450px;top:840px;font-family:'Liberation Mono', monospace;font-size:10.6px;transform:scaleX(0.9435);transform-origin:0 0;">ff</div>
<div class="cb" style="left:476px;top:840px"><svg width="11" height="11" style="position:absolute;left:0;top:0"><path d="M1.5 5.5 L4.5 8.5 L10 2" fill="none" stroke="#333" stroke-width="1.1"/></svg></div>
<div class="t" style="left:495px;top:840px;font-family:'Liberation Mono', monospace;font-size:10.6px;transform:scaleX(0.9435);transform-origin:0 0;">ff</div>
<div class="t" style="left:522px;top:840px;font-family:'Liberation Mono', monospace;font-size:10.6px;transform:scaleX(0.9435);transform-origin:0 0;">8277</div>
<div style="position:absolute;left:27px;top:877px;width:540px;height:1px;background:#e0e0e0">
</div>
<div class="t" style="left:5px;top:861px;font-family:'Liberation Mono', monospace;font-size:10.6px;transform:scaleX(0.9435);transform-origin:0 0;">31</div>
<div class="cb" style="left:31px;top:861px"><svg width="11" height="11" style="position:absolute;left:0;top:0"><path d="M1.5 5.5 L4.5 8.5 L10 2" fill="none" stroke="#333" stroke-width="1.1"/></svg></div>
<div class="t" style="left:50px;top:861px;font-family:'Liberation Mono', monospace;font-size:10.6px;transform:scaleX(0.9438);transform-origin:0 0;">18070130</div>
<div class="cb" style="left:121px;top:861px"><svg width="11" height="11" style="position:absolute;left:0;top:0"><path d="M1.5 5.5 L4.5 8.5 L10 2" fill="none" stroke="#333" stroke-width="1.1"/></svg></div>
<div class="t" style="left:140px;top:861px;font-family:'Liberation Mono', monospace;font-size:10.6px;transform:scaleX(0.9435);transform-origin:0 0;">8</div>
<div class="cb" style="left:161px;top:861px"><svg width="11" height="11" style="position:absolute;left:0;top:0"><path d="M1.5 5.5 L4.5 8.5 L10 2" fill="none" stroke="#333" stroke-width="1.1"/></svg></div>
<div class="t" style="left:180px;top:861px;font-family:'Liberation Mono', monospace;font-size:10.6px;transform:scaleX(0.9435);transform-origin:0 0;">ff</div>
<div class="cb" style="left:206px;top:861px"><svg width="11" height="11" style="position:absolute;left:0;top:0"><path d="M1.5 5.5 L4.5 8.5 L10 2" fill="none" stroke="#333" stroke-width="1.1"/></svg></div>
<div class="t" style="left:225px;top:861px;font-family:'Liberation Mono', monospace;font-size:10.6px;transform:scaleX(0.9435);transform-origin:0 0;">ff</div>
<div class="cb" style="left:251px;top:861px"><svg width="11" height="11" style="position:absolute;left:0;top:0"><path d="M1.5 5.5 L4.5 8.5 L10 2" fill="none" stroke="#333" stroke-width="1.1"/></svg></div>
<div class="t" style="left:270px;top:861px;font-family:'Liberation Mono', monospace;font-size:10.6px;transform:scaleX(0.9435);transform-origin:0 0;">ff</div>
<div class="cb" style="left:296px;top:861px"><svg width="11" height="11" style="position:absolute;left:0;top:0"><path d="M1.5 5.5 L4.5 8.5 L10 2" fill="none" stroke="#333" stroke-width="1.1"/></svg></div>
<div class="t" style="left:315px;top:861px;font-family:'Liberation Mono', monospace;font-size:10.6px;transform:scaleX(0.9435);transform-origin:0 0;">ff</div>
<div class="cb" style="left:341px;top:861px"><svg width="11" height="11" style="position:absolute;left:0;top:0"><path d="M1.5 5.5 L4.5 8.5 L10 2" fill="none" stroke="#333" stroke-width="1.1"/></svg></div>
<div class="t" style="left:360px;top:861px;font-family:'Liberation Mono', monospace;font-size:10.6px;transform:scaleX(0.9435);transform-origin:0 0;">ff</div>
<div class="cb" style="left:386px;top:861px"><svg width="11" height="11" style="position:absolute;left:0;top:0"><path d="M1.5 5.5 L4.5 8.5 L10 2" fill="none" stroke="#333" stroke-width="1.1"/></svg></div>
<div class="t" style="left:405px;top:861px;font-family:'Liberation Mono', monospace;font-size:10.6px;transform:scaleX(0.9435);transform-origin:0 0;">ff</div>
<div class="cb" style="left:431px;top:861px"><svg width="11" height="11" style="position:absolute;left:0;top:0"><path d="M1.5 5.5 L4.5 8.5 L10 2" fill="none" stroke="#333" stroke-width="1.1"/></svg></div>
<div class="t" style="left:450px;top:861px;font-family:'Liberation Mono', monospace;font-size:10.6px;transform:scaleX(0.9435);transform-origin:0 0;">ff</div>
<div class="cb" style="left:476px;top:861px"><svg width="11" height="11" style="position:absolute;left:0;top:0"><path d="M1.5 5.5 L4.5 8.5 L10 2" fill="none" stroke="#333" stroke-width="1.1"/></svg></div>
<div class="t" style="left:495px;top:861px;font-family:'Liberation Mono', monospace;font-size:10.6px;transform:scaleX(0.9435);transform-origin:0 0;">ff</div>
<div class="t" style="left:522px;top:861px;font-family:'Liberation Mono', monospace;font-size:10.6px;transform:scaleX(0.9435);transform-origin:0 0;">719</div>
<div style="position:absolute;left:27px;top:898px;width:540px;height:1px;background:#e0e0e0">
</div>
<div class="t" style="left:5px;top:882px;font-family:'Liberation Mono', monospace;font-size:10.6px;transform:scaleX(0.9435);transform-origin:0 0;">32</div>
<div class="cb" style="left:31px;top:882px"><svg width="11" height="11" style="position:absolute;left:0;top:0"><path d="M1.5 5.5 L4.5 8.5 L10 2" fill="none" stroke="#333" stroke-width="1.1"/></svg></div>
<div class="t" style="left:50px;top:882px;font-family:'Liberation Mono', monospace;font-size:10.6px;transform:scaleX(0.9438);transform-origin:0 0;">18070134</div>
<div class="cb" style="left:121px;top:882px"><svg width="11" height="11" style="position:absolute;left:0;top:0"><path d="M1.5 5.5 L4.5 8.5 L10 2" fill="none" stroke="#333" stroke-width="1.1"/></svg></div>
<div class="t" style="left:140px;top:882px;font-family:'Liberation Mono', monospace;font-size:10.6px;transform:scaleX(0.9435);transform-origin:0 0;">8</div>
<div class="cb" style="left:161px;top:882px"><svg width="11" height="11" style="position:absolute;left:0;top:0"><path d="M1.5 5.5 L4.5 8.5 L10 2" fill="none" stroke="#333" stroke-width="1.1"/></svg></div>
<div class="t" style="left:180px;top:882px;font-family:'Liberation Mono', monospace;font-size:10.6px;transform:scaleX(0.9435);transform-origin:0 0;">38</div>
<div class="cb" style="left:206px;top:882px"><svg width="11" height="11" style="position:absolute;left:0;top:0"><path d="M1.5 5.5 L4.5 8.5 L10 2" fill="none" stroke="#333" stroke-width="1.1"/></svg></div>
<div class="t" style="left:225px;top:882px;font-family:'Liberation Mono', monospace;font-size:10.6px;transform:scaleX(0.9435);transform-origin:0 0;">04</div>
<div class="cb" style="left:251px;top:882px"><svg width="11" height="11" style="position:absolute;left:0;top:0"><path d="M1.5 5.5 L4.5 8.5 L10 2" fill="none" stroke="#333" stroke-width="1.1"/></svg></div>
<div class="t" style="left:270px;top:882px;font-family:'Liberation Mono', monospace;font-size:10.6px;transform:scaleX(0.9435);transform-origin:0 0;">29</div>
<div class="cb" style="left:296px;top:882px"><svg width="11" height="11" style="position:absolute;left:0;top:0"><path d="M1.5 5.5 L4.5 8.5 L10 2" fill="none" stroke="#333" stroke-width="1.1"/></svg></div>
<div class="t" style="left:315px;top:882px;font-family:'Liberation Mono', monospace;font-size:10.6px;transform:scaleX(0.9435);transform-origin:0 0;">04</div>
<div class="cb" style="left:341px;top:882px"><svg width="11" height="11" style="position:absolute;left:0;top:0"><path d="M1.5 5.5 L4.5 8.5 L10 2" fill="none" stroke="#333" stroke-width="1.1"/></svg></div>
<div class="t" style="left:360px;top:882px;font-family:'Liberation Mono', monospace;font-size:10.6px;transform:scaleX(0.9435);transform-origin:0 0;">e8</div>
<div class="cb" style="left:386px;top:882px"><svg width="11" height="11" style="position:absolute;left:0;top:0"><path d="M1.5 5.5 L4.5 8.5 L10 2" fill="none" stroke="#333" stroke-width="1.1"/></svg></div>
<div class="t" style="left:405px;top:882px;font-family:'Liberation Mono', monospace;font-size:10.6px;transform:scaleX(0.9435);transform-origin:0 0;">03</div>
<div class="cb" style="left:431px;top:882px"><svg width="11" height="11" style="position:absolute;left:0;top:0"><path d="M1.5 5.5 L4.5 8.5 L10 2" fill="none" stroke="#333" stroke-width="1.1"/></svg></div>
<div class="t" style="left:450px;top:882px;font-family:'Liberation Mono', monospace;font-size:10.6px;transform:scaleX(0.9435);transform-origin:0 0;">fc</div>
<div class="cb" style="left:476px;top:882px"><svg width="11" height="11" style="position:absolute;left:0;top:0"><path d="M1.5 5.5 L4.5 8.5 L10 2" fill="none" stroke="#333" stroke-width="1.1"/></svg></div>
<div class="t" style="left:495px;top:882px;font-family:'Liberation Mono', monospace;font-size:10.6px;transform:scaleX(0.9435);transform-origin:0 0;">03</div>
<div class="t" style="left:522px;top:882px;font-family:'Liberation Mono', monospace;font-size:10.6px;transform:scaleX(0.9435);transform-origin:0 0;">5788</div>
<div style="position:absolute;left:27px;top:919px;width:540px;height:1px;background:#e0e0e0">
</div>
<div class="t" style="left:5px;top:903px;font-family:'Liberation Mono', monospace;font-size:10.6px;transform:scaleX(0.9435);transform-origin:0 0;">33</div>
<div class="cb" style="left:31px;top:903px"><svg width="11" height="11" style="position:absolute;left:0;top:0"><path d="M1.5 5.5 L4.5 8.5 L10 2" fill="none" stroke="#333" stroke-width="1.1"/></svg></div>
<div class="t" style="left:50px;top:903px;font-family:'Liberation Mono', monospace;font-size:10.6px;transform:scaleX(0.9438);transform-origin:0 0;">1807014c</div>
<div class="cb" style="left:121px;top:903px"><svg width="11" height="11" style="position:absolute;left:0;top:0"><path d="M1.5 5.5 L4.5 8.5 L10 2" fill="none" stroke="#333" stroke-width="1.1"/></svg></div>
<div class="t" style="left:140px;top:903px;font-family:'Liberation Mono', monospace;font-size:10.6px;transform:scaleX(0.9435);transform-origin:0 0;">8</div>
<div class="cb" style="left:161px;top:903px"><svg width="11" height="11" style="position:absolute;left:0;top:0"><path d="M1.5 5.5 L4.5 8.5 L10 2" fill="none" stroke="#333" stroke-width="1.1"/></svg></div>
<div class="t" style="left:180px;top:903px;font-family:'Liberation Mono', monospace;font-size:10.6px;transform:scaleX(0.9435);transform-origin:0 0;">00</div>
<div class="cb" style="left:206px;top:903px"><svg width="11" height="11" style="position:absolute;left:0;top:0"><path d="M1.5 5.5 L4.5 8.5 L10 2" fill="none" stroke="#333" stroke-width="1.1"/></svg></div>
<div class="t" style="left:225px;top:903px;font-family:'Liberation Mono', monospace;font-size:10.6px;transform:scaleX(0.9435);transform-origin:0 0;">00</div>
<div class="cb" style="left:251px;top:903px"><svg width="11" height="11" style="position:absolute;left:0;top:0"><path d="M1.5 5.5 L4.5 8.5 L10 2" fill="none" stroke="#333" stroke-width="1.1"/></svg></div>
<div class="t" style="left:270px;top:903px;font-family:'Liberation Mono', monospace;font-size:10.6px;transform:scaleX(0.9435);transform-origin:0 0;">00</div>
<div class="cb" style="left:296px;top:903px"><svg width="11" height="11" style="position:absolute;left:0;top:0"><path d="M1.5 5.5 L4.5 8.5 L10 2" fill="none" stroke="#333" stroke-width="1.1"/></svg></div>
<div class="t" style="left:315px;top:903px;font-family:'Liberation Mono', monospace;font-size:10.6px;transform:scaleX(0.9435);transform-origin:0 0;">00</div>
<div class="cb" style="left:341px;top:903px"><svg width="11" height="11" style="position:absolute;left:0;top:0"><path d="M1.5 5.5 L4.5 8.5 L10 2" fill="none" stroke="#333" stroke-width="1.1"/></svg></div>
<div class="t" style="left:360px;top:903px;font-family:'Liberation Mono', monospace;font-size:10.6px;transform:scaleX(0.9435);transform-origin:0 0;">00</div>
<div class="cb" style="left:386px;top:903px"><svg width="11" height="11" style="position:absolute;left:0;top:0"><path d="M1.5 5.5 L4.5 8.5 L10 2" fill="none" stroke="#333" stroke-width="1.1"/></svg></div>
<div class="t" style="left:405px;top:903px;font-family:'Liberation Mono', monospace;font-size:10.6px;transform:scaleX(0.9435);transform-origin:0 0;">00</div>
<div class="cb" style="left:431px;top:903px"><svg width="11" height="11" style="position:absolute;left:0;top:0"><path d="M1.5 5.5 L4.5 8.5 L10 2" fill="none" stroke="#333" stroke-width="1.1"/></svg></div>
<div class="t" style="left:450px;top:903px;font-family:'Liberation Mono', monospace;font-size:10.6px;transform:scaleX(0.9435);transform-origin:0 0;">00</div>
<div class="cb" style="left:476px;top:903px"><svg width="11" height="11" style="position:absolute;left:0;top:0"><path d="M1.5 5.5 L4.5 8.5 L10 2" fill="none" stroke="#333" stroke-width="1.1"/></svg></div>
<div class="t" style="left:495px;top:903px;font-family:'Liberation Mono', monospace;font-size:10.6px;transform:scaleX(0.9435);transform-origin:0 0;">00</div>
<div class="t" style="left:522px;top:903px;font-family:'Liberation Mono', monospace;font-size:10.6px;transform:scaleX(0.9435);transform-origin:0 0;">2105</div>
<div style="position:absolute;left:27px;top:940px;width:540px;height:1px;background:#e0e0e0">
</div>
<div class="t" style="left:5px;top:924px;font-family:'Liberation Mono', monospace;font-size:10.6px;transform:scaleX(0.9435);transform-origin:0 0;">34</div>
<div class="cb" style="left:31px;top:924px"><svg width="11" height="11" style="position:absolute;left:0;top:0"><path d="M1.5 5.5 L4.5 8.5 L10 2" fill="none" stroke="#333" stroke-width="1.1"/></svg></div>
<div class="t" style="left:50px;top:924px;font-family:'Liberation Mono', monospace;font-size:10.6px;transform:scaleX(0.9438);transform-origin:0 0;">1807016c</div>
<div class="cb" style="left:121px;top:924px"><svg width="11" height="11" style="position:absolute;left:0;top:0"><path d="M1.5 5.5 L4.5 8.5 L10 2" fill="none" stroke="#333" stroke-width="1.1"/></svg></div>
<div class="t" style="left:140px;top:924px;font-family:'Liberation Mono', monospace;font-size:10.6px;transform:scaleX(0.9435);transform-origin:0 0;">8</div>
<div class="cb" style="left:161px;top:924px"><svg width="11" height="11" style="position:absolute;left:0;top:0"><path d="M1.5 5.5 L4.5 8.5 L10 2" fill="none" stroke="#333" stroke-width="1.1"/></svg></div>
<div class="t" style="left:180px;top:924px;font-family:'Liberation Mono', monospace;font-size:10.6px;transform:scaleX(0.9435);transform-origin:0 0;">00</div>
<div class="cb" style="left:206px;top:924px"><svg width="11" height="11" style="position:absolute;left:0;top:0"><path d="M1.5 5.5 L4.5 8.5 L10 2" fill="none" stroke="#333" stroke-width="1.1"/></svg></div>
<div class="t" style="left:225px;top:924px;font-family:'Liberation Mono', monospace;font-size:10.6px;transform:scaleX(0.9435);transform-origin:0 0;">00</div>
<div class="cb" style="left:251px;top:924px"><svg width="11" height="11" style="position:absolute;left:0;top:0"><path d="M1.5 5.5 L4.5 8.5 L10 2" fill="none" stroke="#333" stroke-width="1.1"/></svg></div>
<div class="t" style="left:270px;top:924px;font-family:'Liberation Mono', monospace;font-size:10.6px;transform:scaleX(0.9435);transform-origin:0 0;">00</div>
<div class="cb" style="left:296px;top:924px"><svg width="11" height="11" style="position:absolute;left:0;top:0"><path d="M1.5 5.5 L4.5 8.5 L10 2" fill="none" stroke="#333" stroke-width="1.1"/></svg></div>
<div class="t" style="left:315px;top:924px;font-family:'Liberation Mono', monospace;font-size:10.6px;transform:scaleX(0.9435);transform-origin:0 0;">00</div>
<div class="cb" style="left:341px;top:924px"><svg width="11" height="11" style="position:absolute;left:0;top:0"><path d="M1.5 5.5 L4.5 8.5 L10 2" fill="none" stroke="#333" stroke-width="1.1"/></svg></div>
<div class="t" style="left:360px;top:924px;font-family:'Liberation Mono', monospace;font-size:10.6px;transform:scaleX(0.9435);transform-origin:0 0;">00</div>
<div class="cb" style="left:386px;top:924px"><svg width="11" height="11" style="position:absolute;left:0;top:0"><path d="M1.5 5.5 L4.5 8.5 L10 2" fill="none" stroke="#333" stroke-width="1.1"/></svg></div>
<div class="t" style="left:405px;top:924px;font-family:'Liberation Mono', monospace;font-size:10.6px;transform:scaleX(0.9435);transform-origin:0 0;">00</div>
<div class="cb" style="left:431px;top:924px"><svg width="11" height="11" style="position:absolute;left:0;top:0"><path d="M1.5 5.5 L4.5 8.5 L10 2" fill="none" stroke="#333" stroke-width="1.1"/></svg></div>
<div class="t" style="left:450px;top:924px;font-family:'Liberation Mono', monospace;font-size:10.6px;transform:scaleX(0.9435);transform-origin:0 0;">00</div>
<div class="cb" style="left:476px;top:924px"><svg width="11" height="11" style="position:absolute;left:0;top:0"><path d="M1.5 5.5 L4.5 8.5 L10 2" fill="none" stroke="#333" stroke-width="1.1"/></svg></div>
<div class="t" style="left:495px;top:924px;font-family:'Liberation Mono', monospace;font-size:10.6px;transform:scaleX(0.9435);transform-origin:0 0;">00</div>
<div class="t" style="left:522px;top:924px;font-family:'Liberation Mono', monospace;font-size:10.6px;transform:scaleX(0.9435);transform-origin:0 0;">5406</div>
<div style="position:absolute;left:27px;top:961px;width:540px;height:1px;background:#e0e0e0">
</div>
<div class="t" style="left:5px;top:945px;font-family:'Liberation Mono', monospace;font-size:10.6px;transform:scaleX(0.9435);transform-origin:0 0;">35</div>
<div class="cb" style="left:31px;top:945px"><svg width="11" height="11" style="position:absolute;left:0;top:0"><path d="M1.5 5.5 L4.5 8.5 L10 2" fill="none" stroke="#333" stroke-width="1.1"/></svg></div>
<div class="t" style="left:50px;top:945px;font-family:'Liberation Mono', monospace;font-size:10.6px;transform:scaleX(0.9438);transform-origin:0 0;">18050066</div>
<div class="cb" style="left:121px;top:945px"><svg width="11" height="11" style="position:absolute;left:0;top:0"><path d="M1.5 5.5 L4.5 8.5 L10 2" fill="none" stroke="#333" stroke-width="1.1"/></svg></div>
<div class="t" style="left:140px;top:945px;font-family:'Liberation Mono', monospace;font-size:10.6px;transform:scaleX(0.9435);transform-origin:0 0;">8</div>
<div class="cb" style="left:161px;top:945px"><svg width="11" height="11" style="position:absolute;left:0;top:0"><path d="M1.5 5.5 L4.5 8.5 L10 2" fill="none" stroke="#333" stroke-width="1.1"/></svg></div>
<div class="t" style="left:180px;top:945px;font-family:'Liberation Mono', monospace;font-size:10.6px;transform:scaleX(0.9435);transform-origin:0 0;">20</div>
<div class="cb" style="left:206px;top:945px"><svg width="11" height="11" style="position:absolute;left:0;top:0"><path d="M1.5 5.5 L4.5 8.5 L10 2" fill="none" stroke="#333" stroke-width="1.1"/></svg></div>
<div class="t" style="left:225px;top:945px;font-family:'Liberation Mono', monospace;font-size:10.6px;transform:scaleX(0.9435);transform-origin:0 0;">00</div>
<div class="cb" style="left:251px;top:945px"><svg width="11" height="11" style="position:absolute;left:0;top:0"><path d="M1.5 5.5 L4.5 8.5 L10 2" fill="none" stroke="#333" stroke-width="1.1"/></svg></div>
<div class="t" style="left:270px;top:945px;font-family:'Liberation Mono', monospace;font-size:10.6px;transform:scaleX(0.9435);transform-origin:0 0;">7e</div>
<div class="cb" style="left:296px;top:945px"><svg width="11" height="11" style="position:absolute;left:0;top:0"><path d="M1.5 5.5 L4.5 8.5 L10 2" fill="none" stroke="#333" stroke-width="1.1"/></svg></div>
<div class="t" style="left:315px;top:945px;font-family:'Liberation Mono', monospace;font-size:10.6px;transform:scaleX(0.9435);transform-origin:0 0;">04</div>
<div class="cb" style="left:341px;top:945px"><svg width="11" height="11" style="position:absolute;left:0;top:0"><path d="M1.5 5.5 L4.5 8.5 L10 2" fill="none" stroke="#333" stroke-width="1.1"/></svg></div>
<div class="t" style="left:360px;top:945px;font-family:'Liberation Mono', monospace;font-size:10.6px;transform:scaleX(0.9435);transform-origin:0 0;">10</div>
<div class="cb" style="left:386px;top:945px"><svg width="11" height="11" style="position:absolute;left:0;top:0"><path d="M1.5 5.5 L4.5 8.5 L10 2" fill="none" stroke="#333" stroke-width="1.1"/></svg></div>
<div class="t" style="left:405px;top:945px;font-family:'Liberation Mono', monospace;font-size:10.6px;transform:scaleX(0.9435);transform-origin:0 0;">27</div>
<div class="cb" style="left:431px;top:945px"><svg width="11" height="11" style="position:absolute;left:0;top:0"><path d="M1.5 5.5 L4.5 8.5 L10 2" fill="none" stroke="#333" stroke-width="1.1"/></svg></div>
<div class="t" style="left:450px;top:945px;font-family:'Liberation Mono', monospace;font-size:10.6px;transform:scaleX(0.9435);transform-origin:0 0;">10</div>
<div class="cb" style="left:476px;top:945px"><svg width="11" height="11" style="position:absolute;left:0;top:0"><path d="M1.5 5.5 L4.5 8.5 L10 2" fill="none" stroke="#333" stroke-width="1.1"/></svg></div>
<div class="t" style="left:495px;top:945px;font-family:'Liberation Mono', monospace;font-size:10.6px;transform:scaleX(0.9435);transform-origin:0 0;">27</div>
<div class="t" style="left:522px;top:945px;font-family:'Liberation Mono', monospace;font-size:10.6px;transform:scaleX(0.9435);transform-origin:0 0;">796</div>
<div style="position:absolute;left:27px;top:982px;width:540px;height:1px;background:#e0e0e0">
</div>
<div class="t" style="left:5px;top:966px;font-family:'Liberation Mono', monospace;font-size:10.6px;transform:scaleX(0.9435);transform-origin:0 0;">36</div>
<div class="cb" style="left:31px;top:966px"><svg width="11" height="11" style="position:absolute;left:0;top:0"><path d="M1.5 5.5 L4.5 8.5 L10 2" fill="none" stroke="#333" stroke-width="1.1"/></svg></div>
<div class="t" style="left:50px;top:966px;font-family:'Liberation Mono', monospace;font-size:10.6px;transform:scaleX(0.9438);transform-origin:0 0;">180500cc</div>
<div class="cb" style="left:121px;top:966px"><svg width="11" height="11" style="position:absolute;left:0;top:0"><path d="M1.5 5.5 L4.5 8.5 L10 2" fill="none" stroke="#333" stroke-width="1.1"/></svg></div>
<div class="t" style="left:140px;top:966px;font-family:'Liberation Mono', monospace;font-size:10.6px;transform:scaleX(0.9435);transform-origin:0 0;">8</div>
<div class="cb" style="left:161px;top:966px"><svg width="11" height="11" style="position:absolute;left:0;top:0"><path d="M1.5 5.5 L4.5 8.5 L10 2" fill="none" stroke="#333" stroke-width="1.1"/></svg></div>
<div class="t" style="left:180px;top:966px;font-family:'Liberation Mono', monospace;font-size:10.6px;transform:scaleX(0.9435);transform-origin:0 0;">00</div>
<div class="cb" style="left:206px;top:966px"><svg width="11" height="11" style="position:absolute;left:0;top:0"><path d="M1.5 5.5 L4.5 8.5 L10 2" fill="none" stroke="#333" stroke-width="1.1"/></svg></div>
<div class="t" style="left:225px;top:966px;font-family:'Liberation Mono', monospace;font-size:10.6px;transform:scaleX(0.9435);transform-origin:0 0;">00</div>
<div class="cb" style="left:251px;top:966px"><svg width="11" height="11" style="position:absolute;left:0;top:0"><path d="M1.5 5.5 L4.5 8.5 L10 2" fill="none" stroke="#333" stroke-width="1.1"/></svg></div>
<div class="t" style="left:270px;top:966px;font-family:'Liberation Mono', monospace;font-size:10.6px;transform:scaleX(0.9435);transform-origin:0 0;">00</div>
<div class="cb" style="left:296px;top:966px"><svg width="11" height="11" style="position:absolute;left:0;top:0"><path d="M1.5 5.5 L4.5 8.5 L10 2" fill="none" stroke="#333" stroke-width="1.1"/></svg></div>
<div class="t" style="left:315px;top:966px;font-family:'Liberation Mono', monospace;font-size:10.6px;transform:scaleX(0.9435);transform-origin:0 0;">00</div>
<div class="cb" style="left:341px;top:966px"><svg width="11" height="11" style="position:absolute;left:0;top:0"><path d="M1.5 5.5 L4.5 8.5 L10 2" fill="none" stroke="#333" stroke-width="1.1"/></svg></div>
<div class="t" style="left:360px;top:966px;font-family:'Liberation Mono', monospace;font-size:10.6px;transform:scaleX(0.9435);transform-origin:0 0;">00</div>
<div class="cb" style="left:386px;top:966px"><svg width="11" height="11" style="position:absolute;left:0;top:0"><path d="M1.5 5.5 L4.5 8.5 L10 2" fill="none" stroke="#333" stroke-width="1.1"/></svg></div>
<div class="t" style="left:405px;top:966px;font-family:'Liberation Mono', monospace;font-size:10.6px;transform:scaleX(0.9435);transform-origin:0 0;">00</div>
<div class="cb" style="left:431px;top:966px"><svg width="11" height="11" style="position:absolute;left:0;top:0"><path d="M1.5 5.5 L4.5 8.5 L10 2" fill="none" stroke="#333" stroke-width="1.1"/></svg></div>
<div class="t" style="left:450px;top:966px;font-family:'Liberation Mono', monospace;font-size:10.6px;transform:scaleX(0.9435);transform-origin:0 0;">00</div>
<div class="cb" style="left:476px;top:966px"><svg width="11" height="11" style="position:absolute;left:0;top:0"><path d="M1.5 5.5 L4.5 8.5 L10 2" fill="none" stroke="#333" stroke-width="1.1"/></svg></div>
<div class="t" style="left:495px;top:966px;font-family:'Liberation Mono', monospace;font-size:10.6px;transform:scaleX(0.9435);transform-origin:0 0;">00</div>
<div class="t" style="left:522px;top:966px;font-family:'Liberation Mono', monospace;font-size:10.6px;transform:scaleX(0.9435);transform-origin:0 0;">320</div>
<div style="position:absolute;left:27px;top:1003px;width:540px;height:1px;background:#e0e0e0">
</div>
<div class="t" style="left:5px;top:987px;font-family:'Liberation Mono', monospace;font-size:10.6px;transform:scaleX(0.9435);transform-origin:0 0;">37</div>
<div class="cb" style="left:31px;top:987px"><svg width="11" height="11" style="position:absolute;left:0;top:0"><path d="M1.5 5.5 L4.5 8.5 L10 2" fill="none" stroke="#333" stroke-width="1.1"/></svg></div>
<div class="t" style="left:50px;top:987px;font-family:'Liberation Mono', monospace;font-size:10.6px;transform:scaleX(0.9438);transform-origin:0 0;">1805012e</div>
<div class="cb" style="left:121px;top:987px"><svg width="11" height="11" style="position:absolute;left:0;top:0"><path d="M1.5 5.5 L4.5 8.5 L10 2" fill="none" stroke="#333" stroke-width="1.1"/></svg></div>
<div class="t" style="left:140px;top:987px;font-family:'Liberation Mono', monospace;font-size:10.6px;transform:scaleX(0.9435);transform-origin:0 0;">8</div>
<div class="cb" style="left:161px;top:987px"><svg width="11" height="11" style="position:absolute;left:0;top:0"><path d="M1.5 5.5 L4.5 8.5 L10 2" fill="none" stroke="#333" stroke-width="1.1"/></svg></div>
<div class="t" style="left:180px;top:987px;font-family:'Liberation Mono', monospace;font-size:10.6px;transform:scaleX(0.9435);transform-origin:0 0;">5e</div>
<div class="cb" style="left:206px;top:987px"><svg width="11" height="11" style="position:absolute;left:0;top:0"><path d="M1.5 5.5 L4.5 8.5 L10 2" fill="none" stroke="#333" stroke-width="1.1"/></svg></div>
<div class="t" style="left:225px;top:987px;font-family:'Liberation Mono', monospace;font-size:10.6px;transform:scaleX(0.9435);transform-origin:0 0;">01</div>
<div class="cb" style="left:251px;top:987px"><svg width="11" height="11" style="position:absolute;left:0;top:0"><path d="M1.5 5.5 L4.5 8.5 L10 2" fill="none" stroke="#333" stroke-width="1.1"/></svg></div>
<div class="t" style="left:270px;top:987px;font-family:'Liberation Mono', monospace;font-size:10.6px;transform:scaleX(0.9435);transform-origin:0 0;">5e</div>
<div class="cb" style="left:296px;top:987px"><svg width="11" height="11" style="position:absolute;left:0;top:0"><path d="M1.5 5.5 L4.5 8.5 L10 2" fill="none" stroke="#333" stroke-width="1.1"/></svg></div>
<div class="t" style="left:315px;top:987px;font-family:'Liberation Mono', monospace;font-size:10.6px;transform:scaleX(0.9435);transform-origin:0 0;">01</div>
<div class="cb" style="left:341px;top:987px"><svg width="11" height="11" style="position:absolute;left:0;top:0"><path d="M1.5 5.5 L4.5 8.5 L10 2" fill="none" stroke="#333" stroke-width="1.1"/></svg></div>
<div class="t" style="left:360px;top:987px;font-family:'Liberation Mono', monospace;font-size:10.6px;transform:scaleX(0.9435);transform-origin:0 0;">00</div>
<div class="cb" style="left:386px;top:987px"><svg width="11" height="11" style="position:absolute;left:0;top:0"><path d="M1.5 5.5 L4.5 8.5 L10 2" fill="none" stroke="#333" stroke-width="1.1"/></svg></div>
<div class="t" style="left:405px;top:987px;font-family:'Liberation Mono', monospace;font-size:10.6px;transform:scaleX(0.9435);transform-origin:0 0;">00</div>
<div class="cb" style="left:431px;top:987px"><svg width="11" height="11" style="position:absolute;left:0;top:0"><path d="M1.5 5.5 L4.5 8.5 L10 2" fill="none" stroke="#333" stroke-width="1.1"/></svg></div>
<div class="t" style="left:450px;top:987px;font-family:'Liberation Mono', monospace;font-size:10.6px;transform:scaleX(0.9435);transform-origin:0 0;">00</div>
<div class="cb" style="left:476px;top:987px"><svg width="11" height="11" style="position:absolute;left:0;top:0"><path d="M1.5 5.5 L4.5 8.5 L10 2" fill="none" stroke="#333" stroke-width="1.1"/></svg></div>
<div class="t" style="left:495px;top:987px;font-family:'Liberation Mono', monospace;font-size:10.6px;transform:scaleX(0.9435);transform-origin:0 0;">00</div>
<div class="t" style="left:522px;top:987px;font-family:'Liberation Mono', monospace;font-size:10.6px;transform:scaleX(0.9435);transform-origin:0 0;">397</div>
<div style="position:absolute;left:27px;top:1024px;width:540px;height:1px;background:#e0e0e0">
</div>
<div class="t" style="left:5px;top:1008px;font-family:'Liberation Mono', monospace;font-size:10.6px;transform:scaleX(0.9435);transform-origin:0 0;">38</div>
<div class="cb" style="left:31px;top:1008px"><svg width="11" height="11" style="position:absolute;left:0;top:0"><path d="M1.5 5.5 L4.5 8.5 L10 2" fill="none" stroke="#333" stroke-width="1.1"/></svg></div>
<div class="t" style="left:50px;top:1008px;font-family:'Liberation Mono', monospace;font-size:10.6px;transform:scaleX(0.9438);transform-origin:0 0;">1805004e</div>
<div class="cb" style="left:121px;top:1008px"><svg width="11" height="11" style="position:absolute;left:0;top:0"><path d="M1.5 5.5 L4.5 8.5 L10 2" fill="none" stroke="#333" stroke-width="1.1"/></svg></div>
<div class="t" style="left:140px;top:1008px;font-family:'Liberation Mono', monospace;font-size:10.6px;transform:scaleX(0.9435);transform-origin:0 0;">8</div>
<div class="cb" style="left:161px;top:1008px"><svg width="11" height="11" style="position:absolute;left:0;top:0"><path d="M1.5 5.5 L4.5 8.5 L10 2" fill="none" stroke="#333" stroke-width="1.1"/></svg></div>
<div class="t" style="left:180px;top:1008px;font-family:'Liberation Mono', monospace;font-size:10.6px;transform:scaleX(0.9435);transform-origin:0 0;">00</div>
<div class="cb" style="left:206px;top:1008px"><svg width="11" height="11" style="position:absolute;left:0;top:0"><path d="M1.5 5.5 L4.5 8.5 L10 2" fill="none" stroke="#333" stroke-width="1.1"/></svg></div>
<div class="t" style="left:225px;top:1008px;font-family:'Liberation Mono', monospace;font-size:10.6px;transform:scaleX(0.9435);transform-origin:0 0;">00</div>
<div class="cb" style="left:251px;top:1008px"><svg width="11" height="11" style="position:absolute;left:0;top:0"><path d="M1.5 5.5 L4.5 8.5 L10 2" fill="none" stroke="#333" stroke-width="1.1"/></svg></div>
<div class="t" style="left:270px;top:1008px;font-family:'Liberation Mono', monospace;font-size:10.6px;transform:scaleX(0.9435);transform-origin:0 0;">00</div>
<div class="cb" style="left:296px;top:1008px"><svg width="11" height="11" style="position:absolute;left:0;top:0"><path d="M1.5 5.5 L4.5 8.5 L10 2" fill="none" stroke="#333" stroke-width="1.1"/></svg></div>
<div class="t" style="left:315px;top:1008px;font-family:'Liberation Mono', monospace;font-size:10.6px;transform:scaleX(0.9435);transform-origin:0 0;">00</div>
<div class="cb" style="left:341px;top:1008px"><svg width="11" height="11" style="position:absolute;left:0;top:0"><path d="M1.5 5.5 L4.5 8.5 L10 2" fill="none" stroke="#333" stroke-width="1.1"/></svg></div>
<div class="t" style="left:360px;top:1008px;font-family:'Liberation Mono', monospace;font-size:10.6px;transform:scaleX(0.9435);transform-origin:0 0;">00</div>
<div class="cb" style="left:386px;top:1008px"><svg width="11" height="11" style="position:absolute;left:0;top:0"><path d="M1.5 5.5 L4.5 8.5 L10 2" fill="none" stroke="#333" stroke-width="1.1"/></svg></div>
<div class="t" style="left:405px;top:1008px;font-family:'Liberation Mono', monospace;font-size:10.6px;transform:scaleX(0.9435);transform-origin:0 0;">00</div>
<div class="cb" style="left:431px;top:1008px"><svg width="11" height="11" style="position:absolute;left:0;top:0"><path d="M1.5 5.5 L4.5 8.5 L10 2" fill="none" stroke="#333" stroke-width="1.1"/></svg></div>
<div class="t" style="left:450px;top:1008px;font-family:'Liberation Mono', monospace;font-size:10.6px;transform:scaleX(0.9435);transform-origin:0 0;">4e</div>
<div class="cb" style="left:476px;top:1008px"><svg width="11" height="11" style="position:absolute;left:0;top:0"><path d="M1.5 5.5 L4.5 8.5 L10 2" fill="none" stroke="#333" stroke-width="1.1"/></svg></div>
<div class="t" style="left:495px;top:1008px;font-family:'Liberation Mono', monospace;font-size:10.6px;transform:scaleX(0.9435);transform-origin:0 0;">03</div>
<div class="t" style="left:522px;top:1008px;font-family:'Liberation Mono', monospace;font-size:10.6px;transform:scaleX(0.9435);transform-origin:0 0;">325</div>
<div style="position:absolute;left:703px;top:206px;width:15px;height:813px;background:#f0f0f0">
</div>
<svg style="position:absolute;left:703px;top:206px" width="15" height="16"><path d="M4 10 L7.5 6.5 L11 10" fill="none" stroke="#505050" stroke-width="2"/></svg>
<div style="position:absolute;left:703px;top:223px;width:15px;height:208px;background:#cdcdcd">
</div>
<svg style="position:absolute;left:703px;top:1002px" width="15" height="16"><path d="M4 6.5 L7.5 10 L11 6.5" fill="none" stroke="#505050" stroke-width="2"/></svg>
<div style="position:absolute;left:728px;top:164px;width:200px;height:20px;background:#fff;border:1px solid #7a7a7a">
</div>
<div class="t" style="left:731px;top:168px;font-family:'Liberation Sans', sans-serif;font-size:12px;transform:scaleX(0.9302);transform-origin:0 0;color:#8a8a8a">Фильтр</div>
<div style="position:absolute;left:933px;top:164px;width:844px;height:20px;background:#e1e1e1;border:1px solid #adadad">
</div>
<div class="t" style="left:936px;top:168px;font-family:'Liberation Sans', sans-serif;font-size:12px;transform:scaleX(0.8995);transform-origin:0 0;">OK J1939 (FMS) 250 kb/s ID0 v0.7 17.03.2021</div>
<svg style="position:absolute;left:1763px;top:172px" width="10" height="6"><path d="M0.8 0.8 L4.5 4.6 L8.2 0.8" fill="none" stroke="#333" stroke-width="1.1"/></svg>
<div class="t" style="left:1796px;top:168px;font-family:'Liberation Sans', sans-serif;font-size:12px;transform:scaleX(0.8615);transform-origin:0 0;">Engine шина</div>
<div style="position:absolute;left:1863px;top:164px;width:53px;height:20px;background:#e1e1e1;border:1px solid #adadad">
</div>
<div class="t" style="left:1866px;top:168px;font-family:'Liberation Sans', sans-serif;font-size:12px;transform:scaleX(0.8527);transform-origin:0 0;">CAN1</div>
<svg style="position:absolute;left:1902px;top:172px" width="10" height="6"><path d="M0.8 0.8 L4.5 4.6 L8.2 0.8" fill="none" stroke="#333" stroke-width="1.1"/></svg>
<div style="position:absolute;left:724px;top:189px;width:1196px;height:831px;background:#fff;border:1px solid #828790">
</div>
<div style="position:absolute;left:728px;top:190px;width:1px;height:820px;background:#e8e8e8">
</div>
<div style="position:absolute;left:1917px;top:212px;width:1px;height:798px;background:#ececec">
</div>
<div style="position:absolute;left:1028px;top:190px;width:1px;height:22px;background:#e8e8e8">
</div>
<div style="position:absolute;left:1027px;top:212px;width:2px;height:798px;background:#e8e8e8">
</div>
<div style="position:absolute;left:1078px;top:190px;width:1px;height:22px;background:#e8e8e8">
</div>
<div style="position:absolute;left:1077px;top:212px;width:2px;height:798px;background:#e8e8e8">
</div>
<div style="position:absolute;left:1128px;top:190px;width:1px;height:22px;background:#e8e8e8">
</div>
<div style="position:absolute;left:1127px;top:212px;width:2px;height:798px;background:#e8e8e8">
</div>
<div style="position:absolute;left:1208px;top:190px;width:1px;height:22px;background:#e8e8e8">
</div>
<div style="position:absolute;left:1207px;top:212px;width:2px;height:798px;background:#e8e8e8">
</div>
<div style="position:absolute;left:1288px;top:190px;width:1px;height:22px;background:#e8e8e8">
</div>
<div style="position:absolute;left:1287px;top:212px;width:2px;height:798px;background:#e8e8e8">
</div>
<div style="position:absolute;left:1368px;top:190px;width:1px;height:22px;background:#e8e8e8">
</div>
<div style="position:absolute;left:1367px;top:212px;width:2px;height:798px;background:#e8e8e8">
</div>
<div class="t" style="left:853.5px;top:195px;font-family:'Liberation Sans', sans-serif;font-size:12px;transform:scaleX(0.9604);transform-origin:0 0;">Название</div>
<div class="t" style="left:1038.5px;top:195px;font-family:'Liberation Sans', sans-serif;font-size:12px;transform:scaleX(0.9183);transform-origin:0 0;">CAN1</div>
<div class="t" style="left:1088.5px;top:195px;font-family:'Liberation Sans', sans-serif;font-size:12px;transform:scaleX(0.9433);transform-origin:0 0;">CAN2</div>
<div class="t" style="left:1141.7px;top:195px;font-family:'Liberation Sans', sans-serif;font-size:12px;;">Значение</div>
<div class="t" style="left:1237.8px;top:195px;font-family:'Liberation Sans', sans-serif;font-size:12px;transform:scaleX(0.8760);transform-origin:0 0;">DEC</div>
<div class="t" style="left:1318.2px;top:195px;font-family:'Liberation Sans', sans-serif;font-size:12px;transform:scaleX(0.8749);transform-origin:0 0;">HEX</div>
<div class="t" style="left:1634px;top:195px;font-family:'Liberation Sans', sans-serif;font-size:12px;transform:scaleX(0.9393);transform-origin:0 0;">BIN</div>
<div style="position:absolute;left:728px;top:232px;width:1190px;height:2px;background:#e8e8e8">
</div>
<div class="t" style="left:732px;top:217px;font-family:'Liberation Sans', sans-serif;font-size:12px;transform:scaleX(0.9740);transform-origin:0 0;color:#b9b9b9">sc2: Уровень топлива в баке, %</div>
<div style="position:absolute;left:1050px;top:219px;width:6px;height:6px;border-radius:50%;background:#3cb44a"></div>
<div class="t" style="right:716px;top:215px;font-family:'Liberation Sans', sans-serif;font-size:12px;transform:scaleX(1.0000);transform-origin:100% 0;color:#b9b9b9">0</div>
<div class="t" style="right:636.5px;top:215px;font-family:'Liberation Sans', sans-serif;font-size:12px;transform:scaleX(1.0000);transform-origin:100% 0;color:#b9b9b9">0</div>
<div class="t" style="left:1293.5px;top:215px;font-family:'Liberation Sans', sans-serif;font-size:12px;transform:scaleX(1.0382);transform-origin:0 0;color:#b9b9b9">0x00000000</div>
<div class="t" style="left:1372px;top:215px;font-family:'Liberation Sans', sans-serif;font-size:12px;transform:scaleX(1.0453);transform-origin:0 0;color:#b9b9b9">0b00000000000000000000000000000000</div>
<div style="position:absolute;left:728px;top:253px;width:1190px;height:2px;background:#e8e8e8">
</div>
<div class="t" style="left:732px;top:238px;font-family:'Liberation Sans', sans-serif;font-size:12px;transform:scaleX(0.9740);transform-origin:0 0;color:#000">sc3: Полный расход топлива, 0.5 л</div>
<div style="position:absolute;left:1050px;top:240px;width:6px;height:6px;border-radius:50%;background:#3cb44a"></div>
<svg style="position:absolute;left:1133px;top:237px" width="14" height="14"><circle cx="7" cy="7" r="6" fill="#fff" stroke="#3a88d0" stroke-width="1.1"/><rect x="6.3" y="6" width="1.5" height="4.5" fill="#3a88d0"/><circle cx="7.05" cy="3.9" r="0.95" fill="#3a88d0"/></svg>
<div class="t" style="right:716px;top:236px;font-family:'Liberation Sans', sans-serif;font-size:12px;transform:scaleX(1.0000);transform-origin:100% 0;color:#0000ff">0</div>
<div class="t" style="right:636.5px;top:236px;font-family:'Liberation Sans', sans-serif;font-size:12px;transform:scaleX(1.0000);transform-origin:100% 0;color:#000">0</div>
<div class="t" style="left:1293.5px;top:236px;font-family:'Liberation Sans', sans-serif;font-size:12px;transform:scaleX(1.0382);transform-origin:0 0;color:#000">0x00000000</div>
<div class="t" style="left:1372px;top:236px;font-family:'Liberation Sans', sans-serif;font-size:12px;transform:scaleX(1.0453);transform-origin:0 0;color:#000">0b00000000000000000000000000000000</div>
<div style="position:absolute;left:728px;top:274px;width:1190px;height:2px;background:#e8e8e8">
</div>
<div class="t" style="left:732px;top:259px;font-family:'Liberation Sans', sans-serif;font-size:12px;transform:scaleX(0.9740);transform-origin:0 0;color:#b9b9b9">sc4: Обороты двигателя, об/мин</div>
<div style="position:absolute;left:1050px;top:261px;width:6px;height:6px;border-radius:50%;background:#3cb44a"></div>
<div class="t" style="right:716px;top:257px;font-family:'Liberation Sans', sans-serif;font-size:12px;transform:scaleX(1.0000);transform-origin:100% 0;color:#b9b9b9">0</div>
<div class="t" style="right:636.5px;top:257px;font-family:'Liberation Sans', sans-serif;font-size:12px;transform:scaleX(1.0000);transform-origin:100% 0;color:#b9b9b9">0</div>
<div class="t" style="left:1293.5px;top:257px;font-family:'Liberation Sans', sans-serif;font-size:12px;transform:scaleX(1.0382);transform-origin:0 0;color:#b9b9b9">0x00000000</div>
<div class="t" style="left:1372px;top:257px;font-family:'Liberation Sans', sans-serif;font-size:12px;transform:scaleX(1.0453);transform-origin:0 0;color:#b9b9b9">0b00000000000000000000000000000000</div>
<div style="position:absolute;left:728px;top:295px;width:1190px;height:2px;background:#e8e8e8">
</div>
<div class="t" style="left:732px;top:280px;font-family:'Liberation Sans', sans-serif;font-size:12px;transform:scaleX(0.9740);transform-origin:0 0;color:#b9b9b9">sc5: Температура охлаждающей жидкости (двигате...</div>
<div style="position:absolute;left:1050px;top:282px;width:6px;height:6px;border-radius:50%;background:#3cb44a"></div>
<div class="t" style="right:716px;top:278px;font-family:'Liberation Sans', sans-serif;font-size:12px;transform:scaleX(1.0000);transform-origin:100% 0;color:#b9b9b9">0</div>
<div class="t" style="right:636.5px;top:278px;font-family:'Liberation Sans', sans-serif;font-size:12px;transform:scaleX(1.0000);transform-origin:100% 0;color:#b9b9b9">0</div>
<div class="t" style="left:1293.5px;top:278px;font-family:'Liberation Sans', sans-serif;font-size:12px;transform:scaleX(1.0382);transform-origin:0 0;color:#b9b9b9">0x00000000</div>
<div class="t" style="left:1372px;top:278px;font-family:'Liberation Sans', sans-serif;font-size:12px;transform:scaleX(1.0453);transform-origin:0 0;color:#b9b9b9">0b00000000000000000000000000000000</div>
<div style="position:absolute;left:728px;top:316px;width:1190px;height:2px;background:#e8e8e8">
</div>
<div class="t" style="left:732px;top:301px;font-family:'Liberation Sans', sans-serif;font-size:12px;transform:scaleX(0.9740);transform-origin:0 0;color:#000">sc6: Полный пробег ТС, 0.005 км</div>
<div style="position:absolute;left:1050px;top:303px;width:6px;height:6px;border-radius:50%;background:#3cb44a"></div>
<svg style="position:absolute;left:1133px;top:300px" width="14" height="14"><circle cx="7" cy="7" r="6" fill="#fff" stroke="#3a88d0" stroke-width="1.1"/><rect x="6.3" y="6" width="1.5" height="4.5" fill="#3a88d0"/><circle cx="7.05" cy="3.9" r="0.95" fill="#3a88d0"/></svg>
<div class="t" style="right:716px;top:299px;font-family:'Liberation Sans', sans-serif;font-size:12px;transform:scaleX(1.0000);transform-origin:100% 0;color:#0000ff">0</div>
<div class="t" style="right:636.5px;top:299px;font-family:'Liberation Sans', sans-serif;font-size:12px;transform:scaleX(1.0000);transform-origin:100% 0;color:#000">0</div>
<div class="t" style="left:1293.5px;top:299px;font-family:'Liberation Sans', sans-serif;font-size:12px;transform:scaleX(1.0382);transform-origin:0 0;color:#000">0x00000000</div>
<div class="t" style="left:1372px;top:299px;font-family:'Liberation Sans', sans-serif;font-size:12px;transform:scaleX(1.0453);transform-origin:0 0;color:#000">0b00000000000000000000000000000000</div>
<div style="position:absolute;left:728px;top:337px;width:1190px;height:2px;background:#e8e8e8">
</div>
<div class="t" style="left:732px;top:322px;font-family:'Liberation Sans', sans-serif;font-size:12px;transform:scaleX(0.9740);transform-origin:0 0;color:#b9b9b9">sc7: Нагрузка на ось 1, кг</div>
<div style="position:absolute;left:1050px;top:324px;width:6px;height:6px;border-radius:50%;background:#3cb44a"></div>
<div class="t" style="right:716px;top:320px;font-family:'Liberation Sans', sans-serif;font-size:12px;transform:scaleX(1.0000);transform-origin:100% 0;color:#b9b9b9">0</div>
<div class="t" style="right:636.5px;top:320px;font-family:'Liberation Sans', sans-serif;font-size:12px;transform:scaleX(1.0000);transform-origin:100% 0;color:#b9b9b9">0</div>
<div class="t" style="left:1293.5px;top:320px;font-family:'Liberation Sans', sans-serif;font-size:12px;transform:scaleX(1.0382);transform-origin:0 0;color:#b9b9b9">0x00000000</div>
<div class="t" style="left:1372px;top:320px;font-family:'Liberation Sans', sans-serif;font-size:12px;transform:scaleX(1.0453);transform-origin:0 0;color:#b9b9b9">0b00000000000000000000000000000000</div>
<div style="position:absolute;left:728px;top:358px;width:1190px;height:2px;background:#e8e8e8">
</div>
<div class="t" style="left:732px;top:343px;font-family:'Liberation Sans', sans-serif;font-size:12px;transform:scaleX(0.9740);transform-origin:0 0;color:#b9b9b9">sc8: Нагрузка на ось 2, кг</div>
<div style="position:absolute;left:1050px;top:345px;width:6px;height:6px;border-radius:50%;background:#3cb44a"></div>
<div class="t" style="right:716px;top:341px;font-family:'Liberation Sans', sans-serif;font-size:12px;transform:scaleX(1.0000);transform-origin:100% 0;color:#b9b9b9">0</div>
<div class="t" style="right:636.5px;top:341px;font-family:'Liberation Sans', sans-serif;font-size:12px;transform:scaleX(1.0000);transform-origin:100% 0;color:#b9b9b9">0</div>
<div class="t" style="left:1293.5px;top:341px;font-family:'Liberation Sans', sans-serif;font-size:12px;transform:scaleX(1.0382);transform-origin:0 0;color:#b9b9b9">0x00000000</div>
<div class="t" style="left:1372px;top:341px;font-family:'Liberation Sans', sans-serif;font-size:12px;transform:scaleX(1.0453);transform-origin:0 0;color:#b9b9b9">0b00000000000000000000000000000000</div>
<div style="position:absolute;left:728px;top:379px;width:1190px;height:2px;background:#e8e8e8">
</div>
<div class="t" style="left:732px;top:364px;font-family:'Liberation Sans', sans-serif;font-size:12px;transform:scaleX(0.9740);transform-origin:0 0;color:#b9b9b9">sc9: Нагрузка на ось 3, кг</div>
<div style="position:absolute;left:1050px;top:366px;width:6px;height:6px;border-radius:50%;background:#3cb44a"></div>
<div class="t" style="right:716px;top:362px;font-family:'Liberation Sans', sans-serif;font-size:12px;transform:scaleX(1.0000);transform-origin:100% 0;color:#b9b9b9">0</div>
<div class="t" style="right:636.5px;top:362px;font-family:'Liberation Sans', sans-serif;font-size:12px;transform:scaleX(1.0000);transform-origin:100% 0;color:#b9b9b9">0</div>
<div class="t" style="left:1293.5px;top:362px;font-family:'Liberation Sans', sans-serif;font-size:12px;transform:scaleX(1.0382);transform-origin:0 0;color:#b9b9b9">0x00000000</div>
<div class="t" style="left:1372px;top:362px;font-family:'Liberation Sans', sans-serif;font-size:12px;transform:scaleX(1.0453);transform-origin:0 0;color:#b9b9b9">0b00000000000000000000000000000000</div>
<div style="position:absolute;left:728px;top:400px;width:1190px;height:2px;background:#e8e8e8">
</div>
<div class="t" style="left:732px;top:385px;font-family:'Liberation Sans', sans-serif;font-size:12px;transform:scaleX(0.9740);transform-origin:0 0;color:#b9b9b9">sc10: Нагрузка на ось 4, кг</div>
<div style="position:absolute;left:1050px;top:387px;width:6px;height:6px;border-radius:50%;background:#3cb44a"></div>
<div class="t" style="right:716px;top:383px;font-family:'Liberation Sans', sans-serif;font-size:12px;transform:scaleX(1.0000);transform-origin:100% 0;color:#b9b9b9">0</div>
<div class="t" style="right:636.5px;top:383px;font-family:'Liberation Sans', sans-serif;font-size:12px;transform:scaleX(1.0000);transform-origin:100% 0;color:#b9b9b9">0</div>
<div class="t" style="left:1293.5px;top:383px;font-family:'Liberation Sans', sans-serif;font-size:12px;transform:scaleX(1.0382);transform-origin:0 0;color:#b9b9b9">0x00000000</div>
<div class="t" style="left:1372px;top:383px;font-family:'Liberation Sans', sans-serif;font-size:12px;transform:scaleX(1.0453);transform-origin:0 0;color:#b9b9b9">0b00000000000000000000000000000000</div>
<div style="position:absolute;left:728px;top:421px;width:1190px;height:2px;background:#e8e8e8">
</div>
<div class="t" style="left:732px;top:406px;font-family:'Liberation Sans', sans-serif;font-size:12px;transform:scaleX(0.9740);transform-origin:0 0;color:#b9b9b9">sc11: Нагрузка на ось 5, кг</div>
<div style="position:absolute;left:1050px;top:408px;width:6px;height:6px;border-radius:50%;background:#3cb44a"></div>
<div class="t" style="right:716px;top:404px;font-family:'Liberation Sans', sans-serif;font-size:12px;transform:scaleX(1.0000);transform-origin:100% 0;color:#b9b9b9">0</div>
<div class="t" style="right:636.5px;top:404px;font-family:'Liberation Sans', sans-serif;font-size:12px;transform:scaleX(1.0000);transform-origin:100% 0;color:#b9b9b9">0</div>
<div class="t" style="left:1293.5px;top:404px;font-family:'Liberation Sans', sans-serif;font-size:12px;transform:scaleX(1.0382);transform-origin:0 0;color:#b9b9b9">0x00000000</div>
<div class="t" style="left:1372px;top:404px;font-family:'Liberation Sans', sans-serif;font-size:12px;transform:scaleX(1.0453);transform-origin:0 0;color:#b9b9b9">0b00000000000000000000000000000000</div>
<div style="position:absolute;left:728px;top:442px;width:1190px;height:2px;background:#e8e8e8">
</div>
<div class="t" style="left:732px;top:427px;font-family:'Liberation Sans', sans-serif;font-size:12px;transform:scaleX(0.9740);transform-origin:0 0;color:#b9b9b9">sc12: Положение педали газа, %</div>
<div style="position:absolute;left:1050px;top:429px;width:6px;height:6px;border-radius:50%;background:#3cb44a"></div>
<div class="t" style="right:716px;top:425px;font-family:'Liberation Sans', sans-serif;font-size:12px;transform:scaleX(1.0000);transform-origin:100% 0;color:#b9b9b9">0</div>
<div class="t" style="right:636.5px;top:425px;font-family:'Liberation Sans', sans-serif;font-size:12px;transform:scaleX(1.0000);transform-origin:100% 0;color:#b9b9b9">0</div>
<div class="t" style="left:1293.5px;top:425px;font-family:'Liberation Sans', sans-serif;font-size:12px;transform:scaleX(1.0382);transform-origin:0 0;color:#b9b9b9">0x00000000</div>
<div class="t" style="left:1372px;top:425px;font-family:'Liberation Sans', sans-serif;font-size:12px;transform:scaleX(1.0453);transform-origin:0 0;color:#b9b9b9">0b00000000000000000000000000000000</div>
<div style="position:absolute;left:728px;top:463px;width:1190px;height:2px;background:#e8e8e8">
</div>
<div class="t" style="left:732px;top:448px;font-family:'Liberation Sans', sans-serif;font-size:12px;transform:scaleX(0.9740);transform-origin:0 0;color:#b9b9b9">sc13: Положение педали тормоза, %</div>
<div style="position:absolute;left:1050px;top:450px;width:6px;height:6px;border-radius:50%;background:#3cb44a"></div>
<div class="t" style="right:716px;top:446px;font-family:'Liberation Sans', sans-serif;font-size:12px;transform:scaleX(1.0000);transform-origin:100% 0;color:#b9b9b9">0</div>
<div class="t" style="right:636.5px;top:446px;font-family:'Liberation Sans', sans-serif;font-size:12px;transform:scaleX(1.0000);transform-origin:100% 0;color:#b9b9b9">0</div>
<div class="t" style="left:1293.5px;top:446px;font-family:'Liberation Sans', sans-serif;font-size:12px;transform:scaleX(1.0382);transform-origin:0 0;color:#b9b9b9">0x00000000</div>
<div class="t" style="left:1372px;top:446px;font-family:'Liberation Sans', sans-serif;font-size:12px;transform:scaleX(1.0453);transform-origin:0 0;color:#b9b9b9">0b00000000000000000000000000000000</div>
<div style="position:absolute;left:728px;top:484px;width:1190px;height:2px;background:#e8e8e8">
</div>
<div class="t" style="left:732px;top:469px;font-family:'Liberation Sans', sans-serif;font-size:12px;transform:scaleX(0.9740);transform-origin:0 0;color:#b9b9b9">sc14: Нагрузка на двигатель, %</div>
<div style="position:absolute;left:1050px;top:471px;width:6px;height:6px;border-radius:50%;background:#3cb44a"></div>
<div class="t" style="right:716px;top:467px;font-family:'Liberation Sans', sans-serif;font-size:12px;transform:scaleX(1.0000);transform-origin:100% 0;color:#b9b9b9">0</div>
<div class="t" style="right:636.5px;top:467px;font-family:'Liberation Sans', sans-serif;font-size:12px;transform:scaleX(1.0000);transform-origin:100% 0;color:#b9b9b9">0</div>
<div class="t" style="left:1293.5px;top:467px;font-family:'Liberation Sans', sans-serif;font-size:12px;transform:scaleX(1.0382);transform-origin:0 0;color:#b9b9b9">0x00000000</div>
<div class="t" style="left:1372px;top:467px;font-family:'Liberation Sans', sans-serif;font-size:12px;transform:scaleX(1.0453);transform-origin:0 0;color:#b9b9b9">0b00000000000000000000000000000000</div>
<div style="position:absolute;left:728px;top:505px;width:1190px;height:2px;background:#e8e8e8">
</div>
<div class="t" style="left:732px;top:490px;font-family:'Liberation Sans', sans-serif;font-size:12px;transform:scaleX(0.9740);transform-origin:0 0;color:#b9b9b9">sc16: Уровень жидкости в дизельном фильтре вых...</div>
<div style="position:absolute;left:1050px;top:492px;width:6px;height:6px;border-radius:50%;background:#3cb44a"></div>
<div class="t" style="right:716px;top:488px;font-family:'Liberation Sans', sans-serif;font-size:12px;transform:scaleX(1.0000);transform-origin:100% 0;color:#b9b9b9">0</div>
<div class="t" style="right:636.5px;top:488px;font-family:'Liberation Sans', sans-serif;font-size:12px;transform:scaleX(1.0000);transform-origin:100% 0;color:#b9b9b9">0</div>
<div class="t" style="left:1293.5px;top:488px;font-family:'Liberation Sans', sans-serif;font-size:12px;transform:scaleX(1.0382);transform-origin:0 0;color:#b9b9b9">0x00000000</div>
<div class="t" style="left:1372px;top:488px;font-family:'Liberation Sans', sans-serif;font-size:12px;transform:scaleX(1.0453);transform-origin:0 0;color:#b9b9b9">0b00000000000000000000000000000000</div>
<div style="position:absolute;left:728px;top:526px;width:1190px;height:2px;background:#e8e8e8">
</div>
<div class="t" style="left:732px;top:511px;font-family:'Liberation Sans', sans-serif;font-size:12px;transform:scaleX(0.9740);transform-origin:0 0;color:#000">sc17: Полное время работы двигателя, с</div>
<div style="position:absolute;left:1050px;top:513px;width:6px;height:6px;border-radius:50%;background:#3cb44a"></div>
<svg style="position:absolute;left:1133px;top:510px" width="14" height="14"><circle cx="7" cy="7" r="6" fill="#fff" stroke="#3a88d0" stroke-width="1.1"/><rect x="6.3" y="6" width="1.5" height="4.5" fill="#3a88d0"/><circle cx="7.05" cy="3.9" r="0.95" fill="#3a88d0"/></svg>
<div class="t" style="right:716px;top:510px;font-family:'Liberation Mono', monospace;font-size:13.2px;transform:scaleX(0.8655);transform-origin:100% 0;color:#0000ff">0.00</div>
<div class="t" style="right:636.5px;top:509px;font-family:'Liberation Sans', sans-serif;font-size:12px;transform:scaleX(1.0000);transform-origin:100% 0;color:#000">0</div>
<div class="t" style="left:1293.5px;top:509px;font-family:'Liberation Sans', sans-serif;font-size:12px;transform:scaleX(1.0382);transform-origin:0 0;color:#000">0x00000000</div>
<div class="t" style="left:1372px;top:509px;font-family:'Liberation Sans', sans-serif;font-size:12px;transform:scaleX(1.0453);transform-origin:0 0;color:#000">0b00000000000000000000000000000000</div>
<div style="position:absolute;left:728px;top:547px;width:1190px;height:2px;background:#e8e8e8">
</div>
<div class="t" style="left:732px;top:532px;font-family:'Liberation Sans', sans-serif;font-size:12px;transform:scaleX(0.9740);transform-origin:0 0;color:#b9b9b9">sc18: Расстояние до ТО, x5 км</div>
<div style="position:absolute;left:1050px;top:534px;width:6px;height:6px;border-radius:50%;background:#3cb44a"></div>
<div class="t" style="right:716px;top:531px;font-family:'Liberation Mono', monospace;font-size:13.2px;transform:scaleX(0.8655);transform-origin:100% 0;color:#b9b9b9">0.00</div>
<div class="t" style="right:636.5px;top:530px;font-family:'Liberation Sans', sans-serif;font-size:12px;transform:scaleX(1.0000);transform-origin:100% 0;color:#b9b9b9">0</div>
<div class="t" style="left:1293.5px;top:530px;font-family:'Liberation Sans', sans-serif;font-size:12px;transform:scaleX(1.0382);transform-origin:0 0;color:#b9b9b9">0x00000000</div>
<div class="t" style="left:1372px;top:530px;font-family:'Liberation Sans', sans-serif;font-size:12px;transform:scaleX(1.0453);transform-origin:0 0;color:#b9b9b9">0b00000000000000000000000000000000</div>
<div style="position:absolute;left:728px;top:568px;width:1190px;height:2px;background:#e8e8e8">
</div>
<div class="t" style="left:732px;top:553px;font-family:'Liberation Sans', sans-serif;font-size:12px;transform:scaleX(0.9740);transform-origin:0 0;color:#b9b9b9">sc19: Скорость ТС, км/ч</div>
<div style="position:absolute;left:1050px;top:555px;width:6px;height:6px;border-radius:50%;background:#3cb44a"></div>
<div class="t" style="right:716px;top:551px;font-family:'Liberation Sans', sans-serif;font-size:12px;transform:scaleX(1.0000);transform-origin:100% 0;color:#b9b9b9">0</div>
<div class="t" style="right:636.5px;top:551px;font-family:'Liberation Sans', sans-serif;font-size:12px;transform:scaleX(1.0000);transform-origin:100% 0;color:#b9b9b9">0</div>
<div class="t" style="left:1293.5px;top:551px;font-family:'Liberation Sans', sans-serif;font-size:12px;transform:scaleX(1.0382);transform-origin:0 0;color:#b9b9b9">0x00000000</div>
<div class="t" style="left:1372px;top:551px;font-family:'Liberation Sans', sans-serif;font-size:12px;transform:scaleX(1.0453);transform-origin:0 0;color:#b9b9b9">0b00000000000000000000000000000000</div>
<div style="position:absolute;left:728px;top:589px;width:1190px;height:2px;background:#e8e8e8">
</div>
<div class="t" style="left:732px;top:574px;font-family:'Liberation Sans', sans-serif;font-size:12px;transform:scaleX(0.9740);transform-origin:0 0;color:#b9b9b9">sc21: Флаги состояния безопасности. Зажигание вк...</div>
<div style="position:absolute;left:1050px;top:576px;width:6px;height:6px;border-radius:50%;background:#3cb44a"></div>
<div class="t" style="right:716px;top:573px;font-family:'Liberation Mono', monospace;font-size:13.2px;transform:scaleX(0.8653);transform-origin:100% 0;color:#b9b9b9">Нет</div>
<div class="t" style="right:636.5px;top:572px;font-family:'Liberation Sans', sans-serif;font-size:12px;transform:scaleX(1.0000);transform-origin:100% 0;color:#b9b9b9">0</div>
<div class="t" style="left:1293.5px;top:572px;font-family:'Liberation Sans', sans-serif;font-size:12px;transform:scaleX(1.0382);transform-origin:0 0;color:#b9b9b9">0x00000000</div>
<div class="t" style="left:1372px;top:572px;font-family:'Liberation Sans', sans-serif;font-size:12px;transform:scaleX(1.0453);transform-origin:0 0;color:#b9b9b9">0b00000000000000000000000000000000</div>
<div style="position:absolute;left:728px;top:610px;width:1190px;height:2px;background:#e8e8e8">
</div>
<div class="t" style="left:732px;top:595px;font-family:'Liberation Sans', sans-serif;font-size:12px;transform:scaleX(0.9740);transform-origin:0 0;color:#b9b9b9">sc28: Флаги состояния безопасности. Сцепление в...</div>
<div style="position:absolute;left:1050px;top:597px;width:6px;height:6px;border-radius:50%;background:#3cb44a"></div>
<div class="t" style="right:716px;top:594px;font-family:'Liberation Mono', monospace;font-size:13.2px;transform:scaleX(0.8653);transform-origin:100% 0;color:#b9b9b9">Нет</div>
<div class="t" style="right:636.5px;top:593px;font-family:'Liberation Sans', sans-serif;font-size:12px;transform:scaleX(1.0000);transform-origin:100% 0;color:#b9b9b9">0</div>
<div class="t" style="left:1293.5px;top:593px;font-family:'Liberation Sans', sans-serif;font-size:12px;transform:scaleX(1.0382);transform-origin:0 0;color:#b9b9b9">0x00000000</div>
<div class="t" style="left:1372px;top:593px;font-family:'Liberation Sans', sans-serif;font-size:12px;transform:scaleX(1.0453);transform-origin:0 0;color:#b9b9b9">0b00000000000000000000000000000000</div>
<div style="position:absolute;left:728px;top:631px;width:1190px;height:2px;background:#e8e8e8">
</div>
<div class="t" style="left:732px;top:616px;font-family:'Liberation Sans', sans-serif;font-size:12px;transform:scaleX(0.9740);transform-origin:0 0;color:#b9b9b9">sc33: Флаги состояния безопасности. Затянут рыча...</div>
<div style="position:absolute;left:1050px;top:618px;width:6px;height:6px;border-radius:50%;background:#3cb44a"></div>
<div class="t" style="right:716px;top:615px;font-family:'Liberation Mono', monospace;font-size:13.2px;transform:scaleX(0.8653);transform-origin:100% 0;color:#b9b9b9">Нет</div>
<div class="t" style="right:636.5px;top:614px;font-family:'Liberation Sans', sans-serif;font-size:12px;transform:scaleX(1.0000);transform-origin:100% 0;color:#b9b9b9">0</div>
<div class="t" style="left:1293.5px;top:614px;font-family:'Liberation Sans', sans-serif;font-size:12px;transform:scaleX(1.0382);transform-origin:0 0;color:#b9b9b9">0x00000000</div>
<div class="t" style="left:1372px;top:614px;font-family:'Liberation Sans', sans-serif;font-size:12px;transform:scaleX(1.0453);transform-origin:0 0;color:#b9b9b9">0b00000000000000000000000000000000</div>
<div style="position:absolute;left:728px;top:652px;width:1190px;height:2px;background:#e8e8e8">
</div>
<div class="t" style="left:732px;top:637px;font-family:'Liberation Sans', sans-serif;font-size:12px;transform:scaleX(0.9740);transform-origin:0 0;color:#b9b9b9">sc34: Флаги состояния безопасности. Нажат ножно...</div>
<div style="position:absolute;left:1050px;top:639px;width:6px;height:6px;border-radius:50%;background:#3cb44a"></div>
<div class="t" style="right:716px;top:636px;font-family:'Liberation Mono', monospace;font-size:13.2px;transform:scaleX(0.8653);transform-origin:100% 0;color:#b9b9b9">Нет</div>
<div class="t" style="right:636.5px;top:635px;font-family:'Liberation Sans', sans-serif;font-size:12px;transform:scaleX(1.0000);transform-origin:100% 0;color:#b9b9b9">0</div>
<div class="t" style="left:1293.5px;top:635px;font-family:'Liberation Sans', sans-serif;font-size:12px;transform:scaleX(1.0382);transform-origin:0 0;color:#b9b9b9">0x00000000</div>
<div class="t" style="left:1372px;top:635px;font-family:'Liberation Sans', sans-serif;font-size:12px;transform:scaleX(1.0453);transform-origin:0 0;color:#b9b9b9">0b00000000000000000000000000000000</div>
<div style="position:absolute;left:728px;top:673px;width:1190px;height:2px;background:#e8e8e8">
</div>
<div class="t" style="left:732px;top:658px;font-family:'Liberation Sans', sans-serif;font-size:12px;transform:scaleX(0.9740);transform-origin:0 0;color:#000">sc35: Флаги состояния безопасности. Двигатель ра...</div>
<div style="position:absolute;left:1050px;top:660px;width:6px;height:6px;border-radius:50%;background:#3cb44a"></div>
<svg style="position:absolute;left:1133px;top:657px" width="14" height="14"><circle cx="7" cy="7" r="6" fill="#fff" stroke="#3a88d0" stroke-width="1.1"/><rect x="6.3" y="6" width="1.5" height="4.5" fill="#3a88d0"/><circle cx="7.05" cy="3.9" r="0.95" fill="#3a88d0"/></svg>
<div class="t" style="right:716px;top:657px;font-family:'Liberation Mono', monospace;font-size:13.2px;transform:scaleX(0.8653);transform-origin:100% 0;color:#0000ff">Нет</div>
<div class="t" style="right:636.5px;top:656px;font-family:'Liberation Sans', sans-serif;font-size:12px;transform:scaleX(1.0000);transform-origin:100% 0;color:#000">0</div>
<div class="t" style="left:1293.5px;top:656px;font-family:'Liberation Sans', sans-serif;font-size:12px;transform:scaleX(1.0382);transform-origin:0 0;color:#000">0x00000000</div>
<div class="t" style="left:1372px;top:656px;font-family:'Liberation Sans', sans-serif;font-size:12px;transform:scaleX(1.0453);transform-origin:0 0;color:#000">0b00000000000000000000000000000000</div>
<div style="position:absolute;left:728px;top:694px;width:1190px;height:2px;background:#e8e8e8">
</div>
<div class="t" style="left:732px;top:679px;font-family:'Liberation Sans', sans-serif;font-size:12px;transform:scaleX(0.9740);transform-origin:0 0;color:#b9b9b9">sc64: Контроллеры аварии. Круиз-контроль</div>
<div style="position:absolute;left:1050px;top:681px;width:6px;height:6px;border-radius:50%;background:#3cb44a"></div>
<div class="t" style="right:716px;top:678px;font-family:'Liberation Mono', monospace;font-size:13.2px;transform:scaleX(0.8653);transform-origin:100% 0;color:#b9b9b9">Нет</div>
<div class="t" style="right:636.5px;top:677px;font-family:'Liberation Sans', sans-serif;font-size:12px;transform:scaleX(1.0000);transform-origin:100% 0;color:#b9b9b9">0</div>
<div class="t" style="left:1293.5px;top:677px;font-family:'Liberation Sans', sans-serif;font-size:12px;transform:scaleX(1.0382);transform-origin:0 0;color:#b9b9b9">0x00000000</div>
<div class="t" style="left:1372px;top:677px;font-family:'Liberation Sans', sans-serif;font-size:12px;transform:scaleX(1.0453);transform-origin:0 0;color:#b9b9b9">0b00000000000000000000000000000000</div>
<div style="position:absolute;left:728px;top:715px;width:1190px;height:2px;background:#e8e8e8">
</div>
<div class="t" style="left:732px;top:700px;font-family:'Liberation Sans', sans-serif;font-size:12px;transform:scaleX(0.9740);transform-origin:0 0;color:#b9b9b9">sc72: Информация о неисправностях. Горит лампа...</div>
<div style="position:absolute;left:1050px;top:702px;width:6px;height:6px;border-radius:50%;background:#3cb44a"></div>
<div class="t" style="right:716px;top:699px;font-family:'Liberation Mono', monospace;font-size:13.2px;transform:scaleX(0.8653);transform-origin:100% 0;color:#b9b9b9">Нет</div>
<div class="t" style="right:636.5px;top:698px;font-family:'Liberation Sans', sans-serif;font-size:12px;transform:scaleX(1.0000);transform-origin:100% 0;color:#b9b9b9">0</div>
<div class="t" style="left:1293.5px;top:698px;font-family:'Liberation Sans', sans-serif;font-size:12px;transform:scaleX(1.0382);transform-origin:0 0;color:#b9b9b9">0x00000000</div>
<div class="t" style="left:1372px;top:698px;font-family:'Liberation Sans', sans-serif;font-size:12px;transform:scaleX(1.0453);transform-origin:0 0;color:#b9b9b9">0b00000000000000000000000000000000</div>
<div style="position:absolute;left:728px;top:736px;width:1190px;height:2px;background:#e8e8e8">
</div>
<div class="t" style="left:732px;top:721px;font-family:'Liberation Sans', sans-serif;font-size:12px;transform:scaleX(0.9740);transform-origin:0 0;color:#b9b9b9">sc73: Информация о неисправностях. Горит красн...</div>
<div style="position:absolute;left:1050px;top:723px;width:6px;height:6px;border-radius:50%;background:#3cb44a"></div>
<div class="t" style="right:716px;top:720px;font-family:'Liberation Mono', monospace;font-size:13.2px;transform:scaleX(0.8653);transform-origin:100% 0;color:#b9b9b9">Нет</div>
<div class="t" style="right:636.5px;top:719px;font-family:'Liberation Sans', sans-serif;font-size:12px;transform:scaleX(1.0000);transform-origin:100% 0;color:#b9b9b9">0</div>
<div class="t" style="left:1293.5px;top:719px;font-family:'Liberation Sans', sans-serif;font-size:12px;transform:scaleX(1.0382);transform-origin:0 0;color:#b9b9b9">0x00000000</div>
<div class="t" style="left:1372px;top:719px;font-family:'Liberation Sans', sans-serif;font-size:12px;transform:scaleX(1.0453);transform-origin:0 0;color:#b9b9b9">0b00000000000000000000000000000000</div>
<div style="position:absolute;left:728px;top:757px;width:1190px;height:2px;background:#e8e8e8">
</div>
<div class="t" style="left:732px;top:742px;font-family:'Liberation Sans', sans-serif;font-size:12px;transform:scaleX(0.9740);transform-origin:0 0;color:#b9b9b9">sc74: Информация о неисправностях. Горит желта...</div>
<div style="position:absolute;left:1050px;top:744px;width:6px;height:6px;border-radius:50%;background:#3cb44a"></div>
<div class="t" style="right:716px;top:741px;font-family:'Liberation Mono', monospace;font-size:13.2px;transform:scaleX(0.8653);transform-origin:100% 0;color:#b9b9b9">Нет</div>
<div class="t" style="right:636.5px;top:740px;font-family:'Liberation Sans', sans-serif;font-size:12px;transform:scaleX(1.0000);transform-origin:100% 0;color:#b9b9b9">0</div>
<div class="t" style="left:1293.5px;top:740px;font-family:'Liberation Sans', sans-serif;font-size:12px;transform:scaleX(1.0382);transform-origin:0 0;color:#b9b9b9">0x00000000</div>
<div class="t" style="left:1372px;top:740px;font-family:'Liberation Sans', sans-serif;font-size:12px;transform:scaleX(1.0453);transform-origin:0 0;color:#b9b9b9">0b00000000000000000000000000000000</div>
<div style="position:absolute;left:728px;top:778px;width:1190px;height:2px;background:#e8e8e8">
</div>
<div class="t" style="left:732px;top:763px;font-family:'Liberation Sans', sans-serif;font-size:12px;transform:scaleX(0.9740);transform-origin:0 0;color:#b9b9b9">sc75: Информация о неисправностях. Горит лампа...</div>
<div style="position:absolute;left:1050px;top:765px;width:6px;height:6px;border-radius:50%;background:#3cb44a"></div>
<div class="t" style="right:716px;top:762px;font-family:'Liberation Mono', monospace;font-size:13.2px;transform:scaleX(0.8653);transform-origin:100% 0;color:#b9b9b9">Нет</div>
<div class="t" style="right:636.5px;top:761px;font-family:'Liberation Sans', sans-serif;font-size:12px;transform:scaleX(1.0000);transform-origin:100% 0;color:#b9b9b9">0</div>
<div class="t" style="left:1293.5px;top:761px;font-family:'Liberation Sans', sans-serif;font-size:12px;transform:scaleX(1.0382);transform-origin:0 0;color:#b9b9b9">0x00000000</div>
<div class="t" style="left:1372px;top:761px;font-family:'Liberation Sans', sans-serif;font-size:12px;transform:scaleX(1.0453);transform-origin:0 0;color:#b9b9b9">0b00000000000000000000000000000000</div>
<div style="position:absolute;left:728px;top:799px;width:1190px;height:2px;background:#e8e8e8">
</div>
<div class="t" style="left:732px;top:784px;font-family:'Liberation Sans', sans-serif;font-size:12px;transform:scaleX(0.9740);transform-origin:0 0;color:#b9b9b9">sc76: Информация о неисправностях. Мигает ламп...</div>
<div style="position:absolute;left:1050px;top:786px;width:6px;height:6px;border-radius:50%;background:#3cb44a"></div>
<div class="t" style="right:716px;top:783px;font-family:'Liberation Mono', monospace;font-size:13.2px;transform:scaleX(0.8653);transform-origin:100% 0;color:#b9b9b9">Нет</div>
<div class="t" style="right:636.5px;top:782px;font-family:'Liberation Sans', sans-serif;font-size:12px;transform:scaleX(1.0000);transform-origin:100% 0;color:#b9b9b9">0</div>
<div class="t" style="left:1293.5px;top:782px;font-family:'Liberation Sans', sans-serif;font-size:12px;transform:scaleX(1.0382);transform-origin:0 0;color:#b9b9b9">0x00000000</div>
<div class="t" style="left:1372px;top:782px;font-family:'Liberation Sans', sans-serif;font-size:12px;transform:scaleX(1.0453);transform-origin:0 0;color:#b9b9b9">0b00000000000000000000000000000000</div>
<div style="position:absolute;left:728px;top:820px;width:1190px;height:2px;background:#e8e8e8">
</div>
<div class="t" style="left:732px;top:805px;font-family:'Liberation Sans', sans-serif;font-size:12px;transform:scaleX(0.9740);transform-origin:0 0;color:#b9b9b9">sc77: Информация о неисправностях. Мигает крас...</div>
<div style="position:absolute;left:1050px;top:807px;width:6px;height:6px;border-radius:50%;background:#3cb44a"></div>
<div class="t" style="right:716px;top:804px;font-family:'Liberation Mono', monospace;font-size:13.2px;transform:scaleX(0.8653);transform-origin:100% 0;color:#b9b9b9">Нет</div>
<div class="t" style="right:636.5px;top:803px;font-family:'Liberation Sans', sans-serif;font-size:12px;transform:scaleX(1.0000);transform-origin:100% 0;color:#b9b9b9">0</div>
<div class="t" style="left:1293.5px;top:803px;font-family:'Liberation Sans', sans-serif;font-size:12px;transform:scaleX(1.0382);transform-origin:0 0;color:#b9b9b9">0x00000000</div>
<div class="t" style="left:1372px;top:803px;font-family:'Liberation Sans', sans-serif;font-size:12px;transform:scaleX(1.0453);transform-origin:0 0;color:#b9b9b9">0b00000000000000000000000000000000</div>
<div style="position:absolute;left:728px;top:841px;width:1190px;height:2px;background:#e8e8e8">
</div>
<div class="t" style="left:732px;top:826px;font-family:'Liberation Sans', sans-serif;font-size:12px;transform:scaleX(0.9740);transform-origin:0 0;color:#b9b9b9">sc78: Информация о неисправностях. Мигает желт...</div>
<div style="position:absolute;left:1050px;top:828px;width:6px;height:6px;border-radius:50%;background:#3cb44a"></div>
<div class="t" style="right:716px;top:825px;font-family:'Liberation Mono', monospace;font-size:13.2px;transform:scaleX(0.8653);transform-origin:100% 0;color:#b9b9b9">Нет</div>
<div class="t" style="right:636.5px;top:824px;font-family:'Liberation Sans', sans-serif;font-size:12px;transform:scaleX(1.0000);transform-origin:100% 0;color:#b9b9b9">0</div>
<div class="t" style="left:1293.5px;top:824px;font-family:'Liberation Sans', sans-serif;font-size:12px;transform:scaleX(1.0382);transform-origin:0 0;color:#b9b9b9">0x00000000</div>
<div class="t" style="left:1372px;top:824px;font-family:'Liberation Sans', sans-serif;font-size:12px;transform:scaleX(1.0453);transform-origin:0 0;color:#b9b9b9">0b00000000000000000000000000000000</div>
<div style="position:absolute;left:728px;top:862px;width:1190px;height:2px;background:#e8e8e8">
</div>
<div class="t" style="left:732px;top:847px;font-family:'Liberation Sans', sans-serif;font-size:12px;transform:scaleX(0.9740);transform-origin:0 0;color:#b9b9b9">sc79: Информация о неисправностях. Мигает ламп...</div>
<div style="position:absolute;left:1050px;top:849px;width:6px;height:6px;border-radius:50%;background:#3cb44a"></div>
<div class="t" style="right:716px;top:846px;font-family:'Liberation Mono', monospace;font-size:13.2px;transform:scaleX(0.8653);transform-origin:100% 0;color:#b9b9b9">Нет</div>
<div class="t" style="right:636.5px;top:845px;font-family:'Liberation Sans', sans-serif;font-size:12px;transform:scaleX(1.0000);transform-origin:100% 0;color:#b9b9b9">0</div>
<div class="t" style="left:1293.5px;top:845px;font-family:'Liberation Sans', sans-serif;font-size:12px;transform:scaleX(1.0382);transform-origin:0 0;color:#b9b9b9">0x00000000</div>
<div class="t" style="left:1372px;top:845px;font-family:'Liberation Sans', sans-serif;font-size:12px;transform:scaleX(1.0453);transform-origin:0 0;color:#b9b9b9">0b00000000000000000000000000000000</div>
<div style="position:absolute;left:728px;top:883px;width:1190px;height:2px;background:#e8e8e8">
</div>
<div class="t" style="left:732px;top:868px;font-family:'Liberation Sans', sans-serif;font-size:12px;transform:scaleX(0.9740);transform-origin:0 0;color:#b9b9b9">sc80: Информация о неисправностях. Диагностиче...</div>
<div style="position:absolute;left:1050px;top:870px;width:6px;height:6px;border-radius:50%;background:#3cb44a"></div>
<div class="t" style="right:716px;top:866px;font-family:'Liberation Sans', sans-serif;font-size:12px;transform:scaleX(1.0000);transform-origin:100% 0;color:#b9b9b9">0</div>
<div class="t" style="right:636.5px;top:866px;font-family:'Liberation Sans', sans-serif;font-size:12px;transform:scaleX(1.0000);transform-origin:100% 0;color:#b9b9b9">0</div>
<div class="t" style="left:1293.5px;top:866px;font-family:'Liberation Sans', sans-serif;font-size:12px;transform:scaleX(1.0382);transform-origin:0 0;color:#b9b9b9">0x00000000</div>
<div class="t" style="left:1372px;top:866px;font-family:'Liberation Sans', sans-serif;font-size:12px;transform:scaleX(1.0453);transform-origin:0 0;color:#b9b9b9">0b00000000000000000000000000000000</div>
<div style="position:absolute;left:728px;top:904px;width:1190px;height:2px;background:#e8e8e8">
</div>
<div class="t" style="left:732px;top:889px;font-family:'Liberation Sans', sans-serif;font-size:12px;transform:scaleX(0.9740);transform-origin:0 0;color:#b9b9b9">ac151: Мгновенный расход топлива, 0.05 л/ч</div>
<div style="position:absolute;left:1050px;top:891px;width:6px;height:6px;border-radius:50%;background:#3cb44a"></div>
<div class="t" style="right:716px;top:887px;font-family:'Liberation Sans', sans-serif;font-size:12px;transform:scaleX(1.0000);transform-origin:100% 0;color:#b9b9b9">0</div>
<div class="t" style="right:636.5px;top:887px;font-family:'Liberation Sans', sans-serif;font-size:12px;transform:scaleX(1.0000);transform-origin:100% 0;color:#b9b9b9">0</div>
<div class="t" style="left:1293.5px;top:887px;font-family:'Liberation Sans', sans-serif;font-size:12px;transform:scaleX(1.0382);transform-origin:0 0;color:#b9b9b9">0x00000000</div>
<div class="t" style="left:1372px;top:887px;font-family:'Liberation Sans', sans-serif;font-size:12px;transform:scaleX(1.0453);transform-origin:0 0;color:#b9b9b9">0b00000000000000000000000000000000</div>
<div style="position:absolute;left:728px;top:925px;width:1190px;height:2px;background:#e8e8e8">
</div>
<div class="t" style="left:732px;top:910px;font-family:'Liberation Sans', sans-serif;font-size:12px;transform:scaleX(0.9740);transform-origin:0 0;color:#b9b9b9">ac159: Нагрузка ретардера (замедлителя), %</div>
<div style="position:absolute;left:1050px;top:912px;width:6px;height:6px;border-radius:50%;background:#3cb44a"></div>
<div class="t" style="right:716px;top:908px;font-family:'Liberation Sans', sans-serif;font-size:12px;transform:scaleX(1.0000);transform-origin:100% 0;color:#b9b9b9">0</div>
<div class="t" style="right:636.5px;top:908px;font-family:'Liberation Sans', sans-serif;font-size:12px;transform:scaleX(1.0000);transform-origin:100% 0;color:#b9b9b9">0</div>
<div class="t" style="left:1293.5px;top:908px;font-family:'Liberation Sans', sans-serif;font-size:12px;transform:scaleX(1.0382);transform-origin:0 0;color:#b9b9b9">0x00000000</div>
<div class="t" style="left:1372px;top:908px;font-family:'Liberation Sans', sans-serif;font-size:12px;transform:scaleX(1.0453);transform-origin:0 0;color:#b9b9b9">0b00000000000000000000000000000000</div>
<div style="position:absolute;left:728px;top:946px;width:1190px;height:2px;background:#e8e8e8">
</div>
<div class="t" style="left:732px;top:931px;font-family:'Liberation Sans', sans-serif;font-size:12px;transform:scaleX(0.9740);transform-origin:0 0;color:#b9b9b9">ac176: Температура наружного воздуха, *С</div>
<div style="position:absolute;left:1050px;top:933px;width:6px;height:6px;border-radius:50%;background:#3cb44a"></div>
<div class="t" style="right:716px;top:929px;font-family:'Liberation Sans', sans-serif;font-size:12px;transform:scaleX(1.0000);transform-origin:100% 0;color:#b9b9b9">0</div>
<div class="t" style="right:636.5px;top:929px;font-family:'Liberation Sans', sans-serif;font-size:12px;transform:scaleX(1.0000);transform-origin:100% 0;color:#b9b9b9">0</div>
<div class="t" style="left:1293.5px;top:929px;font-family:'Liberation Sans', sans-serif;font-size:12px;transform:scaleX(1.0382);transform-origin:0 0;color:#b9b9b9">0x00000000</div>
<div class="t" style="left:1372px;top:929px;font-family:'Liberation Sans', sans-serif;font-size:12px;transform:scaleX(1.0453);transform-origin:0 0;color:#b9b9b9">0b00000000000000000000000000000000</div>
<div style="position:absolute;left:728px;top:967px;width:1190px;height:2px;background:#e8e8e8">
</div>
<div class="t" style="left:732px;top:952px;font-family:'Liberation Sans', sans-serif;font-size:12px;transform:scaleX(0.9740);transform-origin:0 0;color:#b9b9b9">ac193: Масса нагрузки, кг</div>
<div style="position:absolute;left:1050px;top:954px;width:6px;height:6px;border-radius:50%;background:#3cb44a"></div>
<div class="t" style="right:716px;top:950px;font-family:'Liberation Sans', sans-serif;font-size:12px;transform:scaleX(1.0000);transform-origin:100% 0;color:#b9b9b9">0</div>
<div class="t" style="right:636.5px;top:950px;font-family:'Liberation Sans', sans-serif;font-size:12px;transform:scaleX(1.0000);transform-origin:100% 0;color:#b9b9b9">0</div>
<div class="t" style="left:1293.5px;top:950px;font-family:'Liberation Sans', sans-serif;font-size:12px;transform:scaleX(1.0382);transform-origin:0 0;color:#b9b9b9">0x00000000</div>
<div class="t" style="left:1372px;top:950px;font-family:'Liberation Sans', sans-serif;font-size:12px;transform:scaleX(1.0453);transform-origin:0 0;color:#b9b9b9">0b00000000000000000000000000000000</div>
<div style="position:absolute;left:728px;top:988px;width:1190px;height:2px;background:#e8e8e8">
</div>
<div class="t" style="left:732px;top:973px;font-family:'Liberation Sans', sans-serif;font-size:12px;transform:scaleX(0.9740);transform-origin:0 0;color:#000">ac208: Общий вес транспортного средства, кг</div>
<div style="position:absolute;left:1050px;top:975px;width:6px;height:6px;border-radius:50%;background:#3cb44a"></div>
<svg style="position:absolute;left:1133px;top:972px" width="14" height="14"><circle cx="7" cy="7" r="6" fill="#fff" stroke="#3a88d0" stroke-width="1.1"/><rect x="6.3" y="6" width="1.5" height="4.5" fill="#3a88d0"/><circle cx="7.05" cy="3.9" r="0.95" fill="#3a88d0"/></svg>
<div class="t" style="right:716px;top:972px;font-family:'Liberation Mono', monospace;font-size:13.2px;transform:scaleX(0.8653);transform-origin:100% 0;color:#0000ff">n/a</div>
<div class="t" style="right:636.5px;top:972px;font-family:'Liberation Mono', monospace;font-size:13.2px;transform:scaleX(0.8757);transform-origin:100% 0;color:#000">4294967295</div>
<div class="t" style="left:1293px;top:972px;font-family:'Liberation Mono', monospace;font-size:13.2px;transform:scaleX(0.8719);transform-origin:0 0;color:#000">0xffffffff</div>
<div class="t" style="left:1372px;top:971px;font-family:'Liberation Sans', sans-serif;font-size:12px;transform:scaleX(1.1901);transform-origin:0 0;color:#000">0b11111111111111111111111111111111</div>
<div style="position:absolute;left:728px;top:1009px;width:1190px;height:2px;background:#e8e8e8">
</div>
<div class="t" style="left:732px;top:994px;font-family:'Liberation Sans', sans-serif;font-size:12px;transform:scaleX(0.9740);transform-origin:0 0;color:#b9b9b9">ac211: Дальность поездки, 0,005 км</div>
<div style="position:absolute;left:1050px;top:996px;width:6px;height:6px;border-radius:50%;background:#3cb44a"></div>
<div class="t" style="right:716px;top:992px;font-family:'Liberation Sans', sans-serif;font-size:12px;transform:scaleX(1.0000);transform-origin:100% 0;color:#b9b9b9">0</div>
<div class="t" style="right:636.5px;top:992px;font-family:'Liberation Sans', sans-serif;font-size:12px;transform:scaleX(1.0000);transform-origin:100% 0;color:#b9b9b9">0</div>
<div class="t" style="left:1293.5px;top:992px;font-family:'Liberation Sans', sans-serif;font-size:12px;transform:scaleX(1.0382);transform-origin:0 0;color:#b9b9b9">0x00000000</div>
<div class="t" style="left:1372px;top:992px;font-family:'Liberation Sans', sans-serif;font-size:12px;transform:scaleX(1.0453);transform-origin:0 0;color:#b9b9b9">0b00000000000000000000000000000000</div>
<div style="position:absolute;left:0px;top:1020px;width:1921px;height:20px;background:#f0f0f0">
</div>
<div style="position:absolute;left:0px;top:1019px;width:720px;height:1px;background:#828790">
</div>
<div style="position:absolute;left:724px;top:1019px;width:1196px;height:1px;background:#828790">
</div>
<div style="position:absolute;left:1920px;top:169px;width:1px;height:850px;background:#1a1a1a">
</div>
<div style="position:absolute;left:1920px;top:169px;width:1px;height:7px;background:#3a6ab0">
</div>
<div class="t" style="left:3px;top:1025px;font-family:'Liberation Sans', sans-serif;font-size:12px;transform:scaleX(0.9162);transform-origin:0 0;color:#6d6d6d">11 бит:</div>
<div class="t" style="left:45px;top:1024px;font-family:'Liberation Sans', sans-serif;font-size:12px;;font-weight:bold">0</div>
<div style="position:absolute;left:112px;top:1021px;width:1px;height:18px;background:#d5d5d5">
</div>
<div class="t" style="left:116px;top:1025px;font-family:'Liberation Sans', sans-serif;font-size:12px;transform:scaleX(0.9081);transform-origin:0 0;color:#6d6d6d">29 бит:</div>
<div class="t" style="left:159px;top:1024px;font-family:'Liberation Sans', sans-serif;font-size:12px;transform:scaleX(1.0187);transform-origin:0 0;font-weight:bold">84823</div>
<div style="position:absolute;left:225px;top:1021px;width:1px;height:18px;background:#d5d5d5">
</div>
</body></html>
